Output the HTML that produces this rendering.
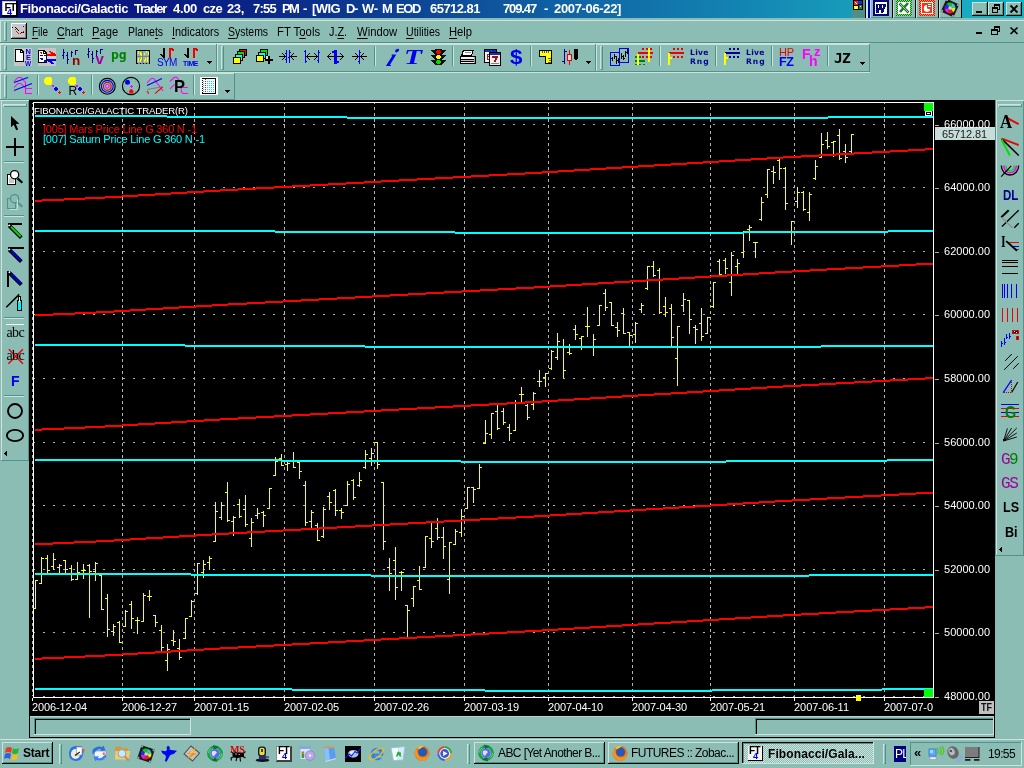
<!DOCTYPE html>
<html><head><meta charset="utf-8"><title>Fibonacci/Galactic Trader</title><style>
*{margin:0;padding:0;box-sizing:border-box}
html,body{width:1024px;height:768px;overflow:hidden;background:#8bbdb4;font-family:"Liberation Sans",sans-serif;font-size:12px;color:#000;will-change:transform}
.a{position:absolute}
#title{left:0;top:0;width:1024px;height:18px;background:linear-gradient(90deg,#0a0e7e 0,#0a2486 250px,#0f5aa0 520px,#1488b4 760px,#189cba 852px,#18b2c6 1024px)}
#ttext{left:20px;top:1px;width:700px;height:16px;color:#fff;font-weight:bold;font-size:13px;line-height:16px;white-space:pre}
.menu{top:24.6px;font-size:12px;line-height:14px;white-space:pre}
.menu u{text-decoration:underline;text-underline-offset:1.6px}
.hl{background:#cfe3de}
.sh{background:#4f948a}
svg{position:absolute;left:0;top:0;overflow:visible}
.tbtn{font-size:12px;line-height:14px;white-space:nowrap;overflow:hidden}
</style></head><body>
<div id="title" class="a"></div>
<div class="a" style="left:2px;top:1px;width:16px;height:16px;background:#000;"></div>
<div class="a" style="left:2px;top:1px;width:14px;height:14px;background:#c8c8c8;"></div>
<div class="a" style="left:3px;top:2px;width:13px;height:13px;background:#fff;"></div>
<div class="a" style="left:4.5px;top:1.5px;font:bold 10.5px/11px 'Liberation Sans',sans-serif;color:#000;letter-spacing:-0.9px">FT</div>
<div class="a" style="left:7px;top:7.5px;font:bold 9px/9px 'Liberation Sans',sans-serif;color:#0000f0">4</div>
<div id="ttext" class="a"><span class="a" style="left:0px;letter-spacing:-0.382px">Fibonacci/Galactic</span><span class="a" style="left:114px;letter-spacing:-1.292px">Trader</span><span class="a" style="left:153px;letter-spacing:-0.328px">4.00</span><span class="a" style="left:183px;letter-spacing:-0.656px">cze</span><span class="a" style="left:207px;letter-spacing:-0.359px">23,</span><span class="a" style="left:233px;letter-spacing:-0.758px">7:55</span><span class="a" style="left:262px;letter-spacing:-1.750px">PM</span><span class="a" style="left:283px;letter-spacing:0.000px">-</span><span class="a" style="left:292px;letter-spacing:-0.582px">[WIG</span><span class="a" style="left:326px;letter-spacing:-1.359px">D-</span><span class="a" style="left:342px;letter-spacing:-0.172px">W-</span><span class="a" style="left:362px;letter-spacing:0.000px">M</span><span class="a" style="left:376px;letter-spacing:-1.391px">EOD</span><span class="a" style="left:410px;letter-spacing:-0.529px">65712.81</span><span class="a" style="left:483px;letter-spacing:-1.128px">709.47</span><span class="a" style="left:524px;letter-spacing:0.000px">-</span><span class="a" style="left:534px;letter-spacing:-0.348px">2007-06-22]</span></div>
<div class="a" style="left:852px;top:0px;width:13px;height:18px;background:#4f8f88;"></div>
<div class="a" style="left:865px;top:0px;width:97px;height:18px;background:#8bbdb4;"></div>
<div class="a" style="left:852px;top:17px;width:110px;height:1px;background:#4f948a;"></div>
<svg width="1024" height="20" shape-rendering="crispEdges"><defs><pattern id="cw" width="2" height="2" patternUnits="userSpaceOnUse"><rect width="2" height="2" fill="#0000ff"/><rect width="1" height="1" fill="#000"/><rect x="1" y="1" width="1" height="1" fill="#000"/></pattern><pattern id="cx" width="2" height="2" patternUnits="userSpaceOnUse"><rect width="2" height="2" fill="#008000"/><rect width="1" height="1" fill="#a0d0a0"/><rect x="1" y="1" width="1" height="1" fill="#a0d0a0"/></pattern><pattern id="cp" width="2" height="2" patternUnits="userSpaceOnUse"><rect width="2" height="2" fill="#ff0000"/><rect width="1" height="1" fill="#d0a060"/><rect x="1" y="1" width="1" height="1" fill="#d0a060"/></pattern></defs><rect x="853" y="0" width="10" height="10" fill="#000"/><rect x="854" y="1" width="4" height="4" fill="#ff2020"/><rect x="858" y="1" width="4" height="3" fill="#1030e0"/><rect x="854" y="6" width="4" height="3" fill="#ffff20"/><rect x="859" y="5" width="3" height="4" fill="#208030"/><rect x="855" y="2" width="1" height="1" fill="#fff"/><rect x="856" y="3" width="1" height="1" fill="#fff"/><rect x="860" y="6" width="1" height="1" fill="#d0ffd0"/><rect x="855" y="7" width="2" height="1" fill="#fff"/><rect x="865" y="0" width="1" height="18" fill="#000"/><rect x="866" y="0" width="2" height="18" fill="#d0e8e4"/><rect x="868" y="0" width="2" height="18" fill="#0000b0"/><rect x="870" y="0" width="1" height="18" fill="#c0dcd8"/><rect x="873" y="0" width="16" height="16" fill="url(#cw)"/><rect x="875" y="2" width="12" height="12" fill="#fff"/><rect x="876" y="4" width="10" height="9" fill="url(#cw)"/><rect x="878" y="5" width="1" height="3" fill="#fff"/><rect x="882" y="5" width="1" height="3" fill="#fff"/><rect x="879" y="10" width="2" height="3" fill="#fff"/><path d="M886 6 L886 13 L883 13 Z" fill="#fff"/><rect x="896" y="0" width="16" height="16" fill="url(#cx)"/><rect x="898" y="2" width="12" height="12" fill="#fff"/><path d="M899.5 3.5 L908.5 12.5 M908 3 L900 12" stroke="#1a7a2a" stroke-width="2.6" shape-rendering="auto"/><path d="M900 4 L908 12" stroke="#e0f0e0" stroke-width="0.7" shape-rendering="auto"/><rect x="919" y="0" width="16" height="16" fill="url(#cp)"/><rect x="921" y="2" width="12" height="12" fill="#fff"/><rect x="922" y="3" width="10" height="10" fill="#f03818"/><path d="M927 5 A3.4 3.4 0 1 0 930.4 9.5 L927 8.4 Z" fill="#fff" shape-rendering="auto"/><rect x="928" y="4" width="3" height="1" fill="#fff"/><rect x="928" y="6" width="3" height="1" fill="#fff"/><rect x="892" y="0" width="1" height="18" fill="#000"/><rect x="893" y="0" width="1" height="18" fill="#c0dcd8"/><rect x="915" y="0" width="1" height="18" fill="#000"/><rect x="916" y="0" width="1" height="18" fill="#c0dcd8"/><rect x="938" y="0" width="1" height="18" fill="#000"/><rect x="939" y="0" width="1" height="18" fill="#c0dcd8"/><rect x="961" y="0" width="1" height="18" fill="#000"/></svg>
<svg width="1024" height="20"><g transform="translate(950,8) rotate(25) scale(1.0)"><rect x="-7" y="-7" width="14" height="14" fill="#181818"/><rect x="-7" y="-7" width="2" height="2" fill="#a0a0a0"/><rect x="5" y="-7" width="2" height="2" fill="#a0a0a0"/><rect x="-7" y="5" width="2" height="2" fill="#a0a0a0"/><rect x="5" y="5" width="2" height="2" fill="#a0a0a0"/><path d="M0 0 L0 -5.5 A5.5 5.5 0 0 1 4.8 -2.7 Z" fill="#20d0d0"/><path d="M0 0 L4.8 -2.7 A5.5 5.5 0 0 1 4.8 2.7 Z" fill="#f0e020"/><path d="M0 0 L4.8 2.7 A5.5 5.5 0 0 1 0 5.5 Z" fill="#e02020"/><path d="M0 0 L0 5.5 A5.5 5.5 0 0 1 -4.8 2.7 Z" fill="#e020e0"/><path d="M0 0 L-4.8 2.7 A5.5 5.5 0 0 1 -4.8 -2.7 Z" fill="#2030e0"/><path d="M0 0 L-4.8 -2.7 A5.5 5.5 0 0 1 0 -5.5 Z" fill="#20c020"/><circle r="1.6" fill="#d0d0d0"/></g></svg>
<div class="a" style="left:972px;top:2px;width:16px;height:14px;background:#8bbdb4;"></div>
<div class="a" style="left:972px;top:2px;width:15px;height:1px;background:#cfe3de;"></div>
<div class="a" style="left:972px;top:2px;width:1px;height:13px;background:#cfe3de;"></div>
<div class="a" style="left:972px;top:15px;width:16px;height:1px;background:#000;"></div>
<div class="a" style="left:987px;top:2px;width:1px;height:14px;background:#000;"></div>
<div class="a" style="left:973px;top:14px;width:14px;height:1px;background:#4f948a;"></div>
<div class="a" style="left:986px;top:3px;width:1px;height:12px;background:#4f948a;"></div>
<div class="a" style="left:988px;top:2px;width:16px;height:14px;background:#8bbdb4;"></div>
<div class="a" style="left:988px;top:2px;width:15px;height:1px;background:#cfe3de;"></div>
<div class="a" style="left:988px;top:2px;width:1px;height:13px;background:#cfe3de;"></div>
<div class="a" style="left:988px;top:15px;width:16px;height:1px;background:#000;"></div>
<div class="a" style="left:1003px;top:2px;width:1px;height:14px;background:#000;"></div>
<div class="a" style="left:989px;top:14px;width:14px;height:1px;background:#4f948a;"></div>
<div class="a" style="left:1002px;top:3px;width:1px;height:12px;background:#4f948a;"></div>
<div class="a" style="left:1006px;top:2px;width:16px;height:14px;background:#8bbdb4;"></div>
<div class="a" style="left:1006px;top:2px;width:15px;height:1px;background:#cfe3de;"></div>
<div class="a" style="left:1006px;top:2px;width:1px;height:13px;background:#cfe3de;"></div>
<div class="a" style="left:1006px;top:15px;width:16px;height:1px;background:#000;"></div>
<div class="a" style="left:1021px;top:2px;width:1px;height:14px;background:#000;"></div>
<div class="a" style="left:1007px;top:14px;width:14px;height:1px;background:#4f948a;"></div>
<div class="a" style="left:1020px;top:3px;width:1px;height:12px;background:#4f948a;"></div>
<svg width="1024" height="20" shape-rendering="crispEdges"><rect x="976" y="11" width="6" height="2" fill="#000"/><rect x="994" y="4" width="6" height="2" fill="#000"/><rect x="999" y="4" width="1" height="6" fill="#000"/><rect x="994" y="4" width="1" height="3" fill="#000"/><rect x="998" y="9" width="2" height="1" fill="#000"/><rect x="992" y="7" width="6" height="2" fill="#000"/><rect x="992" y="7" width="1" height="6" fill="#000"/><rect x="997" y="7" width="1" height="6" fill="#000"/><rect x="992" y="12" width="6" height="1" fill="#000"/></svg>
<svg width="1024" height="20"><path d="M1010.5 5.5 l7 7 M1017.5 5.5 l-7 7" stroke="#000" stroke-width="1.8" fill="none"/></svg>
<div class="a" style="left:0px;top:20px;width:1024px;height:1px;background:#cfe3de;"></div>
<div class="a" style="left:0px;top:42px;width:1024px;height:1px;background:#4f948a;"></div>
<div class="a" style="left:0px;top:43px;width:870px;height:1px;background:#cfe3de;"></div>
<div class="a" style="left:0px;top:20px;width:1px;height:22px;background:#cfe3de;"></div>
<div class="a" style="left:4px;top:22px;width:1px;height:18px;background:#cfe3de;"></div>
<div class="a" style="left:6px;top:22px;width:1px;height:19px;background:#4f948a;"></div>
<div class="a" style="left:4px;top:22px;width:2px;height:1px;background:#cfe3de;"></div>
<div class="a" style="left:5px;top:40px;width:2px;height:1px;background:#4f948a;"></div>
<div class="a" style="left:11px;top:23px;width:16px;height:16px;background:#c8c8c8;"></div>
<div class="a" style="left:11px;top:23px;width:16px;height:1px;background:#fff;"></div>
<div class="a" style="left:11px;top:23px;width:1px;height:16px;background:#fff;"></div>
<div class="a" style="left:11px;top:38px;width:16px;height:1px;background:#000;"></div>
<div class="a" style="left:26px;top:23px;width:1px;height:16px;background:#000;"></div>
<div class="a" style="left:12px;top:37px;width:14px;height:1px;background:#808080;"></div>
<div class="a" style="left:25px;top:24px;width:1px;height:14px;background:#808080;"></div>
<svg width="40" height="40" shape-rendering="crispEdges"><rect x="12" y="27" width="1" height="1" fill="#000"/><rect x="15" y="27" width="1" height="1" fill="#000"/><rect x="16" y="28" width="1" height="1" fill="#000"/><rect x="17" y="29" width="1" height="1" fill="#000"/><rect x="18" y="30" width="1" height="1" fill="#000"/><rect x="15" y="29" width="1" height="1" fill="#f00000"/><rect x="16" y="31" width="1" height="1" fill="#f00000"/><rect x="17" y="32" width="1" height="1" fill="#f00000"/><rect x="18" y="33" width="1" height="1" fill="#f00000"/><rect x="20" y="33" width="1" height="1" fill="#f00000"/><rect x="22" y="32" width="1" height="1" fill="#f00000"/><rect x="23" y="31" width="1" height="1" fill="#f00000"/><rect x="21" y="32" width="1" height="1" fill="#000"/><rect x="23" y="32" width="1" height="1" fill="#000"/><rect x="23" y="26" width="1" height="1" fill="#0000f0"/></svg>
<div class="a menu" style="left:32.4px;font-size:12.5px;transform:scaleX(0.7988);transform-origin:0 0"><u>F</u>ile</div>
<div class="a menu" style="left:57.4px;font-size:12.5px;transform:scaleX(0.8536);transform-origin:0 0"><u>C</u>hart</div>
<div class="a menu" style="left:92.4px;font-size:12.5px;transform:scaleX(0.8937);transform-origin:0 0"><u>P</u>age</div>
<div class="a menu" style="left:128.4px;font-size:12.5px;transform:scaleX(0.8413);transform-origin:0 0">Plane<u>t</u>s</div>
<div class="a menu" style="left:172.4px;font-size:12.5px;transform:scaleX(0.8687);transform-origin:0 0"><u>I</u>ndicators</div>
<div class="a menu" style="left:228.4px;font-size:12.5px;transform:scaleX(0.8365);transform-origin:0 0"><u>S</u>ystems</div>
<div class="a menu" style="left:277.4px;font-size:12.5px;transform:scaleX(0.9077);transform-origin:0 0">FT T<u>o</u>ols</div>
<div class="a menu" style="left:329.4px;font-size:12.5px;transform:scaleX(0.8677);transform-origin:0 0">J.<u>Z</u>.</div>
<div class="a menu" style="left:357.4px;font-size:12.5px;transform:scaleX(0.9014);transform-origin:0 0"><u>W</u>indow</div>
<div class="a menu" style="left:406.4px;font-size:12.5px;transform:scaleX(0.8462);transform-origin:0 0"><u>U</u>tilities</div>
<div class="a menu" style="left:449.4px;font-size:12.5px;transform:scaleX(0.8982);transform-origin:0 0"><u>H</u>elp</div>
<svg width="1024" height="44" shape-rendering="crispEdges"><rect x="976" y="32" width="6" height="2" fill="#000"/><rect x="994" y="26" width="6" height="2" fill="#000"/><rect x="999" y="26" width="1" height="6" fill="#000"/><rect x="994" y="26" width="1" height="3" fill="#000"/><rect x="998" y="31" width="2" height="1" fill="#000"/><rect x="991" y="29" width="7" height="2" fill="#000"/><rect x="991" y="29" width="1" height="6" fill="#000"/><rect x="997" y="29" width="1" height="6" fill="#000"/><rect x="991" y="34" width="7" height="1" fill="#000"/></svg>
<svg width="1024" height="44"><path d="M1010.5 27.5 l7 6.5 M1017.5 27.5 l-7 6.5" stroke="#000" stroke-width="1.7" fill="none"/></svg>
<div class="a" style="left:0px;top:71px;width:870px;height:1px;background:#4f948a;"></div>
<div class="a" style="left:0px;top:72px;width:870px;height:1px;background:#cfe3de;"></div>
<div class="a" style="left:0px;top:44px;width:217px;height:1px;background:#cfe3de;"></div>
<div class="a" style="left:0px;top:44px;width:1px;height:28px;background:#cfe3de;"></div>
<div class="a" style="left:0px;top:71px;width:217px;height:1px;background:#4f948a;"></div>
<div class="a" style="left:216px;top:44px;width:1px;height:28px;background:#4f948a;"></div>
<div class="a" style="left:217px;top:44px;width:379px;height:1px;background:#cfe3de;"></div>
<div class="a" style="left:217px;top:44px;width:1px;height:28px;background:#cfe3de;"></div>
<div class="a" style="left:217px;top:71px;width:379px;height:1px;background:#4f948a;"></div>
<div class="a" style="left:595px;top:44px;width:1px;height:28px;background:#4f948a;"></div>
<div class="a" style="left:596px;top:44px;width:274px;height:1px;background:#cfe3de;"></div>
<div class="a" style="left:596px;top:44px;width:1px;height:28px;background:#cfe3de;"></div>
<div class="a" style="left:596px;top:71px;width:274px;height:1px;background:#4f948a;"></div>
<div class="a" style="left:869px;top:44px;width:1px;height:28px;background:#4f948a;"></div>
<div class="a" style="left:4px;top:46px;width:1px;height:23px;background:#cfe3de;"></div>
<div class="a" style="left:6px;top:46px;width:1px;height:24px;background:#4f948a;"></div>
<div class="a" style="left:4px;top:46px;width:2px;height:1px;background:#cfe3de;"></div>
<div class="a" style="left:5px;top:69px;width:2px;height:1px;background:#4f948a;"></div>
<div class="a" style="left:221px;top:46px;width:1px;height:23px;background:#cfe3de;"></div>
<div class="a" style="left:223px;top:46px;width:1px;height:24px;background:#4f948a;"></div>
<div class="a" style="left:221px;top:46px;width:2px;height:1px;background:#cfe3de;"></div>
<div class="a" style="left:222px;top:69px;width:2px;height:1px;background:#4f948a;"></div>
<div class="a" style="left:600px;top:46px;width:1px;height:23px;background:#cfe3de;"></div>
<div class="a" style="left:602px;top:46px;width:1px;height:24px;background:#4f948a;"></div>
<div class="a" style="left:600px;top:46px;width:2px;height:1px;background:#cfe3de;"></div>
<div class="a" style="left:601px;top:69px;width:2px;height:1px;background:#4f948a;"></div>
<div class="a" style="left:0px;top:73px;width:235px;height:1px;background:#cfe3de;"></div>
<div class="a" style="left:0px;top:73px;width:1px;height:27px;background:#cfe3de;"></div>
<div class="a" style="left:0px;top:99px;width:235px;height:1px;background:#4f948a;"></div>
<div class="a" style="left:234px;top:73px;width:1px;height:27px;background:#4f948a;"></div>
<div class="a" style="left:0px;top:99px;width:235px;height:1px;background:#4f948a;"></div>
<div class="a" style="left:4px;top:75px;width:1px;height:22px;background:#cfe3de;"></div>
<div class="a" style="left:6px;top:75px;width:1px;height:23px;background:#4f948a;"></div>
<div class="a" style="left:4px;top:75px;width:2px;height:1px;background:#cfe3de;"></div>
<div class="a" style="left:5px;top:97px;width:2px;height:1px;background:#4f948a;"></div>
<div class="a" style="left:374px;top:46px;width:1px;height:20px;background:#4f948a;"></div>
<div class="a" style="left:375px;top:46px;width:1px;height:20px;background:#cfe3de;"></div>
<div class="a" style="left:452px;top:46px;width:1px;height:20px;background:#4f948a;"></div>
<div class="a" style="left:453px;top:46px;width:1px;height:20px;background:#cfe3de;"></div>
<div class="a" style="left:530px;top:46px;width:1px;height:20px;background:#4f948a;"></div>
<div class="a" style="left:531px;top:46px;width:1px;height:20px;background:#cfe3de;"></div>
<div class="a" style="left:659px;top:46px;width:1px;height:20px;background:#4f948a;"></div>
<div class="a" style="left:660px;top:46px;width:1px;height:20px;background:#cfe3de;"></div>
<div class="a" style="left:715px;top:46px;width:1px;height:20px;background:#4f948a;"></div>
<div class="a" style="left:716px;top:46px;width:1px;height:20px;background:#cfe3de;"></div>
<div class="a" style="left:771px;top:46px;width:1px;height:20px;background:#4f948a;"></div>
<div class="a" style="left:772px;top:46px;width:1px;height:20px;background:#cfe3de;"></div>
<div class="a" style="left:827px;top:46px;width:1px;height:20px;background:#4f948a;"></div>
<div class="a" style="left:828px;top:46px;width:1px;height:20px;background:#cfe3de;"></div>
<div class="a" style="left:37px;top:75px;width:1px;height:20px;background:#4f948a;"></div>
<div class="a" style="left:38px;top:75px;width:1px;height:20px;background:#cfe3de;"></div>
<div class="a" style="left:91px;top:75px;width:1px;height:20px;background:#4f948a;"></div>
<div class="a" style="left:92px;top:75px;width:1px;height:20px;background:#cfe3de;"></div>
<div class="a" style="left:193px;top:75px;width:1px;height:20px;background:#4f948a;"></div>
<div class="a" style="left:194px;top:75px;width:1px;height:20px;background:#cfe3de;"></div>
<svg width="1024" height="100" shape-rendering="crispEdges"><rect x="14" y="48" width="18" height="18" fill="#c6c6c6"/><path d="M15 49 H21 L24 52 V62 H15 Z" fill="#000"/><path d="M16 50 H20 V53 H23 V61 H16 Z" fill="#fff"/><rect x="21" y="51" width="1" height="1" fill="#fff"/><rect x="38" y="48" width="18" height="18" fill="#c6c6c6"/><path d="M38 50 H44 L47 53 V63 H38 Z" fill="#000"/><path d="M39 51 H43 V54 H46 V62 H39 Z" fill="#fff"/><rect x="44" y="52" width="1" height="1" fill="#fff"/><rect x="40" y="52" width="2" height="1" fill="#f00000"/><rect x="41" y="53" width="1" height="1" fill="#f00000"/><rect x="40" y="55" width="3" height="1" fill="#0000f0"/><rect x="44" y="55" width="2" height="1" fill="#0000f0"/><rect x="40" y="58" width="3" height="1" fill="#0000f0"/><rect x="41" y="59" width="2" height="1" fill="#0000f0"/><rect x="44" y="60" width="2" height="2" fill="#0000f0"/><rect x="47" y="54" width="9" height="2" fill="#f00000"/><rect x="51" y="53" width="4" height="1" fill="#f00000"/><rect x="50" y="52" width="3" height="1" fill="#f00000"/><rect x="49" y="51" width="2" height="1" fill="#f00000"/><rect x="47" y="56" width="9" height="3" fill="#d8d0d0"/><rect x="47" y="59" width="9" height="2" fill="#0000f0"/><rect x="48" y="61" width="4" height="1" fill="#0000f0"/><rect x="50" y="62" width="3" height="1" fill="#0000f0"/><rect x="51" y="63" width="3" height="1" fill="#0000f0"/><rect x="63" y="49" width="1" height="10" fill="#000090"/><rect x="62" y="55" width="1" height="1" fill="#000090"/><rect x="64" y="52" width="1" height="1" fill="#000090"/><rect x="67" y="52" width="1" height="12" fill="#000090"/><rect x="66" y="55" width="1" height="1" fill="#000090"/><rect x="68" y="59" width="1" height="1" fill="#000090"/><rect x="71" y="51" width="1" height="6" fill="#000090"/><rect x="72" y="52" width="1" height="1" fill="#000090"/><rect x="75" y="50" width="1" height="5" fill="#000090"/><rect x="76" y="50" width="2" height="1" fill="#000090"/><rect x="88" y="48" width="1" height="10" fill="#000090"/><rect x="87" y="54" width="1" height="1" fill="#000090"/><rect x="89" y="51" width="1" height="1" fill="#000090"/><rect x="92" y="51" width="1" height="12" fill="#000090"/><rect x="91" y="54" width="1" height="1" fill="#000090"/><rect x="93" y="58" width="1" height="1" fill="#000090"/><rect x="96" y="50" width="1" height="6" fill="#000090"/><rect x="97" y="51" width="1" height="1" fill="#000090"/><rect x="100" y="49" width="1" height="5" fill="#000090"/><rect x="101" y="49" width="2" height="1" fill="#000090"/><rect x="136" y="50" width="14" height="14" fill="#000"/><rect x="137" y="51" width="12" height="12" fill="#8fb4bc"/><rect x="142" y="51" width="1" height="12" fill="#808080"/><rect x="137" y="56" width="12" height="1" fill="#808080"/><rect x="138" y="51" width="1" height="3" fill="#ffff00"/><rect x="140" y="52" width="1" height="3" fill="#ffff00"/><rect x="141" y="53" width="1" height="3" fill="#ffff00"/><rect x="144" y="53" width="1" height="2" fill="#ffff00"/><rect x="146" y="51" width="1" height="2" fill="#ffff00"/><rect x="148" y="52" width="1" height="3" fill="#ffff00"/><rect x="138" y="58" width="1" height="4" fill="#ffff00"/><rect x="140" y="59" width="1" height="3" fill="#ffff00"/><rect x="141" y="57" width="1" height="3" fill="#ffff00"/><rect x="145" y="58" width="1" height="3" fill="#ffff00"/><rect x="147" y="57" width="1" height="5" fill="#ffff00"/><rect x="144" y="60" width="1" height="2" fill="#ffff00"/><rect x="138" y="63" width="2" height="1" fill="#808080"/><rect x="141" y="63" width="2" height="1" fill="#808080"/><rect x="144" y="63" width="2" height="1" fill="#808080"/><rect x="147" y="63" width="2" height="1" fill="#808080"/><rect x="163" y="48" width="2" height="10" fill="#000"/><rect x="160" y="54" width="2" height="1" fill="#000"/><rect x="161" y="55" width="2" height="1" fill="#000"/><rect x="162" y="56" width="2" height="1" fill="#000"/><rect x="169" y="48" width="2" height="10" fill="#f00000"/><rect x="171" y="48" width="2" height="1" fill="#f00000"/><rect x="171" y="49" width="3" height="1" fill="#f00000"/><rect x="172" y="50" width="2" height="1" fill="#f00000"/><rect x="187" y="48" width="2" height="10" fill="#000"/><rect x="184" y="54" width="2" height="1" fill="#000"/><rect x="185" y="55" width="2" height="1" fill="#000"/><rect x="186" y="56" width="2" height="1" fill="#000"/><rect x="193" y="48" width="2" height="10" fill="#f00000"/><rect x="195" y="48" width="2" height="1" fill="#f00000"/><rect x="195" y="49" width="3" height="1" fill="#f00000"/><rect x="196" y="50" width="2" height="1" fill="#f00000"/><rect x="207" y="61" width="5" height="1" fill="#000"/><rect x="208" y="62" width="3" height="1" fill="#000"/><rect x="209" y="63" width="1" height="1" fill="#000"/><rect x="239" y="49" width="8" height="7" fill="#000"/><rect x="240" y="50" width="6" height="5" fill="#ff0000"/><rect x="237" y="51" width="8" height="7" fill="#000"/><rect x="238" y="52" width="6" height="5" fill="#00e000"/><rect x="235" y="54" width="8" height="7" fill="#000"/><rect x="236" y="55" width="6" height="5" fill="#00ffff"/><rect x="233" y="57" width="8" height="7" fill="#000"/><rect x="234" y="58" width="6" height="5" fill="#ffff00"/><rect x="260" y="49" width="8" height="7" fill="#000"/><rect x="261" y="50" width="6" height="5" fill="#00e000"/><rect x="258" y="52" width="8" height="7" fill="#000"/><rect x="259" y="53" width="6" height="5" fill="#00ffff"/><rect x="256" y="55" width="8" height="7" fill="#000"/><rect x="257" y="56" width="6" height="5" fill="#ffff00"/><rect x="266" y="56" width="2" height="3" fill="#e0e0e0"/><rect x="265" y="59" width="8" height="2" fill="#000"/><rect x="268" y="56" width="2" height="8" fill="#000"/><rect x="279" y="56" width="7" height="1" fill="#000"/><rect x="284" y="55" width="1" height="1" fill="#000"/><rect x="284" y="57" width="1" height="1" fill="#000"/><rect x="283" y="54" width="1" height="1" fill="#000"/><rect x="283" y="58" width="1" height="1" fill="#000"/><rect x="282" y="53" width="1" height="1" fill="#000"/><rect x="282" y="59" width="1" height="1" fill="#000"/><rect x="290" y="56" width="7" height="1" fill="#000"/><rect x="291" y="55" width="1" height="1" fill="#000"/><rect x="291" y="57" width="1" height="1" fill="#000"/><rect x="292" y="54" width="1" height="1" fill="#000"/><rect x="292" y="58" width="1" height="1" fill="#000"/><rect x="293" y="53" width="1" height="1" fill="#000"/><rect x="293" y="59" width="1" height="1" fill="#000"/><rect x="286" y="50" width="1" height="13" fill="#0000f0"/><rect x="289" y="50" width="1" height="13" fill="#0000f0"/><rect x="285" y="53" width="1" height="1" fill="#0000f0"/><rect x="285" y="59" width="1" height="1" fill="#0000f0"/><rect x="290" y="52" width="1" height="1" fill="#0000f0"/><rect x="288" y="57" width="1" height="1" fill="#0000f0"/><rect x="305" y="50" width="1" height="13" fill="#0000f0"/><rect x="318" y="50" width="1" height="13" fill="#0000f0"/><rect x="304" y="51" width="1" height="1" fill="#0000f0"/><rect x="306" y="61" width="1" height="1" fill="#0000f0"/><rect x="319" y="52" width="1" height="1" fill="#0000f0"/><rect x="317" y="60" width="1" height="1" fill="#0000f0"/><rect x="306" y="56" width="12" height="1" fill="#000"/><rect x="307" y="55" width="1" height="1" fill="#000"/><rect x="307" y="57" width="1" height="1" fill="#000"/><rect x="308" y="54" width="1" height="1" fill="#000"/><rect x="308" y="58" width="1" height="1" fill="#000"/><rect x="309" y="53" width="1" height="1" fill="#000"/><rect x="309" y="59" width="1" height="1" fill="#000"/><rect x="316" y="55" width="1" height="1" fill="#000"/><rect x="316" y="57" width="1" height="1" fill="#000"/><rect x="315" y="54" width="1" height="1" fill="#000"/><rect x="315" y="58" width="1" height="1" fill="#000"/><rect x="314" y="53" width="1" height="1" fill="#000"/><rect x="314" y="59" width="1" height="1" fill="#000"/><rect x="327" y="56" width="17" height="1" fill="#000"/><rect x="328" y="55" width="1" height="1" fill="#000"/><rect x="328" y="57" width="1" height="1" fill="#000"/><rect x="329" y="54" width="1" height="1" fill="#000"/><rect x="329" y="58" width="1" height="1" fill="#000"/><rect x="330" y="53" width="1" height="1" fill="#000"/><rect x="330" y="59" width="1" height="1" fill="#000"/><rect x="342" y="55" width="1" height="1" fill="#000"/><rect x="342" y="57" width="1" height="1" fill="#000"/><rect x="341" y="54" width="1" height="1" fill="#000"/><rect x="341" y="58" width="1" height="1" fill="#000"/><rect x="340" y="53" width="1" height="1" fill="#000"/><rect x="340" y="59" width="1" height="1" fill="#000"/><rect x="334" y="50" width="3" height="14" fill="#0000f0"/><rect x="332" y="51" width="2" height="2" fill="#0000f0"/><rect x="337" y="61" width="2" height="2" fill="#0000f0"/><rect x="352" y="56" width="7" height="1" fill="#000"/><rect x="357" y="55" width="1" height="1" fill="#000"/><rect x="357" y="57" width="1" height="1" fill="#000"/><rect x="356" y="54" width="1" height="1" fill="#000"/><rect x="356" y="58" width="1" height="1" fill="#000"/><rect x="355" y="53" width="1" height="1" fill="#000"/><rect x="355" y="59" width="1" height="1" fill="#000"/><rect x="360" y="56" width="7" height="1" fill="#000"/><rect x="361" y="55" width="1" height="1" fill="#000"/><rect x="361" y="57" width="1" height="1" fill="#000"/><rect x="362" y="54" width="1" height="1" fill="#000"/><rect x="362" y="58" width="1" height="1" fill="#000"/><rect x="363" y="53" width="1" height="1" fill="#000"/><rect x="363" y="59" width="1" height="1" fill="#000"/><rect x="359" y="50" width="1" height="14" fill="#0000f0"/><rect x="360" y="52" width="1" height="1" fill="#0000f0"/><rect x="358" y="61" width="1" height="1" fill="#0000f0"/><rect x="435" y="49" width="7" height="16" fill="#101010"/><rect x="431" y="50" width="15" height="1" fill="#101010"/><rect x="432" y="51" width="13" height="1" fill="#101010"/><rect x="433" y="52" width="11" height="1" fill="#101010"/><rect x="434" y="53" width="9" height="1" fill="#101010"/><rect x="431" y="55" width="15" height="1" fill="#101010"/><rect x="432" y="56" width="13" height="1" fill="#101010"/><rect x="433" y="57" width="11" height="1" fill="#101010"/><rect x="434" y="58" width="9" height="1" fill="#101010"/><rect x="431" y="60" width="15" height="1" fill="#101010"/><rect x="432" y="61" width="13" height="1" fill="#101010"/><rect x="433" y="62" width="11" height="1" fill="#101010"/><rect x="434" y="63" width="9" height="1" fill="#101010"/><rect x="437" y="50" width="3" height="4" fill="#ff0000"/><rect x="436" y="51" width="5" height="2" fill="#ff0000"/><rect x="437" y="55" width="3" height="4" fill="#ffff00"/><rect x="436" y="56" width="5" height="2" fill="#ffff00"/><rect x="437" y="60" width="3" height="4" fill="#00e000"/><rect x="436" y="61" width="5" height="2" fill="#00e000"/><path d="M463 50 H474 L472 56 H461 Z" fill="#000"/><path d="M464 51 H472.6 L471.2 55 H462.6 Z" fill="#fff"/><rect x="465" y="52" width="6" height="1" fill="#909090"/><rect x="460" y="56" width="16" height="8" fill="#000"/><rect x="461" y="57" width="13" height="2" fill="#f0f0f0"/><rect x="461" y="60" width="13" height="1" fill="#c0c0c0"/><rect x="461" y="62" width="13" height="1" fill="#f0f0f0"/><rect x="474" y="57" width="1" height="6" fill="#a0a0a0"/><rect x="484" y="49" width="13" height="14" fill="#000"/><rect x="485" y="50" width="11" height="12" fill="#f0f0f0"/><rect x="485" y="50" width="11" height="2" fill="#1030b0"/><rect x="487" y="54" width="4" height="6" fill="#c01010"/><rect x="488" y="55" width="2" height="1" fill="#f0f0f0"/><rect x="488" y="57" width="2" height="2" fill="#f0f0f0"/><rect x="489" y="52" width="12" height="14" fill="#000"/><rect x="490" y="53" width="10" height="12" fill="#f0f0f0"/><rect x="490" y="53" width="10" height="2" fill="#1030b0"/><rect x="492" y="56" width="6" height="2" fill="#a01010"/><rect x="495" y="58" width="2" height="2" fill="#a01010"/><rect x="494" y="60" width="2" height="2" fill="#a01010"/><rect x="491" y="63" width="8" height="1" fill="#808080"/><path d="M539 50 H552 V64 H545 V57 H539 Z" fill="#000"/><path d="M540 51 H551 V63 H546 V56 H540 Z" fill="#ffff00"/><rect x="542" y="51" width="1" height="2" fill="#606000"/><rect x="544" y="51" width="1" height="2" fill="#606000"/><rect x="546" y="51" width="1" height="2" fill="#606000"/><rect x="548" y="51" width="1" height="2" fill="#606000"/><rect x="548" y="58" width="3" height="1" fill="#606000"/><rect x="549" y="60" width="2" height="1" fill="#606000"/><rect x="548" y="62" width="3" height="1" fill="#606000"/><rect x="564" y="49" width="1" height="15" fill="#000090"/><rect x="565" y="51" width="2" height="1" fill="#000090"/><rect x="562" y="61" width="2" height="1" fill="#000090"/><rect x="569" y="50" width="1" height="15" fill="#f00000"/><rect x="567" y="54" width="5" height="7" fill="#f00000"/><rect x="568" y="55" width="3" height="5" fill="#d8d8d8"/><rect x="574" y="49" width="4" height="10" fill="#000"/><rect x="575" y="59" width="2" height="1" fill="#000"/><rect x="586" y="61" width="5" height="1" fill="#000"/><rect x="587" y="62" width="3" height="1" fill="#000"/><rect x="588" y="63" width="1" height="1" fill="#000"/><rect x="619" y="48" width="10" height="15" fill="#0000f0"/><rect x="620" y="49" width="8" height="13" fill="#8bbdb4"/><rect x="610" y="52" width="10" height="14" fill="#0000f0"/><rect x="611" y="53" width="8" height="12" fill="#8bbdb4"/><rect x="612" y="57" width="1" height="4" fill="#000"/><rect x="614" y="54" width="1" height="5" fill="#000"/><rect x="616" y="56" width="1" height="8" fill="#000"/><rect x="618" y="58" width="1" height="5" fill="#000"/><rect x="621" y="53" width="1" height="6" fill="#000"/><rect x="623" y="55" width="1" height="5" fill="#000"/><rect x="625" y="51" width="1" height="6" fill="#000"/><rect x="627" y="49" width="1" height="5" fill="#000"/><rect x="611" y="58" width="1" height="1" fill="#000"/><rect x="615" y="56" width="1" height="1" fill="#000"/><rect x="617" y="60" width="1" height="1" fill="#000"/><rect x="622" y="56" width="1" height="1" fill="#000"/><rect x="624" y="58" width="1" height="1" fill="#000"/><rect x="626" y="52" width="1" height="1" fill="#000"/><rect x="642" y="48" width="2" height="2" fill="#f00000"/><rect x="642" y="56" width="2" height="2" fill="#f00000"/><rect x="646" y="48" width="2" height="2" fill="#f00000"/><rect x="646" y="56" width="2" height="2" fill="#f00000"/><rect x="650" y="48" width="2" height="2" fill="#f00000"/><rect x="650" y="56" width="2" height="2" fill="#f00000"/><rect x="638" y="52" width="15" height="2" fill="#f00000"/><rect x="648" y="48" width="2" height="14" fill="#ffff00"/><rect x="635" y="56" width="2" height="2" fill="#008000"/><rect x="639" y="56" width="2" height="2" fill="#008000"/><rect x="635" y="60" width="10" height="2" fill="#008000"/><rect x="635" y="64" width="2" height="1" fill="#008000"/><rect x="639" y="64" width="2" height="1" fill="#008000"/><rect x="643" y="64" width="2" height="1" fill="#008000"/><rect x="637" y="54" width="2" height="11" fill="#ffff00"/><rect x="673" y="48" width="2" height="2" fill="#f00000"/><rect x="673" y="56" width="2" height="2" fill="#f00000"/><rect x="677" y="48" width="2" height="2" fill="#f00000"/><rect x="677" y="56" width="2" height="2" fill="#f00000"/><rect x="681" y="48" width="2" height="2" fill="#f00000"/><rect x="681" y="56" width="2" height="2" fill="#f00000"/><rect x="669" y="52" width="15" height="2" fill="#f00000"/><rect x="668" y="53" width="2" height="12" fill="#ffff00"/><rect x="670" y="57" width="2" height="2" fill="#ffff00"/><rect x="729" y="48" width="2" height="2" fill="#000090"/><rect x="729" y="56" width="2" height="2" fill="#000090"/><rect x="733" y="48" width="2" height="2" fill="#000090"/><rect x="733" y="56" width="2" height="2" fill="#000090"/><rect x="737" y="48" width="2" height="2" fill="#000090"/><rect x="737" y="56" width="2" height="2" fill="#000090"/><rect x="725" y="52" width="15" height="2" fill="#000090"/><rect x="724" y="53" width="2" height="12" fill="#ffff00"/><rect x="726" y="57" width="2" height="2" fill="#ffff00"/><rect x="860" y="62" width="5" height="1" fill="#000"/><rect x="861" y="63" width="3" height="1" fill="#000"/><rect x="862" y="64" width="1" height="1" fill="#000"/><path d="M46 77 H50 L52 79 V83 L50 85 H46 L44 83 V79 Z" fill="#ffff00"/><rect x="52" y="85" width="2" height="2" fill="#ff00ff"/><rect x="55" y="87" width="2" height="4" fill="#0000f0"/><rect x="54" y="88" width="4" height="2" fill="#0000f0"/><rect x="59" y="91" width="1" height="3" fill="#ff0000"/><rect x="58" y="92" width="3" height="1" fill="#ff0000"/><path d="M70 77 H74 L76 79 V83 L74 85 H70 L68 83 V79 Z" fill="#ffff00"/><rect x="76" y="85" width="2" height="2" fill="#ff00ff"/><rect x="79" y="87" width="2" height="4" fill="#0000f0"/><rect x="78" y="88" width="4" height="2" fill="#0000f0"/><rect x="83" y="91" width="1" height="3" fill="#ff0000"/><rect x="82" y="92" width="3" height="1" fill="#ff0000"/><rect x="131" y="85" width="1" height="3" fill="#ff00ff"/><rect x="130" y="86" width="3" height="1" fill="#ff00ff"/><rect x="131" y="79" width="1" height="1" fill="#c08080"/><rect x="135" y="81" width="1" height="1" fill="#c08080"/><rect x="137" y="86" width="1" height="1" fill="#c08080"/><rect x="135" y="91" width="1" height="1" fill="#c08080"/><rect x="127" y="91" width="1" height="1" fill="#c08080"/><rect x="124" y="86" width="1" height="1" fill="#c08080"/><rect x="200" y="77" width="18" height="18" fill="#fff"/><rect x="202" y="78" width="14" height="16" fill="#000"/><rect x="203" y="79" width="12" height="14" fill="#fff"/><rect x="202" y="79" width="1" height="1" fill="#fff"/><rect x="202" y="81" width="1" height="1" fill="#fff"/><rect x="202" y="83" width="1" height="1" fill="#fff"/><rect x="202" y="85" width="1" height="1" fill="#fff"/><rect x="202" y="87" width="1" height="1" fill="#fff"/><rect x="202" y="89" width="1" height="1" fill="#fff"/><rect x="202" y="91" width="1" height="1" fill="#fff"/><rect x="203" y="81" width="1" height="1" fill="#00d8f0"/><rect x="207" y="81" width="1" height="1" fill="#00d8f0"/><rect x="209" y="81" width="1" height="1" fill="#00d8f0"/><rect x="211" y="81" width="1" height="1" fill="#00d8f0"/><rect x="213" y="81" width="1" height="1" fill="#00d8f0"/><rect x="205" y="81" width="1" height="1" fill="#ff0000"/><rect x="203" y="83" width="1" height="1" fill="#00d8f0"/><rect x="207" y="83" width="1" height="1" fill="#00d8f0"/><rect x="209" y="83" width="1" height="1" fill="#00d8f0"/><rect x="211" y="83" width="1" height="1" fill="#00d8f0"/><rect x="213" y="83" width="1" height="1" fill="#00d8f0"/><rect x="205" y="83" width="1" height="1" fill="#ff0000"/><rect x="203" y="85" width="1" height="1" fill="#00d8f0"/><rect x="207" y="85" width="1" height="1" fill="#00d8f0"/><rect x="209" y="85" width="1" height="1" fill="#00d8f0"/><rect x="211" y="85" width="1" height="1" fill="#00d8f0"/><rect x="213" y="85" width="1" height="1" fill="#00d8f0"/><rect x="205" y="85" width="1" height="1" fill="#ff0000"/><rect x="203" y="87" width="1" height="1" fill="#00d8f0"/><rect x="207" y="87" width="1" height="1" fill="#00d8f0"/><rect x="209" y="87" width="1" height="1" fill="#00d8f0"/><rect x="211" y="87" width="1" height="1" fill="#00d8f0"/><rect x="213" y="87" width="1" height="1" fill="#00d8f0"/><rect x="205" y="87" width="1" height="1" fill="#ff0000"/><rect x="203" y="89" width="1" height="1" fill="#00d8f0"/><rect x="207" y="89" width="1" height="1" fill="#00d8f0"/><rect x="209" y="89" width="1" height="1" fill="#00d8f0"/><rect x="211" y="89" width="1" height="1" fill="#00d8f0"/><rect x="213" y="89" width="1" height="1" fill="#00d8f0"/><rect x="205" y="89" width="1" height="1" fill="#ff0000"/><rect x="203" y="91" width="1" height="1" fill="#00d8f0"/><rect x="207" y="91" width="1" height="1" fill="#00d8f0"/><rect x="209" y="91" width="1" height="1" fill="#00d8f0"/><rect x="211" y="91" width="1" height="1" fill="#00d8f0"/><rect x="213" y="91" width="1" height="1" fill="#00d8f0"/><rect x="205" y="91" width="1" height="1" fill="#ff0000"/><rect x="205" y="79" width="1" height="1" fill="#ff0000"/><rect x="225" y="90" width="5" height="1" fill="#000"/><rect x="226" y="91" width="3" height="1" fill="#000"/><rect x="227" y="92" width="1" height="1" fill="#000"/></svg>
<svg width="1024" height="100"><path d="M14 81.5 L18 77.5 H21 L25.5 82.5 V88.5 H32" stroke="#ff00ff" stroke-width="1.05" fill="none" /><path d="M14 87.5 L18 83.5 H21 L25.5 88.5 V93.5 H32" stroke="#ff00ff" stroke-width="1.05" fill="none" /><path d="M14 82.5 L28 77.5" stroke="#0000f0" stroke-width="1.1" fill="none" /><path d="M14 90.5 L32 83.5" stroke="#0000f0" stroke-width="1.1" fill="none" /><circle cx="107.3" cy="86.3" r="7.9" fill="none" stroke="#000" stroke-width="1.15"/><circle cx="107.3" cy="86.3" r="5.9" fill="none" stroke="#0000f0" stroke-width="1.1"/><circle cx="107.3" cy="86.3" r="3.9" fill="none" stroke="#f00000" stroke-width="1.1"/><circle cx="107.3" cy="86.3" r="1.9" fill="none" stroke="#ff00ff" stroke-width="1.0"/><circle cx="131" cy="86" r="8.6" fill="none" stroke="#000" stroke-width="1.15"/><circle cx="127.5" cy="82.3" r="2.5" fill="#0000f0"/><circle cx="131.3" cy="91.5" r="2.2" fill="#ff0000"/><path d="M147 82.8 L151.3 78.5 H153.6 L163 91" stroke="#ff00ff" stroke-width="1.05" fill="none" /><path d="M147 85.5 L162 78.5" stroke="#0000f0" stroke-width="1.1" fill="none" /><path d="M147 89.4 L162.6 86.7" stroke="#808080" stroke-width="1.05" fill="none" /><path d="M147.3 91 L148.6 93.7 M155 93.7 L162.6 87" stroke="#f00000" stroke-width="1.1" fill="none" /><path d="M170 81.5 L174.3 77.3 H176.5 L179 80" stroke="#ff00ff" stroke-width="1.05" fill="none" /><path d="M170 88.8 L174.5 84.3" stroke="#ff00ff" stroke-width="1.05" fill="none" /><path d="M183 87.5 H187.8 M181 88 Q181 93.5 184 93.5 H187.8" stroke="#ff00ff" stroke-width="1.05" fill="none" /></svg>
<div class="a" style="left:25.5px;top:49px;color:#0000f0;font:bold 7.5px/6px 'Liberation Sans',sans-serif;white-space:nowrap;">N</div>
<div class="a" style="left:26px;top:55px;color:#0000f0;font:bold 7.5px/6px 'Liberation Sans',sans-serif;white-space:nowrap;">E</div>
<div class="a" style="left:25px;top:60.5px;color:#0000f0;font:bold 6.5px/6px 'Liberation Sans',sans-serif;white-space:nowrap;">W</div>
<div class="a" style="left:72px;top:54px;color:#900000;font:bold 13.5px/14px 'Liberation Sans',sans-serif;white-space:nowrap;">n</div>
<div class="a" style="left:95.5px;top:52px;color:#a000a0;font:bold 15px/14px 'Liberation Sans',sans-serif;white-space:nowrap;">v</div>
<div class="a" style="left:111px;top:48px;color:#008000;font:bold 13px/14px 'DejaVu Sans Mono',monospace;white-space:nowrap;">pg</div>
<div class="a" style="left:157px;top:58px;color:#0000f0;font:10px/10px 'Liberation Sans',sans-serif;white-space:nowrap;letter-spacing:-0.7px;">SYM</div>
<div class="a" style="left:183px;top:60px;color:#0000f0;font:bold 7px/8px 'Liberation Sans',sans-serif;white-space:nowrap;letter-spacing:-0.4px;">TIME</div>
<div class="a" style="left:383px;top:45px;color:#0000f0;font:italic bold 25px/26px 'Liberation Serif',serif;white-space:nowrap;transform:skewX(-24deg);transform-origin:0 100%;">i</div>
<div class="a" style="left:404px;top:46px;color:#0000f0;font:italic bold 21px/22px 'Liberation Serif',serif;white-space:nowrap;transform:scaleX(1.4);transform-origin:0 0;">T</div>
<div class="a" style="left:510px;top:46px;color:#0000f0;font:bold 20px/22px 'Liberation Sans',sans-serif;white-space:nowrap;transform:scaleX(1.12);transform-origin:0 0;">$</div>
<div class="a" style="left:690px;top:49px;color:#000090;font:bold 7.6px/8px 'DejaVu Sans',sans-serif;white-space:nowrap;letter-spacing:0.3px;">Live</div>
<div class="a" style="left:690px;top:58px;color:#000090;font:bold 7.6px/8px 'DejaVu Sans',sans-serif;white-space:nowrap;letter-spacing:1px;">Rng</div>
<div class="a" style="left:746px;top:49px;color:#000090;font:bold 7.6px/8px 'DejaVu Sans',sans-serif;white-space:nowrap;letter-spacing:0.3px;">Live</div>
<div class="a" style="left:746px;top:58px;color:#000090;font:bold 7.6px/8px 'DejaVu Sans',sans-serif;white-space:nowrap;letter-spacing:1px;">Rng</div>
<div class="a" style="left:779px;top:47px;color:#f00000;font:11px/11px 'Liberation Sans',sans-serif;white-space:nowrap;letter-spacing:-0.3px;">HP</div>
<div class="a" style="left:779px;top:55.5px;color:#0000f0;font:bold 12.5px/12px 'Liberation Sans',sans-serif;white-space:nowrap;letter-spacing:-0.3px;">FZ</div>
<div class="a" style="left:802px;top:47px;color:#ff00ff;font:bold 14px/14px 'Liberation Sans',sans-serif;white-space:nowrap;">F</div>
<div class="a" style="left:809px;top:53.5px;color:#ff00ff;font:bold 14px/14px 'Liberation Sans',sans-serif;white-space:nowrap;">h</div>
<div class="a" style="left:814px;top:45px;color:#ff00ff;font:bold 13px/14px 'Liberation Sans',sans-serif;white-space:nowrap;">z</div>
<div class="a" style="left:834px;top:49.5px;color:#000;font:bold 14.5px/16px 'DejaVu Sans Mono',monospace;white-space:nowrap;letter-spacing:-0.7px;">JZ</div>
<div class="a" style="left:68.5px;top:84.5px;color:#000;font:12px/12px 'Liberation Sans',sans-serif;white-space:nowrap;">R</div>
<div class="a" style="left:174px;top:78px;color:#000;font:bold 16.5px/16px 'Liberation Sans',sans-serif;white-space:nowrap;">P</div>
<svg width="1024" height="768" shape-rendering="crispEdges" font-family="'Liberation Sans',sans-serif"><rect x="29" y="100" width="966" height="616" fill="#000"/><rect x="34" y="124" width="1" height="1" fill="#b4b4b4"/><rect x="43" y="124" width="2" height="1" fill="#b4b4b4"/><rect x="53" y="124" width="2" height="1" fill="#b4b4b4"/><rect x="63" y="124" width="2" height="1" fill="#b4b4b4"/><rect x="73" y="124" width="2" height="1" fill="#b4b4b4"/><rect x="83" y="124" width="2" height="1" fill="#b4b4b4"/><rect x="93" y="124" width="2" height="1" fill="#b4b4b4"/><rect x="103" y="124" width="2" height="1" fill="#b4b4b4"/><rect x="113" y="124" width="2" height="1" fill="#b4b4b4"/><rect x="123" y="124" width="2" height="1" fill="#b4b4b4"/><rect x="133" y="124" width="2" height="1" fill="#b4b4b4"/><rect x="143" y="124" width="2" height="1" fill="#b4b4b4"/><rect x="153" y="124" width="2" height="1" fill="#b4b4b4"/><rect x="163" y="124" width="2" height="1" fill="#b4b4b4"/><rect x="173" y="124" width="2" height="1" fill="#b4b4b4"/><rect x="183" y="124" width="2" height="1" fill="#b4b4b4"/><rect x="193" y="124" width="2" height="1" fill="#b4b4b4"/><rect x="203" y="124" width="2" height="1" fill="#b4b4b4"/><rect x="213" y="124" width="2" height="1" fill="#b4b4b4"/><rect x="223" y="124" width="2" height="1" fill="#b4b4b4"/><rect x="233" y="124" width="2" height="1" fill="#b4b4b4"/><rect x="243" y="124" width="2" height="1" fill="#b4b4b4"/><rect x="253" y="124" width="2" height="1" fill="#b4b4b4"/><rect x="263" y="124" width="2" height="1" fill="#b4b4b4"/><rect x="273" y="124" width="2" height="1" fill="#b4b4b4"/><rect x="283" y="124" width="2" height="1" fill="#b4b4b4"/><rect x="293" y="124" width="2" height="1" fill="#b4b4b4"/><rect x="303" y="124" width="2" height="1" fill="#b4b4b4"/><rect x="313" y="124" width="2" height="1" fill="#b4b4b4"/><rect x="323" y="124" width="2" height="1" fill="#b4b4b4"/><rect x="333" y="124" width="2" height="1" fill="#b4b4b4"/><rect x="343" y="124" width="2" height="1" fill="#b4b4b4"/><rect x="353" y="124" width="2" height="1" fill="#b4b4b4"/><rect x="363" y="124" width="2" height="1" fill="#b4b4b4"/><rect x="373" y="124" width="2" height="1" fill="#b4b4b4"/><rect x="383" y="124" width="2" height="1" fill="#b4b4b4"/><rect x="393" y="124" width="2" height="1" fill="#b4b4b4"/><rect x="403" y="124" width="2" height="1" fill="#b4b4b4"/><rect x="413" y="124" width="2" height="1" fill="#b4b4b4"/><rect x="423" y="124" width="2" height="1" fill="#b4b4b4"/><rect x="433" y="124" width="2" height="1" fill="#b4b4b4"/><rect x="443" y="124" width="2" height="1" fill="#b4b4b4"/><rect x="453" y="124" width="2" height="1" fill="#b4b4b4"/><rect x="463" y="124" width="2" height="1" fill="#b4b4b4"/><rect x="473" y="124" width="2" height="1" fill="#b4b4b4"/><rect x="483" y="124" width="2" height="1" fill="#b4b4b4"/><rect x="493" y="124" width="2" height="1" fill="#b4b4b4"/><rect x="503" y="124" width="2" height="1" fill="#b4b4b4"/><rect x="513" y="124" width="2" height="1" fill="#b4b4b4"/><rect x="523" y="124" width="2" height="1" fill="#b4b4b4"/><rect x="533" y="124" width="2" height="1" fill="#b4b4b4"/><rect x="543" y="124" width="2" height="1" fill="#b4b4b4"/><rect x="553" y="124" width="2" height="1" fill="#b4b4b4"/><rect x="563" y="124" width="2" height="1" fill="#b4b4b4"/><rect x="573" y="124" width="2" height="1" fill="#b4b4b4"/><rect x="583" y="124" width="2" height="1" fill="#b4b4b4"/><rect x="593" y="124" width="2" height="1" fill="#b4b4b4"/><rect x="603" y="124" width="2" height="1" fill="#b4b4b4"/><rect x="613" y="124" width="2" height="1" fill="#b4b4b4"/><rect x="623" y="124" width="2" height="1" fill="#b4b4b4"/><rect x="633" y="124" width="2" height="1" fill="#b4b4b4"/><rect x="643" y="124" width="2" height="1" fill="#b4b4b4"/><rect x="653" y="124" width="2" height="1" fill="#b4b4b4"/><rect x="663" y="124" width="2" height="1" fill="#b4b4b4"/><rect x="673" y="124" width="2" height="1" fill="#b4b4b4"/><rect x="683" y="124" width="2" height="1" fill="#b4b4b4"/><rect x="693" y="124" width="2" height="1" fill="#b4b4b4"/><rect x="703" y="124" width="2" height="1" fill="#b4b4b4"/><rect x="713" y="124" width="2" height="1" fill="#b4b4b4"/><rect x="723" y="124" width="2" height="1" fill="#b4b4b4"/><rect x="733" y="124" width="2" height="1" fill="#b4b4b4"/><rect x="743" y="124" width="2" height="1" fill="#b4b4b4"/><rect x="753" y="124" width="2" height="1" fill="#b4b4b4"/><rect x="763" y="124" width="2" height="1" fill="#b4b4b4"/><rect x="773" y="124" width="2" height="1" fill="#b4b4b4"/><rect x="783" y="124" width="2" height="1" fill="#b4b4b4"/><rect x="793" y="124" width="2" height="1" fill="#b4b4b4"/><rect x="803" y="124" width="2" height="1" fill="#b4b4b4"/><rect x="813" y="124" width="2" height="1" fill="#b4b4b4"/><rect x="823" y="124" width="2" height="1" fill="#b4b4b4"/><rect x="833" y="124" width="2" height="1" fill="#b4b4b4"/><rect x="843" y="124" width="2" height="1" fill="#b4b4b4"/><rect x="853" y="124" width="2" height="1" fill="#b4b4b4"/><rect x="863" y="124" width="2" height="1" fill="#b4b4b4"/><rect x="873" y="124" width="2" height="1" fill="#b4b4b4"/><rect x="883" y="124" width="2" height="1" fill="#b4b4b4"/><rect x="893" y="124" width="2" height="1" fill="#b4b4b4"/><rect x="903" y="124" width="2" height="1" fill="#b4b4b4"/><rect x="913" y="124" width="2" height="1" fill="#b4b4b4"/><rect x="923" y="124" width="2" height="1" fill="#b4b4b4"/><rect x="935" y="125" width="4" height="1" fill="#b0b0b0"/><rect x="34" y="187" width="1" height="1" fill="#b4b4b4"/><rect x="43" y="187" width="2" height="1" fill="#b4b4b4"/><rect x="53" y="187" width="2" height="1" fill="#b4b4b4"/><rect x="63" y="187" width="2" height="1" fill="#b4b4b4"/><rect x="73" y="187" width="2" height="1" fill="#b4b4b4"/><rect x="83" y="187" width="2" height="1" fill="#b4b4b4"/><rect x="93" y="187" width="2" height="1" fill="#b4b4b4"/><rect x="103" y="187" width="2" height="1" fill="#b4b4b4"/><rect x="113" y="187" width="2" height="1" fill="#b4b4b4"/><rect x="123" y="187" width="2" height="1" fill="#b4b4b4"/><rect x="133" y="187" width="2" height="1" fill="#b4b4b4"/><rect x="143" y="187" width="2" height="1" fill="#b4b4b4"/><rect x="153" y="187" width="2" height="1" fill="#b4b4b4"/><rect x="163" y="187" width="2" height="1" fill="#b4b4b4"/><rect x="173" y="187" width="2" height="1" fill="#b4b4b4"/><rect x="183" y="187" width="2" height="1" fill="#b4b4b4"/><rect x="193" y="187" width="2" height="1" fill="#b4b4b4"/><rect x="203" y="187" width="2" height="1" fill="#b4b4b4"/><rect x="213" y="187" width="2" height="1" fill="#b4b4b4"/><rect x="223" y="187" width="2" height="1" fill="#b4b4b4"/><rect x="233" y="187" width="2" height="1" fill="#b4b4b4"/><rect x="243" y="187" width="2" height="1" fill="#b4b4b4"/><rect x="253" y="187" width="2" height="1" fill="#b4b4b4"/><rect x="263" y="187" width="2" height="1" fill="#b4b4b4"/><rect x="273" y="187" width="2" height="1" fill="#b4b4b4"/><rect x="283" y="187" width="2" height="1" fill="#b4b4b4"/><rect x="293" y="187" width="2" height="1" fill="#b4b4b4"/><rect x="303" y="187" width="2" height="1" fill="#b4b4b4"/><rect x="313" y="187" width="2" height="1" fill="#b4b4b4"/><rect x="323" y="187" width="2" height="1" fill="#b4b4b4"/><rect x="333" y="187" width="2" height="1" fill="#b4b4b4"/><rect x="343" y="187" width="2" height="1" fill="#b4b4b4"/><rect x="353" y="187" width="2" height="1" fill="#b4b4b4"/><rect x="363" y="187" width="2" height="1" fill="#b4b4b4"/><rect x="373" y="187" width="2" height="1" fill="#b4b4b4"/><rect x="383" y="187" width="2" height="1" fill="#b4b4b4"/><rect x="393" y="187" width="2" height="1" fill="#b4b4b4"/><rect x="403" y="187" width="2" height="1" fill="#b4b4b4"/><rect x="413" y="187" width="2" height="1" fill="#b4b4b4"/><rect x="423" y="187" width="2" height="1" fill="#b4b4b4"/><rect x="433" y="187" width="2" height="1" fill="#b4b4b4"/><rect x="443" y="187" width="2" height="1" fill="#b4b4b4"/><rect x="453" y="187" width="2" height="1" fill="#b4b4b4"/><rect x="463" y="187" width="2" height="1" fill="#b4b4b4"/><rect x="473" y="187" width="2" height="1" fill="#b4b4b4"/><rect x="483" y="187" width="2" height="1" fill="#b4b4b4"/><rect x="493" y="187" width="2" height="1" fill="#b4b4b4"/><rect x="503" y="187" width="2" height="1" fill="#b4b4b4"/><rect x="513" y="187" width="2" height="1" fill="#b4b4b4"/><rect x="523" y="187" width="2" height="1" fill="#b4b4b4"/><rect x="533" y="187" width="2" height="1" fill="#b4b4b4"/><rect x="543" y="187" width="2" height="1" fill="#b4b4b4"/><rect x="553" y="187" width="2" height="1" fill="#b4b4b4"/><rect x="563" y="187" width="2" height="1" fill="#b4b4b4"/><rect x="573" y="187" width="2" height="1" fill="#b4b4b4"/><rect x="583" y="187" width="2" height="1" fill="#b4b4b4"/><rect x="593" y="187" width="2" height="1" fill="#b4b4b4"/><rect x="603" y="187" width="2" height="1" fill="#b4b4b4"/><rect x="613" y="187" width="2" height="1" fill="#b4b4b4"/><rect x="623" y="187" width="2" height="1" fill="#b4b4b4"/><rect x="633" y="187" width="2" height="1" fill="#b4b4b4"/><rect x="643" y="187" width="2" height="1" fill="#b4b4b4"/><rect x="653" y="187" width="2" height="1" fill="#b4b4b4"/><rect x="663" y="187" width="2" height="1" fill="#b4b4b4"/><rect x="673" y="187" width="2" height="1" fill="#b4b4b4"/><rect x="683" y="187" width="2" height="1" fill="#b4b4b4"/><rect x="693" y="187" width="2" height="1" fill="#b4b4b4"/><rect x="703" y="187" width="2" height="1" fill="#b4b4b4"/><rect x="713" y="187" width="2" height="1" fill="#b4b4b4"/><rect x="723" y="187" width="2" height="1" fill="#b4b4b4"/><rect x="733" y="187" width="2" height="1" fill="#b4b4b4"/><rect x="743" y="187" width="2" height="1" fill="#b4b4b4"/><rect x="753" y="187" width="2" height="1" fill="#b4b4b4"/><rect x="763" y="187" width="2" height="1" fill="#b4b4b4"/><rect x="773" y="187" width="2" height="1" fill="#b4b4b4"/><rect x="783" y="187" width="2" height="1" fill="#b4b4b4"/><rect x="793" y="187" width="2" height="1" fill="#b4b4b4"/><rect x="803" y="187" width="2" height="1" fill="#b4b4b4"/><rect x="813" y="187" width="2" height="1" fill="#b4b4b4"/><rect x="823" y="187" width="2" height="1" fill="#b4b4b4"/><rect x="833" y="187" width="2" height="1" fill="#b4b4b4"/><rect x="843" y="187" width="2" height="1" fill="#b4b4b4"/><rect x="853" y="187" width="2" height="1" fill="#b4b4b4"/><rect x="863" y="187" width="2" height="1" fill="#b4b4b4"/><rect x="873" y="187" width="2" height="1" fill="#b4b4b4"/><rect x="883" y="187" width="2" height="1" fill="#b4b4b4"/><rect x="893" y="187" width="2" height="1" fill="#b4b4b4"/><rect x="903" y="187" width="2" height="1" fill="#b4b4b4"/><rect x="913" y="187" width="2" height="1" fill="#b4b4b4"/><rect x="923" y="187" width="2" height="1" fill="#b4b4b4"/><rect x="935" y="188" width="4" height="1" fill="#b0b0b0"/><rect x="34" y="251" width="1" height="1" fill="#b4b4b4"/><rect x="43" y="251" width="2" height="1" fill="#b4b4b4"/><rect x="53" y="251" width="2" height="1" fill="#b4b4b4"/><rect x="63" y="251" width="2" height="1" fill="#b4b4b4"/><rect x="73" y="251" width="2" height="1" fill="#b4b4b4"/><rect x="83" y="251" width="2" height="1" fill="#b4b4b4"/><rect x="93" y="251" width="2" height="1" fill="#b4b4b4"/><rect x="103" y="251" width="2" height="1" fill="#b4b4b4"/><rect x="113" y="251" width="2" height="1" fill="#b4b4b4"/><rect x="123" y="251" width="2" height="1" fill="#b4b4b4"/><rect x="133" y="251" width="2" height="1" fill="#b4b4b4"/><rect x="143" y="251" width="2" height="1" fill="#b4b4b4"/><rect x="153" y="251" width="2" height="1" fill="#b4b4b4"/><rect x="163" y="251" width="2" height="1" fill="#b4b4b4"/><rect x="173" y="251" width="2" height="1" fill="#b4b4b4"/><rect x="183" y="251" width="2" height="1" fill="#b4b4b4"/><rect x="193" y="251" width="2" height="1" fill="#b4b4b4"/><rect x="203" y="251" width="2" height="1" fill="#b4b4b4"/><rect x="213" y="251" width="2" height="1" fill="#b4b4b4"/><rect x="223" y="251" width="2" height="1" fill="#b4b4b4"/><rect x="233" y="251" width="2" height="1" fill="#b4b4b4"/><rect x="243" y="251" width="2" height="1" fill="#b4b4b4"/><rect x="253" y="251" width="2" height="1" fill="#b4b4b4"/><rect x="263" y="251" width="2" height="1" fill="#b4b4b4"/><rect x="273" y="251" width="2" height="1" fill="#b4b4b4"/><rect x="283" y="251" width="2" height="1" fill="#b4b4b4"/><rect x="293" y="251" width="2" height="1" fill="#b4b4b4"/><rect x="303" y="251" width="2" height="1" fill="#b4b4b4"/><rect x="313" y="251" width="2" height="1" fill="#b4b4b4"/><rect x="323" y="251" width="2" height="1" fill="#b4b4b4"/><rect x="333" y="251" width="2" height="1" fill="#b4b4b4"/><rect x="343" y="251" width="2" height="1" fill="#b4b4b4"/><rect x="353" y="251" width="2" height="1" fill="#b4b4b4"/><rect x="363" y="251" width="2" height="1" fill="#b4b4b4"/><rect x="373" y="251" width="2" height="1" fill="#b4b4b4"/><rect x="383" y="251" width="2" height="1" fill="#b4b4b4"/><rect x="393" y="251" width="2" height="1" fill="#b4b4b4"/><rect x="403" y="251" width="2" height="1" fill="#b4b4b4"/><rect x="413" y="251" width="2" height="1" fill="#b4b4b4"/><rect x="423" y="251" width="2" height="1" fill="#b4b4b4"/><rect x="433" y="251" width="2" height="1" fill="#b4b4b4"/><rect x="443" y="251" width="2" height="1" fill="#b4b4b4"/><rect x="453" y="251" width="2" height="1" fill="#b4b4b4"/><rect x="463" y="251" width="2" height="1" fill="#b4b4b4"/><rect x="473" y="251" width="2" height="1" fill="#b4b4b4"/><rect x="483" y="251" width="2" height="1" fill="#b4b4b4"/><rect x="493" y="251" width="2" height="1" fill="#b4b4b4"/><rect x="503" y="251" width="2" height="1" fill="#b4b4b4"/><rect x="513" y="251" width="2" height="1" fill="#b4b4b4"/><rect x="523" y="251" width="2" height="1" fill="#b4b4b4"/><rect x="533" y="251" width="2" height="1" fill="#b4b4b4"/><rect x="543" y="251" width="2" height="1" fill="#b4b4b4"/><rect x="553" y="251" width="2" height="1" fill="#b4b4b4"/><rect x="563" y="251" width="2" height="1" fill="#b4b4b4"/><rect x="573" y="251" width="2" height="1" fill="#b4b4b4"/><rect x="583" y="251" width="2" height="1" fill="#b4b4b4"/><rect x="593" y="251" width="2" height="1" fill="#b4b4b4"/><rect x="603" y="251" width="2" height="1" fill="#b4b4b4"/><rect x="613" y="251" width="2" height="1" fill="#b4b4b4"/><rect x="623" y="251" width="2" height="1" fill="#b4b4b4"/><rect x="633" y="251" width="2" height="1" fill="#b4b4b4"/><rect x="643" y="251" width="2" height="1" fill="#b4b4b4"/><rect x="653" y="251" width="2" height="1" fill="#b4b4b4"/><rect x="663" y="251" width="2" height="1" fill="#b4b4b4"/><rect x="673" y="251" width="2" height="1" fill="#b4b4b4"/><rect x="683" y="251" width="2" height="1" fill="#b4b4b4"/><rect x="693" y="251" width="2" height="1" fill="#b4b4b4"/><rect x="703" y="251" width="2" height="1" fill="#b4b4b4"/><rect x="713" y="251" width="2" height="1" fill="#b4b4b4"/><rect x="723" y="251" width="2" height="1" fill="#b4b4b4"/><rect x="733" y="251" width="2" height="1" fill="#b4b4b4"/><rect x="743" y="251" width="2" height="1" fill="#b4b4b4"/><rect x="753" y="251" width="2" height="1" fill="#b4b4b4"/><rect x="763" y="251" width="2" height="1" fill="#b4b4b4"/><rect x="773" y="251" width="2" height="1" fill="#b4b4b4"/><rect x="783" y="251" width="2" height="1" fill="#b4b4b4"/><rect x="793" y="251" width="2" height="1" fill="#b4b4b4"/><rect x="803" y="251" width="2" height="1" fill="#b4b4b4"/><rect x="813" y="251" width="2" height="1" fill="#b4b4b4"/><rect x="823" y="251" width="2" height="1" fill="#b4b4b4"/><rect x="833" y="251" width="2" height="1" fill="#b4b4b4"/><rect x="843" y="251" width="2" height="1" fill="#b4b4b4"/><rect x="853" y="251" width="2" height="1" fill="#b4b4b4"/><rect x="863" y="251" width="2" height="1" fill="#b4b4b4"/><rect x="873" y="251" width="2" height="1" fill="#b4b4b4"/><rect x="883" y="251" width="2" height="1" fill="#b4b4b4"/><rect x="893" y="251" width="2" height="1" fill="#b4b4b4"/><rect x="903" y="251" width="2" height="1" fill="#b4b4b4"/><rect x="913" y="251" width="2" height="1" fill="#b4b4b4"/><rect x="923" y="251" width="2" height="1" fill="#b4b4b4"/><rect x="935" y="252" width="4" height="1" fill="#b0b0b0"/><rect x="34" y="314" width="1" height="1" fill="#b4b4b4"/><rect x="43" y="314" width="2" height="1" fill="#b4b4b4"/><rect x="53" y="314" width="2" height="1" fill="#b4b4b4"/><rect x="63" y="314" width="2" height="1" fill="#b4b4b4"/><rect x="73" y="314" width="2" height="1" fill="#b4b4b4"/><rect x="83" y="314" width="2" height="1" fill="#b4b4b4"/><rect x="93" y="314" width="2" height="1" fill="#b4b4b4"/><rect x="103" y="314" width="2" height="1" fill="#b4b4b4"/><rect x="113" y="314" width="2" height="1" fill="#b4b4b4"/><rect x="123" y="314" width="2" height="1" fill="#b4b4b4"/><rect x="133" y="314" width="2" height="1" fill="#b4b4b4"/><rect x="143" y="314" width="2" height="1" fill="#b4b4b4"/><rect x="153" y="314" width="2" height="1" fill="#b4b4b4"/><rect x="163" y="314" width="2" height="1" fill="#b4b4b4"/><rect x="173" y="314" width="2" height="1" fill="#b4b4b4"/><rect x="183" y="314" width="2" height="1" fill="#b4b4b4"/><rect x="193" y="314" width="2" height="1" fill="#b4b4b4"/><rect x="203" y="314" width="2" height="1" fill="#b4b4b4"/><rect x="213" y="314" width="2" height="1" fill="#b4b4b4"/><rect x="223" y="314" width="2" height="1" fill="#b4b4b4"/><rect x="233" y="314" width="2" height="1" fill="#b4b4b4"/><rect x="243" y="314" width="2" height="1" fill="#b4b4b4"/><rect x="253" y="314" width="2" height="1" fill="#b4b4b4"/><rect x="263" y="314" width="2" height="1" fill="#b4b4b4"/><rect x="273" y="314" width="2" height="1" fill="#b4b4b4"/><rect x="283" y="314" width="2" height="1" fill="#b4b4b4"/><rect x="293" y="314" width="2" height="1" fill="#b4b4b4"/><rect x="303" y="314" width="2" height="1" fill="#b4b4b4"/><rect x="313" y="314" width="2" height="1" fill="#b4b4b4"/><rect x="323" y="314" width="2" height="1" fill="#b4b4b4"/><rect x="333" y="314" width="2" height="1" fill="#b4b4b4"/><rect x="343" y="314" width="2" height="1" fill="#b4b4b4"/><rect x="353" y="314" width="2" height="1" fill="#b4b4b4"/><rect x="363" y="314" width="2" height="1" fill="#b4b4b4"/><rect x="373" y="314" width="2" height="1" fill="#b4b4b4"/><rect x="383" y="314" width="2" height="1" fill="#b4b4b4"/><rect x="393" y="314" width="2" height="1" fill="#b4b4b4"/><rect x="403" y="314" width="2" height="1" fill="#b4b4b4"/><rect x="413" y="314" width="2" height="1" fill="#b4b4b4"/><rect x="423" y="314" width="2" height="1" fill="#b4b4b4"/><rect x="433" y="314" width="2" height="1" fill="#b4b4b4"/><rect x="443" y="314" width="2" height="1" fill="#b4b4b4"/><rect x="453" y="314" width="2" height="1" fill="#b4b4b4"/><rect x="463" y="314" width="2" height="1" fill="#b4b4b4"/><rect x="473" y="314" width="2" height="1" fill="#b4b4b4"/><rect x="483" y="314" width="2" height="1" fill="#b4b4b4"/><rect x="493" y="314" width="2" height="1" fill="#b4b4b4"/><rect x="503" y="314" width="2" height="1" fill="#b4b4b4"/><rect x="513" y="314" width="2" height="1" fill="#b4b4b4"/><rect x="523" y="314" width="2" height="1" fill="#b4b4b4"/><rect x="533" y="314" width="2" height="1" fill="#b4b4b4"/><rect x="543" y="314" width="2" height="1" fill="#b4b4b4"/><rect x="553" y="314" width="2" height="1" fill="#b4b4b4"/><rect x="563" y="314" width="2" height="1" fill="#b4b4b4"/><rect x="573" y="314" width="2" height="1" fill="#b4b4b4"/><rect x="583" y="314" width="2" height="1" fill="#b4b4b4"/><rect x="593" y="314" width="2" height="1" fill="#b4b4b4"/><rect x="603" y="314" width="2" height="1" fill="#b4b4b4"/><rect x="613" y="314" width="2" height="1" fill="#b4b4b4"/><rect x="623" y="314" width="2" height="1" fill="#b4b4b4"/><rect x="633" y="314" width="2" height="1" fill="#b4b4b4"/><rect x="643" y="314" width="2" height="1" fill="#b4b4b4"/><rect x="653" y="314" width="2" height="1" fill="#b4b4b4"/><rect x="663" y="314" width="2" height="1" fill="#b4b4b4"/><rect x="673" y="314" width="2" height="1" fill="#b4b4b4"/><rect x="683" y="314" width="2" height="1" fill="#b4b4b4"/><rect x="693" y="314" width="2" height="1" fill="#b4b4b4"/><rect x="703" y="314" width="2" height="1" fill="#b4b4b4"/><rect x="713" y="314" width="2" height="1" fill="#b4b4b4"/><rect x="723" y="314" width="2" height="1" fill="#b4b4b4"/><rect x="733" y="314" width="2" height="1" fill="#b4b4b4"/><rect x="743" y="314" width="2" height="1" fill="#b4b4b4"/><rect x="753" y="314" width="2" height="1" fill="#b4b4b4"/><rect x="763" y="314" width="2" height="1" fill="#b4b4b4"/><rect x="773" y="314" width="2" height="1" fill="#b4b4b4"/><rect x="783" y="314" width="2" height="1" fill="#b4b4b4"/><rect x="793" y="314" width="2" height="1" fill="#b4b4b4"/><rect x="803" y="314" width="2" height="1" fill="#b4b4b4"/><rect x="813" y="314" width="2" height="1" fill="#b4b4b4"/><rect x="823" y="314" width="2" height="1" fill="#b4b4b4"/><rect x="833" y="314" width="2" height="1" fill="#b4b4b4"/><rect x="843" y="314" width="2" height="1" fill="#b4b4b4"/><rect x="853" y="314" width="2" height="1" fill="#b4b4b4"/><rect x="863" y="314" width="2" height="1" fill="#b4b4b4"/><rect x="873" y="314" width="2" height="1" fill="#b4b4b4"/><rect x="883" y="314" width="2" height="1" fill="#b4b4b4"/><rect x="893" y="314" width="2" height="1" fill="#b4b4b4"/><rect x="903" y="314" width="2" height="1" fill="#b4b4b4"/><rect x="913" y="314" width="2" height="1" fill="#b4b4b4"/><rect x="923" y="314" width="2" height="1" fill="#b4b4b4"/><rect x="935" y="315" width="4" height="1" fill="#b0b0b0"/><rect x="34" y="378" width="1" height="1" fill="#b4b4b4"/><rect x="43" y="378" width="2" height="1" fill="#b4b4b4"/><rect x="53" y="378" width="2" height="1" fill="#b4b4b4"/><rect x="63" y="378" width="2" height="1" fill="#b4b4b4"/><rect x="73" y="378" width="2" height="1" fill="#b4b4b4"/><rect x="83" y="378" width="2" height="1" fill="#b4b4b4"/><rect x="93" y="378" width="2" height="1" fill="#b4b4b4"/><rect x="103" y="378" width="2" height="1" fill="#b4b4b4"/><rect x="113" y="378" width="2" height="1" fill="#b4b4b4"/><rect x="123" y="378" width="2" height="1" fill="#b4b4b4"/><rect x="133" y="378" width="2" height="1" fill="#b4b4b4"/><rect x="143" y="378" width="2" height="1" fill="#b4b4b4"/><rect x="153" y="378" width="2" height="1" fill="#b4b4b4"/><rect x="163" y="378" width="2" height="1" fill="#b4b4b4"/><rect x="173" y="378" width="2" height="1" fill="#b4b4b4"/><rect x="183" y="378" width="2" height="1" fill="#b4b4b4"/><rect x="193" y="378" width="2" height="1" fill="#b4b4b4"/><rect x="203" y="378" width="2" height="1" fill="#b4b4b4"/><rect x="213" y="378" width="2" height="1" fill="#b4b4b4"/><rect x="223" y="378" width="2" height="1" fill="#b4b4b4"/><rect x="233" y="378" width="2" height="1" fill="#b4b4b4"/><rect x="243" y="378" width="2" height="1" fill="#b4b4b4"/><rect x="253" y="378" width="2" height="1" fill="#b4b4b4"/><rect x="263" y="378" width="2" height="1" fill="#b4b4b4"/><rect x="273" y="378" width="2" height="1" fill="#b4b4b4"/><rect x="283" y="378" width="2" height="1" fill="#b4b4b4"/><rect x="293" y="378" width="2" height="1" fill="#b4b4b4"/><rect x="303" y="378" width="2" height="1" fill="#b4b4b4"/><rect x="313" y="378" width="2" height="1" fill="#b4b4b4"/><rect x="323" y="378" width="2" height="1" fill="#b4b4b4"/><rect x="333" y="378" width="2" height="1" fill="#b4b4b4"/><rect x="343" y="378" width="2" height="1" fill="#b4b4b4"/><rect x="353" y="378" width="2" height="1" fill="#b4b4b4"/><rect x="363" y="378" width="2" height="1" fill="#b4b4b4"/><rect x="373" y="378" width="2" height="1" fill="#b4b4b4"/><rect x="383" y="378" width="2" height="1" fill="#b4b4b4"/><rect x="393" y="378" width="2" height="1" fill="#b4b4b4"/><rect x="403" y="378" width="2" height="1" fill="#b4b4b4"/><rect x="413" y="378" width="2" height="1" fill="#b4b4b4"/><rect x="423" y="378" width="2" height="1" fill="#b4b4b4"/><rect x="433" y="378" width="2" height="1" fill="#b4b4b4"/><rect x="443" y="378" width="2" height="1" fill="#b4b4b4"/><rect x="453" y="378" width="2" height="1" fill="#b4b4b4"/><rect x="463" y="378" width="2" height="1" fill="#b4b4b4"/><rect x="473" y="378" width="2" height="1" fill="#b4b4b4"/><rect x="483" y="378" width="2" height="1" fill="#b4b4b4"/><rect x="493" y="378" width="2" height="1" fill="#b4b4b4"/><rect x="503" y="378" width="2" height="1" fill="#b4b4b4"/><rect x="513" y="378" width="2" height="1" fill="#b4b4b4"/><rect x="523" y="378" width="2" height="1" fill="#b4b4b4"/><rect x="533" y="378" width="2" height="1" fill="#b4b4b4"/><rect x="543" y="378" width="2" height="1" fill="#b4b4b4"/><rect x="553" y="378" width="2" height="1" fill="#b4b4b4"/><rect x="563" y="378" width="2" height="1" fill="#b4b4b4"/><rect x="573" y="378" width="2" height="1" fill="#b4b4b4"/><rect x="583" y="378" width="2" height="1" fill="#b4b4b4"/><rect x="593" y="378" width="2" height="1" fill="#b4b4b4"/><rect x="603" y="378" width="2" height="1" fill="#b4b4b4"/><rect x="613" y="378" width="2" height="1" fill="#b4b4b4"/><rect x="623" y="378" width="2" height="1" fill="#b4b4b4"/><rect x="633" y="378" width="2" height="1" fill="#b4b4b4"/><rect x="643" y="378" width="2" height="1" fill="#b4b4b4"/><rect x="653" y="378" width="2" height="1" fill="#b4b4b4"/><rect x="663" y="378" width="2" height="1" fill="#b4b4b4"/><rect x="673" y="378" width="2" height="1" fill="#b4b4b4"/><rect x="683" y="378" width="2" height="1" fill="#b4b4b4"/><rect x="693" y="378" width="2" height="1" fill="#b4b4b4"/><rect x="703" y="378" width="2" height="1" fill="#b4b4b4"/><rect x="713" y="378" width="2" height="1" fill="#b4b4b4"/><rect x="723" y="378" width="2" height="1" fill="#b4b4b4"/><rect x="733" y="378" width="2" height="1" fill="#b4b4b4"/><rect x="743" y="378" width="2" height="1" fill="#b4b4b4"/><rect x="753" y="378" width="2" height="1" fill="#b4b4b4"/><rect x="763" y="378" width="2" height="1" fill="#b4b4b4"/><rect x="773" y="378" width="2" height="1" fill="#b4b4b4"/><rect x="783" y="378" width="2" height="1" fill="#b4b4b4"/><rect x="793" y="378" width="2" height="1" fill="#b4b4b4"/><rect x="803" y="378" width="2" height="1" fill="#b4b4b4"/><rect x="813" y="378" width="2" height="1" fill="#b4b4b4"/><rect x="823" y="378" width="2" height="1" fill="#b4b4b4"/><rect x="833" y="378" width="2" height="1" fill="#b4b4b4"/><rect x="843" y="378" width="2" height="1" fill="#b4b4b4"/><rect x="853" y="378" width="2" height="1" fill="#b4b4b4"/><rect x="863" y="378" width="2" height="1" fill="#b4b4b4"/><rect x="873" y="378" width="2" height="1" fill="#b4b4b4"/><rect x="883" y="378" width="2" height="1" fill="#b4b4b4"/><rect x="893" y="378" width="2" height="1" fill="#b4b4b4"/><rect x="903" y="378" width="2" height="1" fill="#b4b4b4"/><rect x="913" y="378" width="2" height="1" fill="#b4b4b4"/><rect x="923" y="378" width="2" height="1" fill="#b4b4b4"/><rect x="935" y="379" width="4" height="1" fill="#b0b0b0"/><rect x="34" y="442" width="1" height="1" fill="#b4b4b4"/><rect x="43" y="442" width="2" height="1" fill="#b4b4b4"/><rect x="53" y="442" width="2" height="1" fill="#b4b4b4"/><rect x="63" y="442" width="2" height="1" fill="#b4b4b4"/><rect x="73" y="442" width="2" height="1" fill="#b4b4b4"/><rect x="83" y="442" width="2" height="1" fill="#b4b4b4"/><rect x="93" y="442" width="2" height="1" fill="#b4b4b4"/><rect x="103" y="442" width="2" height="1" fill="#b4b4b4"/><rect x="113" y="442" width="2" height="1" fill="#b4b4b4"/><rect x="123" y="442" width="2" height="1" fill="#b4b4b4"/><rect x="133" y="442" width="2" height="1" fill="#b4b4b4"/><rect x="143" y="442" width="2" height="1" fill="#b4b4b4"/><rect x="153" y="442" width="2" height="1" fill="#b4b4b4"/><rect x="163" y="442" width="2" height="1" fill="#b4b4b4"/><rect x="173" y="442" width="2" height="1" fill="#b4b4b4"/><rect x="183" y="442" width="2" height="1" fill="#b4b4b4"/><rect x="193" y="442" width="2" height="1" fill="#b4b4b4"/><rect x="203" y="442" width="2" height="1" fill="#b4b4b4"/><rect x="213" y="442" width="2" height="1" fill="#b4b4b4"/><rect x="223" y="442" width="2" height="1" fill="#b4b4b4"/><rect x="233" y="442" width="2" height="1" fill="#b4b4b4"/><rect x="243" y="442" width="2" height="1" fill="#b4b4b4"/><rect x="253" y="442" width="2" height="1" fill="#b4b4b4"/><rect x="263" y="442" width="2" height="1" fill="#b4b4b4"/><rect x="273" y="442" width="2" height="1" fill="#b4b4b4"/><rect x="283" y="442" width="2" height="1" fill="#b4b4b4"/><rect x="293" y="442" width="2" height="1" fill="#b4b4b4"/><rect x="303" y="442" width="2" height="1" fill="#b4b4b4"/><rect x="313" y="442" width="2" height="1" fill="#b4b4b4"/><rect x="323" y="442" width="2" height="1" fill="#b4b4b4"/><rect x="333" y="442" width="2" height="1" fill="#b4b4b4"/><rect x="343" y="442" width="2" height="1" fill="#b4b4b4"/><rect x="353" y="442" width="2" height="1" fill="#b4b4b4"/><rect x="363" y="442" width="2" height="1" fill="#b4b4b4"/><rect x="373" y="442" width="2" height="1" fill="#b4b4b4"/><rect x="383" y="442" width="2" height="1" fill="#b4b4b4"/><rect x="393" y="442" width="2" height="1" fill="#b4b4b4"/><rect x="403" y="442" width="2" height="1" fill="#b4b4b4"/><rect x="413" y="442" width="2" height="1" fill="#b4b4b4"/><rect x="423" y="442" width="2" height="1" fill="#b4b4b4"/><rect x="433" y="442" width="2" height="1" fill="#b4b4b4"/><rect x="443" y="442" width="2" height="1" fill="#b4b4b4"/><rect x="453" y="442" width="2" height="1" fill="#b4b4b4"/><rect x="463" y="442" width="2" height="1" fill="#b4b4b4"/><rect x="473" y="442" width="2" height="1" fill="#b4b4b4"/><rect x="483" y="442" width="2" height="1" fill="#b4b4b4"/><rect x="493" y="442" width="2" height="1" fill="#b4b4b4"/><rect x="503" y="442" width="2" height="1" fill="#b4b4b4"/><rect x="513" y="442" width="2" height="1" fill="#b4b4b4"/><rect x="523" y="442" width="2" height="1" fill="#b4b4b4"/><rect x="533" y="442" width="2" height="1" fill="#b4b4b4"/><rect x="543" y="442" width="2" height="1" fill="#b4b4b4"/><rect x="553" y="442" width="2" height="1" fill="#b4b4b4"/><rect x="563" y="442" width="2" height="1" fill="#b4b4b4"/><rect x="573" y="442" width="2" height="1" fill="#b4b4b4"/><rect x="583" y="442" width="2" height="1" fill="#b4b4b4"/><rect x="593" y="442" width="2" height="1" fill="#b4b4b4"/><rect x="603" y="442" width="2" height="1" fill="#b4b4b4"/><rect x="613" y="442" width="2" height="1" fill="#b4b4b4"/><rect x="623" y="442" width="2" height="1" fill="#b4b4b4"/><rect x="633" y="442" width="2" height="1" fill="#b4b4b4"/><rect x="643" y="442" width="2" height="1" fill="#b4b4b4"/><rect x="653" y="442" width="2" height="1" fill="#b4b4b4"/><rect x="663" y="442" width="2" height="1" fill="#b4b4b4"/><rect x="673" y="442" width="2" height="1" fill="#b4b4b4"/><rect x="683" y="442" width="2" height="1" fill="#b4b4b4"/><rect x="693" y="442" width="2" height="1" fill="#b4b4b4"/><rect x="703" y="442" width="2" height="1" fill="#b4b4b4"/><rect x="713" y="442" width="2" height="1" fill="#b4b4b4"/><rect x="723" y="442" width="2" height="1" fill="#b4b4b4"/><rect x="733" y="442" width="2" height="1" fill="#b4b4b4"/><rect x="743" y="442" width="2" height="1" fill="#b4b4b4"/><rect x="753" y="442" width="2" height="1" fill="#b4b4b4"/><rect x="763" y="442" width="2" height="1" fill="#b4b4b4"/><rect x="773" y="442" width="2" height="1" fill="#b4b4b4"/><rect x="783" y="442" width="2" height="1" fill="#b4b4b4"/><rect x="793" y="442" width="2" height="1" fill="#b4b4b4"/><rect x="803" y="442" width="2" height="1" fill="#b4b4b4"/><rect x="813" y="442" width="2" height="1" fill="#b4b4b4"/><rect x="823" y="442" width="2" height="1" fill="#b4b4b4"/><rect x="833" y="442" width="2" height="1" fill="#b4b4b4"/><rect x="843" y="442" width="2" height="1" fill="#b4b4b4"/><rect x="853" y="442" width="2" height="1" fill="#b4b4b4"/><rect x="863" y="442" width="2" height="1" fill="#b4b4b4"/><rect x="873" y="442" width="2" height="1" fill="#b4b4b4"/><rect x="883" y="442" width="2" height="1" fill="#b4b4b4"/><rect x="893" y="442" width="2" height="1" fill="#b4b4b4"/><rect x="903" y="442" width="2" height="1" fill="#b4b4b4"/><rect x="913" y="442" width="2" height="1" fill="#b4b4b4"/><rect x="923" y="442" width="2" height="1" fill="#b4b4b4"/><rect x="935" y="443" width="4" height="1" fill="#b0b0b0"/><rect x="34" y="505" width="1" height="1" fill="#b4b4b4"/><rect x="43" y="505" width="2" height="1" fill="#b4b4b4"/><rect x="53" y="505" width="2" height="1" fill="#b4b4b4"/><rect x="63" y="505" width="2" height="1" fill="#b4b4b4"/><rect x="73" y="505" width="2" height="1" fill="#b4b4b4"/><rect x="83" y="505" width="2" height="1" fill="#b4b4b4"/><rect x="93" y="505" width="2" height="1" fill="#b4b4b4"/><rect x="103" y="505" width="2" height="1" fill="#b4b4b4"/><rect x="113" y="505" width="2" height="1" fill="#b4b4b4"/><rect x="123" y="505" width="2" height="1" fill="#b4b4b4"/><rect x="133" y="505" width="2" height="1" fill="#b4b4b4"/><rect x="143" y="505" width="2" height="1" fill="#b4b4b4"/><rect x="153" y="505" width="2" height="1" fill="#b4b4b4"/><rect x="163" y="505" width="2" height="1" fill="#b4b4b4"/><rect x="173" y="505" width="2" height="1" fill="#b4b4b4"/><rect x="183" y="505" width="2" height="1" fill="#b4b4b4"/><rect x="193" y="505" width="2" height="1" fill="#b4b4b4"/><rect x="203" y="505" width="2" height="1" fill="#b4b4b4"/><rect x="213" y="505" width="2" height="1" fill="#b4b4b4"/><rect x="223" y="505" width="2" height="1" fill="#b4b4b4"/><rect x="233" y="505" width="2" height="1" fill="#b4b4b4"/><rect x="243" y="505" width="2" height="1" fill="#b4b4b4"/><rect x="253" y="505" width="2" height="1" fill="#b4b4b4"/><rect x="263" y="505" width="2" height="1" fill="#b4b4b4"/><rect x="273" y="505" width="2" height="1" fill="#b4b4b4"/><rect x="283" y="505" width="2" height="1" fill="#b4b4b4"/><rect x="293" y="505" width="2" height="1" fill="#b4b4b4"/><rect x="303" y="505" width="2" height="1" fill="#b4b4b4"/><rect x="313" y="505" width="2" height="1" fill="#b4b4b4"/><rect x="323" y="505" width="2" height="1" fill="#b4b4b4"/><rect x="333" y="505" width="2" height="1" fill="#b4b4b4"/><rect x="343" y="505" width="2" height="1" fill="#b4b4b4"/><rect x="353" y="505" width="2" height="1" fill="#b4b4b4"/><rect x="363" y="505" width="2" height="1" fill="#b4b4b4"/><rect x="373" y="505" width="2" height="1" fill="#b4b4b4"/><rect x="383" y="505" width="2" height="1" fill="#b4b4b4"/><rect x="393" y="505" width="2" height="1" fill="#b4b4b4"/><rect x="403" y="505" width="2" height="1" fill="#b4b4b4"/><rect x="413" y="505" width="2" height="1" fill="#b4b4b4"/><rect x="423" y="505" width="2" height="1" fill="#b4b4b4"/><rect x="433" y="505" width="2" height="1" fill="#b4b4b4"/><rect x="443" y="505" width="2" height="1" fill="#b4b4b4"/><rect x="453" y="505" width="2" height="1" fill="#b4b4b4"/><rect x="463" y="505" width="2" height="1" fill="#b4b4b4"/><rect x="473" y="505" width="2" height="1" fill="#b4b4b4"/><rect x="483" y="505" width="2" height="1" fill="#b4b4b4"/><rect x="493" y="505" width="2" height="1" fill="#b4b4b4"/><rect x="503" y="505" width="2" height="1" fill="#b4b4b4"/><rect x="513" y="505" width="2" height="1" fill="#b4b4b4"/><rect x="523" y="505" width="2" height="1" fill="#b4b4b4"/><rect x="533" y="505" width="2" height="1" fill="#b4b4b4"/><rect x="543" y="505" width="2" height="1" fill="#b4b4b4"/><rect x="553" y="505" width="2" height="1" fill="#b4b4b4"/><rect x="563" y="505" width="2" height="1" fill="#b4b4b4"/><rect x="573" y="505" width="2" height="1" fill="#b4b4b4"/><rect x="583" y="505" width="2" height="1" fill="#b4b4b4"/><rect x="593" y="505" width="2" height="1" fill="#b4b4b4"/><rect x="603" y="505" width="2" height="1" fill="#b4b4b4"/><rect x="613" y="505" width="2" height="1" fill="#b4b4b4"/><rect x="623" y="505" width="2" height="1" fill="#b4b4b4"/><rect x="633" y="505" width="2" height="1" fill="#b4b4b4"/><rect x="643" y="505" width="2" height="1" fill="#b4b4b4"/><rect x="653" y="505" width="2" height="1" fill="#b4b4b4"/><rect x="663" y="505" width="2" height="1" fill="#b4b4b4"/><rect x="673" y="505" width="2" height="1" fill="#b4b4b4"/><rect x="683" y="505" width="2" height="1" fill="#b4b4b4"/><rect x="693" y="505" width="2" height="1" fill="#b4b4b4"/><rect x="703" y="505" width="2" height="1" fill="#b4b4b4"/><rect x="713" y="505" width="2" height="1" fill="#b4b4b4"/><rect x="723" y="505" width="2" height="1" fill="#b4b4b4"/><rect x="733" y="505" width="2" height="1" fill="#b4b4b4"/><rect x="743" y="505" width="2" height="1" fill="#b4b4b4"/><rect x="753" y="505" width="2" height="1" fill="#b4b4b4"/><rect x="763" y="505" width="2" height="1" fill="#b4b4b4"/><rect x="773" y="505" width="2" height="1" fill="#b4b4b4"/><rect x="783" y="505" width="2" height="1" fill="#b4b4b4"/><rect x="793" y="505" width="2" height="1" fill="#b4b4b4"/><rect x="803" y="505" width="2" height="1" fill="#b4b4b4"/><rect x="813" y="505" width="2" height="1" fill="#b4b4b4"/><rect x="823" y="505" width="2" height="1" fill="#b4b4b4"/><rect x="833" y="505" width="2" height="1" fill="#b4b4b4"/><rect x="843" y="505" width="2" height="1" fill="#b4b4b4"/><rect x="853" y="505" width="2" height="1" fill="#b4b4b4"/><rect x="863" y="505" width="2" height="1" fill="#b4b4b4"/><rect x="873" y="505" width="2" height="1" fill="#b4b4b4"/><rect x="883" y="505" width="2" height="1" fill="#b4b4b4"/><rect x="893" y="505" width="2" height="1" fill="#b4b4b4"/><rect x="903" y="505" width="2" height="1" fill="#b4b4b4"/><rect x="913" y="505" width="2" height="1" fill="#b4b4b4"/><rect x="923" y="505" width="2" height="1" fill="#b4b4b4"/><rect x="935" y="506" width="4" height="1" fill="#b0b0b0"/><rect x="34" y="569" width="1" height="1" fill="#b4b4b4"/><rect x="43" y="569" width="2" height="1" fill="#b4b4b4"/><rect x="53" y="569" width="2" height="1" fill="#b4b4b4"/><rect x="63" y="569" width="2" height="1" fill="#b4b4b4"/><rect x="73" y="569" width="2" height="1" fill="#b4b4b4"/><rect x="83" y="569" width="2" height="1" fill="#b4b4b4"/><rect x="93" y="569" width="2" height="1" fill="#b4b4b4"/><rect x="103" y="569" width="2" height="1" fill="#b4b4b4"/><rect x="113" y="569" width="2" height="1" fill="#b4b4b4"/><rect x="123" y="569" width="2" height="1" fill="#b4b4b4"/><rect x="133" y="569" width="2" height="1" fill="#b4b4b4"/><rect x="143" y="569" width="2" height="1" fill="#b4b4b4"/><rect x="153" y="569" width="2" height="1" fill="#b4b4b4"/><rect x="163" y="569" width="2" height="1" fill="#b4b4b4"/><rect x="173" y="569" width="2" height="1" fill="#b4b4b4"/><rect x="183" y="569" width="2" height="1" fill="#b4b4b4"/><rect x="193" y="569" width="2" height="1" fill="#b4b4b4"/><rect x="203" y="569" width="2" height="1" fill="#b4b4b4"/><rect x="213" y="569" width="2" height="1" fill="#b4b4b4"/><rect x="223" y="569" width="2" height="1" fill="#b4b4b4"/><rect x="233" y="569" width="2" height="1" fill="#b4b4b4"/><rect x="243" y="569" width="2" height="1" fill="#b4b4b4"/><rect x="253" y="569" width="2" height="1" fill="#b4b4b4"/><rect x="263" y="569" width="2" height="1" fill="#b4b4b4"/><rect x="273" y="569" width="2" height="1" fill="#b4b4b4"/><rect x="283" y="569" width="2" height="1" fill="#b4b4b4"/><rect x="293" y="569" width="2" height="1" fill="#b4b4b4"/><rect x="303" y="569" width="2" height="1" fill="#b4b4b4"/><rect x="313" y="569" width="2" height="1" fill="#b4b4b4"/><rect x="323" y="569" width="2" height="1" fill="#b4b4b4"/><rect x="333" y="569" width="2" height="1" fill="#b4b4b4"/><rect x="343" y="569" width="2" height="1" fill="#b4b4b4"/><rect x="353" y="569" width="2" height="1" fill="#b4b4b4"/><rect x="363" y="569" width="2" height="1" fill="#b4b4b4"/><rect x="373" y="569" width="2" height="1" fill="#b4b4b4"/><rect x="383" y="569" width="2" height="1" fill="#b4b4b4"/><rect x="393" y="569" width="2" height="1" fill="#b4b4b4"/><rect x="403" y="569" width="2" height="1" fill="#b4b4b4"/><rect x="413" y="569" width="2" height="1" fill="#b4b4b4"/><rect x="423" y="569" width="2" height="1" fill="#b4b4b4"/><rect x="433" y="569" width="2" height="1" fill="#b4b4b4"/><rect x="443" y="569" width="2" height="1" fill="#b4b4b4"/><rect x="453" y="569" width="2" height="1" fill="#b4b4b4"/><rect x="463" y="569" width="2" height="1" fill="#b4b4b4"/><rect x="473" y="569" width="2" height="1" fill="#b4b4b4"/><rect x="483" y="569" width="2" height="1" fill="#b4b4b4"/><rect x="493" y="569" width="2" height="1" fill="#b4b4b4"/><rect x="503" y="569" width="2" height="1" fill="#b4b4b4"/><rect x="513" y="569" width="2" height="1" fill="#b4b4b4"/><rect x="523" y="569" width="2" height="1" fill="#b4b4b4"/><rect x="533" y="569" width="2" height="1" fill="#b4b4b4"/><rect x="543" y="569" width="2" height="1" fill="#b4b4b4"/><rect x="553" y="569" width="2" height="1" fill="#b4b4b4"/><rect x="563" y="569" width="2" height="1" fill="#b4b4b4"/><rect x="573" y="569" width="2" height="1" fill="#b4b4b4"/><rect x="583" y="569" width="2" height="1" fill="#b4b4b4"/><rect x="593" y="569" width="2" height="1" fill="#b4b4b4"/><rect x="603" y="569" width="2" height="1" fill="#b4b4b4"/><rect x="613" y="569" width="2" height="1" fill="#b4b4b4"/><rect x="623" y="569" width="2" height="1" fill="#b4b4b4"/><rect x="633" y="569" width="2" height="1" fill="#b4b4b4"/><rect x="643" y="569" width="2" height="1" fill="#b4b4b4"/><rect x="653" y="569" width="2" height="1" fill="#b4b4b4"/><rect x="663" y="569" width="2" height="1" fill="#b4b4b4"/><rect x="673" y="569" width="2" height="1" fill="#b4b4b4"/><rect x="683" y="569" width="2" height="1" fill="#b4b4b4"/><rect x="693" y="569" width="2" height="1" fill="#b4b4b4"/><rect x="703" y="569" width="2" height="1" fill="#b4b4b4"/><rect x="713" y="569" width="2" height="1" fill="#b4b4b4"/><rect x="723" y="569" width="2" height="1" fill="#b4b4b4"/><rect x="733" y="569" width="2" height="1" fill="#b4b4b4"/><rect x="743" y="569" width="2" height="1" fill="#b4b4b4"/><rect x="753" y="569" width="2" height="1" fill="#b4b4b4"/><rect x="763" y="569" width="2" height="1" fill="#b4b4b4"/><rect x="773" y="569" width="2" height="1" fill="#b4b4b4"/><rect x="783" y="569" width="2" height="1" fill="#b4b4b4"/><rect x="793" y="569" width="2" height="1" fill="#b4b4b4"/><rect x="803" y="569" width="2" height="1" fill="#b4b4b4"/><rect x="813" y="569" width="2" height="1" fill="#b4b4b4"/><rect x="823" y="569" width="2" height="1" fill="#b4b4b4"/><rect x="833" y="569" width="2" height="1" fill="#b4b4b4"/><rect x="843" y="569" width="2" height="1" fill="#b4b4b4"/><rect x="853" y="569" width="2" height="1" fill="#b4b4b4"/><rect x="863" y="569" width="2" height="1" fill="#b4b4b4"/><rect x="873" y="569" width="2" height="1" fill="#b4b4b4"/><rect x="883" y="569" width="2" height="1" fill="#b4b4b4"/><rect x="893" y="569" width="2" height="1" fill="#b4b4b4"/><rect x="903" y="569" width="2" height="1" fill="#b4b4b4"/><rect x="913" y="569" width="2" height="1" fill="#b4b4b4"/><rect x="923" y="569" width="2" height="1" fill="#b4b4b4"/><rect x="935" y="570" width="4" height="1" fill="#b0b0b0"/><rect x="34" y="632" width="1" height="1" fill="#b4b4b4"/><rect x="43" y="632" width="2" height="1" fill="#b4b4b4"/><rect x="53" y="632" width="2" height="1" fill="#b4b4b4"/><rect x="63" y="632" width="2" height="1" fill="#b4b4b4"/><rect x="73" y="632" width="2" height="1" fill="#b4b4b4"/><rect x="83" y="632" width="2" height="1" fill="#b4b4b4"/><rect x="93" y="632" width="2" height="1" fill="#b4b4b4"/><rect x="103" y="632" width="2" height="1" fill="#b4b4b4"/><rect x="113" y="632" width="2" height="1" fill="#b4b4b4"/><rect x="123" y="632" width="2" height="1" fill="#b4b4b4"/><rect x="133" y="632" width="2" height="1" fill="#b4b4b4"/><rect x="143" y="632" width="2" height="1" fill="#b4b4b4"/><rect x="153" y="632" width="2" height="1" fill="#b4b4b4"/><rect x="163" y="632" width="2" height="1" fill="#b4b4b4"/><rect x="173" y="632" width="2" height="1" fill="#b4b4b4"/><rect x="183" y="632" width="2" height="1" fill="#b4b4b4"/><rect x="193" y="632" width="2" height="1" fill="#b4b4b4"/><rect x="203" y="632" width="2" height="1" fill="#b4b4b4"/><rect x="213" y="632" width="2" height="1" fill="#b4b4b4"/><rect x="223" y="632" width="2" height="1" fill="#b4b4b4"/><rect x="233" y="632" width="2" height="1" fill="#b4b4b4"/><rect x="243" y="632" width="2" height="1" fill="#b4b4b4"/><rect x="253" y="632" width="2" height="1" fill="#b4b4b4"/><rect x="263" y="632" width="2" height="1" fill="#b4b4b4"/><rect x="273" y="632" width="2" height="1" fill="#b4b4b4"/><rect x="283" y="632" width="2" height="1" fill="#b4b4b4"/><rect x="293" y="632" width="2" height="1" fill="#b4b4b4"/><rect x="303" y="632" width="2" height="1" fill="#b4b4b4"/><rect x="313" y="632" width="2" height="1" fill="#b4b4b4"/><rect x="323" y="632" width="2" height="1" fill="#b4b4b4"/><rect x="333" y="632" width="2" height="1" fill="#b4b4b4"/><rect x="343" y="632" width="2" height="1" fill="#b4b4b4"/><rect x="353" y="632" width="2" height="1" fill="#b4b4b4"/><rect x="363" y="632" width="2" height="1" fill="#b4b4b4"/><rect x="373" y="632" width="2" height="1" fill="#b4b4b4"/><rect x="383" y="632" width="2" height="1" fill="#b4b4b4"/><rect x="393" y="632" width="2" height="1" fill="#b4b4b4"/><rect x="403" y="632" width="2" height="1" fill="#b4b4b4"/><rect x="413" y="632" width="2" height="1" fill="#b4b4b4"/><rect x="423" y="632" width="2" height="1" fill="#b4b4b4"/><rect x="433" y="632" width="2" height="1" fill="#b4b4b4"/><rect x="443" y="632" width="2" height="1" fill="#b4b4b4"/><rect x="453" y="632" width="2" height="1" fill="#b4b4b4"/><rect x="463" y="632" width="2" height="1" fill="#b4b4b4"/><rect x="473" y="632" width="2" height="1" fill="#b4b4b4"/><rect x="483" y="632" width="2" height="1" fill="#b4b4b4"/><rect x="493" y="632" width="2" height="1" fill="#b4b4b4"/><rect x="503" y="632" width="2" height="1" fill="#b4b4b4"/><rect x="513" y="632" width="2" height="1" fill="#b4b4b4"/><rect x="523" y="632" width="2" height="1" fill="#b4b4b4"/><rect x="533" y="632" width="2" height="1" fill="#b4b4b4"/><rect x="543" y="632" width="2" height="1" fill="#b4b4b4"/><rect x="553" y="632" width="2" height="1" fill="#b4b4b4"/><rect x="563" y="632" width="2" height="1" fill="#b4b4b4"/><rect x="573" y="632" width="2" height="1" fill="#b4b4b4"/><rect x="583" y="632" width="2" height="1" fill="#b4b4b4"/><rect x="593" y="632" width="2" height="1" fill="#b4b4b4"/><rect x="603" y="632" width="2" height="1" fill="#b4b4b4"/><rect x="613" y="632" width="2" height="1" fill="#b4b4b4"/><rect x="623" y="632" width="2" height="1" fill="#b4b4b4"/><rect x="633" y="632" width="2" height="1" fill="#b4b4b4"/><rect x="643" y="632" width="2" height="1" fill="#b4b4b4"/><rect x="653" y="632" width="2" height="1" fill="#b4b4b4"/><rect x="663" y="632" width="2" height="1" fill="#b4b4b4"/><rect x="673" y="632" width="2" height="1" fill="#b4b4b4"/><rect x="683" y="632" width="2" height="1" fill="#b4b4b4"/><rect x="693" y="632" width="2" height="1" fill="#b4b4b4"/><rect x="703" y="632" width="2" height="1" fill="#b4b4b4"/><rect x="713" y="632" width="2" height="1" fill="#b4b4b4"/><rect x="723" y="632" width="2" height="1" fill="#b4b4b4"/><rect x="733" y="632" width="2" height="1" fill="#b4b4b4"/><rect x="743" y="632" width="2" height="1" fill="#b4b4b4"/><rect x="753" y="632" width="2" height="1" fill="#b4b4b4"/><rect x="763" y="632" width="2" height="1" fill="#b4b4b4"/><rect x="773" y="632" width="2" height="1" fill="#b4b4b4"/><rect x="783" y="632" width="2" height="1" fill="#b4b4b4"/><rect x="793" y="632" width="2" height="1" fill="#b4b4b4"/><rect x="803" y="632" width="2" height="1" fill="#b4b4b4"/><rect x="813" y="632" width="2" height="1" fill="#b4b4b4"/><rect x="823" y="632" width="2" height="1" fill="#b4b4b4"/><rect x="833" y="632" width="2" height="1" fill="#b4b4b4"/><rect x="843" y="632" width="2" height="1" fill="#b4b4b4"/><rect x="853" y="632" width="2" height="1" fill="#b4b4b4"/><rect x="863" y="632" width="2" height="1" fill="#b4b4b4"/><rect x="873" y="632" width="2" height="1" fill="#b4b4b4"/><rect x="883" y="632" width="2" height="1" fill="#b4b4b4"/><rect x="893" y="632" width="2" height="1" fill="#b4b4b4"/><rect x="903" y="632" width="2" height="1" fill="#b4b4b4"/><rect x="913" y="632" width="2" height="1" fill="#b4b4b4"/><rect x="923" y="632" width="2" height="1" fill="#b4b4b4"/><rect x="935" y="633" width="4" height="1" fill="#b0b0b0"/><rect x="935" y="697" width="4" height="1" fill="#b0b0b0"/><rect x="32" y="103" width="1" height="1" fill="#b4b4b4"/><rect x="32" y="107" width="1" height="3" fill="#b4b4b4"/><rect x="32" y="113" width="1" height="3" fill="#b4b4b4"/><rect x="32" y="119" width="1" height="3" fill="#b4b4b4"/><rect x="32" y="125" width="1" height="3" fill="#b4b4b4"/><rect x="32" y="131" width="1" height="3" fill="#b4b4b4"/><rect x="32" y="137" width="1" height="3" fill="#b4b4b4"/><rect x="32" y="143" width="1" height="3" fill="#b4b4b4"/><rect x="32" y="149" width="1" height="3" fill="#b4b4b4"/><rect x="32" y="155" width="1" height="3" fill="#b4b4b4"/><rect x="32" y="161" width="1" height="3" fill="#b4b4b4"/><rect x="32" y="167" width="1" height="3" fill="#b4b4b4"/><rect x="32" y="173" width="1" height="3" fill="#b4b4b4"/><rect x="32" y="179" width="1" height="3" fill="#b4b4b4"/><rect x="32" y="185" width="1" height="3" fill="#b4b4b4"/><rect x="32" y="191" width="1" height="3" fill="#b4b4b4"/><rect x="32" y="197" width="1" height="3" fill="#b4b4b4"/><rect x="32" y="203" width="1" height="3" fill="#b4b4b4"/><rect x="32" y="209" width="1" height="3" fill="#b4b4b4"/><rect x="32" y="215" width="1" height="3" fill="#b4b4b4"/><rect x="32" y="221" width="1" height="3" fill="#b4b4b4"/><rect x="32" y="227" width="1" height="3" fill="#b4b4b4"/><rect x="32" y="233" width="1" height="3" fill="#b4b4b4"/><rect x="32" y="239" width="1" height="3" fill="#b4b4b4"/><rect x="32" y="245" width="1" height="3" fill="#b4b4b4"/><rect x="32" y="251" width="1" height="3" fill="#b4b4b4"/><rect x="32" y="257" width="1" height="3" fill="#b4b4b4"/><rect x="32" y="263" width="1" height="3" fill="#b4b4b4"/><rect x="32" y="269" width="1" height="3" fill="#b4b4b4"/><rect x="32" y="275" width="1" height="3" fill="#b4b4b4"/><rect x="32" y="281" width="1" height="3" fill="#b4b4b4"/><rect x="32" y="287" width="1" height="3" fill="#b4b4b4"/><rect x="32" y="293" width="1" height="3" fill="#b4b4b4"/><rect x="32" y="299" width="1" height="3" fill="#b4b4b4"/><rect x="32" y="305" width="1" height="3" fill="#b4b4b4"/><rect x="32" y="311" width="1" height="3" fill="#b4b4b4"/><rect x="32" y="317" width="1" height="3" fill="#b4b4b4"/><rect x="32" y="323" width="1" height="3" fill="#b4b4b4"/><rect x="32" y="329" width="1" height="3" fill="#b4b4b4"/><rect x="32" y="335" width="1" height="3" fill="#b4b4b4"/><rect x="32" y="341" width="1" height="3" fill="#b4b4b4"/><rect x="32" y="347" width="1" height="3" fill="#b4b4b4"/><rect x="32" y="353" width="1" height="3" fill="#b4b4b4"/><rect x="32" y="359" width="1" height="3" fill="#b4b4b4"/><rect x="32" y="365" width="1" height="3" fill="#b4b4b4"/><rect x="32" y="371" width="1" height="3" fill="#b4b4b4"/><rect x="32" y="377" width="1" height="3" fill="#b4b4b4"/><rect x="32" y="383" width="1" height="3" fill="#b4b4b4"/><rect x="32" y="389" width="1" height="3" fill="#b4b4b4"/><rect x="32" y="395" width="1" height="3" fill="#b4b4b4"/><rect x="32" y="401" width="1" height="3" fill="#b4b4b4"/><rect x="32" y="407" width="1" height="3" fill="#b4b4b4"/><rect x="32" y="413" width="1" height="3" fill="#b4b4b4"/><rect x="32" y="419" width="1" height="3" fill="#b4b4b4"/><rect x="32" y="425" width="1" height="3" fill="#b4b4b4"/><rect x="32" y="431" width="1" height="3" fill="#b4b4b4"/><rect x="32" y="437" width="1" height="3" fill="#b4b4b4"/><rect x="32" y="443" width="1" height="3" fill="#b4b4b4"/><rect x="32" y="449" width="1" height="3" fill="#b4b4b4"/><rect x="32" y="455" width="1" height="3" fill="#b4b4b4"/><rect x="32" y="461" width="1" height="3" fill="#b4b4b4"/><rect x="32" y="467" width="1" height="3" fill="#b4b4b4"/><rect x="32" y="473" width="1" height="3" fill="#b4b4b4"/><rect x="32" y="479" width="1" height="3" fill="#b4b4b4"/><rect x="32" y="485" width="1" height="3" fill="#b4b4b4"/><rect x="32" y="491" width="1" height="3" fill="#b4b4b4"/><rect x="32" y="497" width="1" height="3" fill="#b4b4b4"/><rect x="32" y="503" width="1" height="3" fill="#b4b4b4"/><rect x="32" y="509" width="1" height="3" fill="#b4b4b4"/><rect x="32" y="515" width="1" height="3" fill="#b4b4b4"/><rect x="32" y="521" width="1" height="3" fill="#b4b4b4"/><rect x="32" y="527" width="1" height="3" fill="#b4b4b4"/><rect x="32" y="533" width="1" height="3" fill="#b4b4b4"/><rect x="32" y="539" width="1" height="3" fill="#b4b4b4"/><rect x="32" y="545" width="1" height="3" fill="#b4b4b4"/><rect x="32" y="551" width="1" height="3" fill="#b4b4b4"/><rect x="32" y="557" width="1" height="3" fill="#b4b4b4"/><rect x="32" y="563" width="1" height="3" fill="#b4b4b4"/><rect x="32" y="569" width="1" height="3" fill="#b4b4b4"/><rect x="32" y="575" width="1" height="3" fill="#b4b4b4"/><rect x="32" y="581" width="1" height="3" fill="#b4b4b4"/><rect x="32" y="587" width="1" height="3" fill="#b4b4b4"/><rect x="32" y="593" width="1" height="3" fill="#b4b4b4"/><rect x="32" y="599" width="1" height="3" fill="#b4b4b4"/><rect x="32" y="605" width="1" height="3" fill="#b4b4b4"/><rect x="32" y="611" width="1" height="3" fill="#b4b4b4"/><rect x="32" y="617" width="1" height="3" fill="#b4b4b4"/><rect x="32" y="623" width="1" height="3" fill="#b4b4b4"/><rect x="32" y="629" width="1" height="3" fill="#b4b4b4"/><rect x="32" y="635" width="1" height="3" fill="#b4b4b4"/><rect x="32" y="641" width="1" height="3" fill="#b4b4b4"/><rect x="32" y="647" width="1" height="3" fill="#b4b4b4"/><rect x="32" y="653" width="1" height="3" fill="#b4b4b4"/><rect x="32" y="659" width="1" height="3" fill="#b4b4b4"/><rect x="32" y="665" width="1" height="3" fill="#b4b4b4"/><rect x="32" y="671" width="1" height="3" fill="#b4b4b4"/><rect x="32" y="677" width="1" height="3" fill="#b4b4b4"/><rect x="32" y="683" width="1" height="3" fill="#b4b4b4"/><rect x="32" y="689" width="1" height="3" fill="#b4b4b4"/><rect x="32" y="695" width="1" height="1" fill="#b4b4b4"/><rect x="32" y="698" width="1" height="3" fill="#fff"/><rect x="122" y="103" width="1" height="1" fill="#b4b4b4"/><rect x="122" y="107" width="1" height="3" fill="#b4b4b4"/><rect x="122" y="113" width="1" height="3" fill="#b4b4b4"/><rect x="122" y="119" width="1" height="3" fill="#b4b4b4"/><rect x="122" y="125" width="1" height="3" fill="#b4b4b4"/><rect x="122" y="131" width="1" height="3" fill="#b4b4b4"/><rect x="122" y="137" width="1" height="3" fill="#b4b4b4"/><rect x="122" y="143" width="1" height="3" fill="#b4b4b4"/><rect x="122" y="149" width="1" height="3" fill="#b4b4b4"/><rect x="122" y="155" width="1" height="3" fill="#b4b4b4"/><rect x="122" y="161" width="1" height="3" fill="#b4b4b4"/><rect x="122" y="167" width="1" height="3" fill="#b4b4b4"/><rect x="122" y="173" width="1" height="3" fill="#b4b4b4"/><rect x="122" y="179" width="1" height="3" fill="#b4b4b4"/><rect x="122" y="185" width="1" height="3" fill="#b4b4b4"/><rect x="122" y="191" width="1" height="3" fill="#b4b4b4"/><rect x="122" y="197" width="1" height="3" fill="#b4b4b4"/><rect x="122" y="203" width="1" height="3" fill="#b4b4b4"/><rect x="122" y="209" width="1" height="3" fill="#b4b4b4"/><rect x="122" y="215" width="1" height="3" fill="#b4b4b4"/><rect x="122" y="221" width="1" height="3" fill="#b4b4b4"/><rect x="122" y="227" width="1" height="3" fill="#b4b4b4"/><rect x="122" y="233" width="1" height="3" fill="#b4b4b4"/><rect x="122" y="239" width="1" height="3" fill="#b4b4b4"/><rect x="122" y="245" width="1" height="3" fill="#b4b4b4"/><rect x="122" y="251" width="1" height="3" fill="#b4b4b4"/><rect x="122" y="257" width="1" height="3" fill="#b4b4b4"/><rect x="122" y="263" width="1" height="3" fill="#b4b4b4"/><rect x="122" y="269" width="1" height="3" fill="#b4b4b4"/><rect x="122" y="275" width="1" height="3" fill="#b4b4b4"/><rect x="122" y="281" width="1" height="3" fill="#b4b4b4"/><rect x="122" y="287" width="1" height="3" fill="#b4b4b4"/><rect x="122" y="293" width="1" height="3" fill="#b4b4b4"/><rect x="122" y="299" width="1" height="3" fill="#b4b4b4"/><rect x="122" y="305" width="1" height="3" fill="#b4b4b4"/><rect x="122" y="311" width="1" height="3" fill="#b4b4b4"/><rect x="122" y="317" width="1" height="3" fill="#b4b4b4"/><rect x="122" y="323" width="1" height="3" fill="#b4b4b4"/><rect x="122" y="329" width="1" height="3" fill="#b4b4b4"/><rect x="122" y="335" width="1" height="3" fill="#b4b4b4"/><rect x="122" y="341" width="1" height="3" fill="#b4b4b4"/><rect x="122" y="347" width="1" height="3" fill="#b4b4b4"/><rect x="122" y="353" width="1" height="3" fill="#b4b4b4"/><rect x="122" y="359" width="1" height="3" fill="#b4b4b4"/><rect x="122" y="365" width="1" height="3" fill="#b4b4b4"/><rect x="122" y="371" width="1" height="3" fill="#b4b4b4"/><rect x="122" y="377" width="1" height="3" fill="#b4b4b4"/><rect x="122" y="383" width="1" height="3" fill="#b4b4b4"/><rect x="122" y="389" width="1" height="3" fill="#b4b4b4"/><rect x="122" y="395" width="1" height="3" fill="#b4b4b4"/><rect x="122" y="401" width="1" height="3" fill="#b4b4b4"/><rect x="122" y="407" width="1" height="3" fill="#b4b4b4"/><rect x="122" y="413" width="1" height="3" fill="#b4b4b4"/><rect x="122" y="419" width="1" height="3" fill="#b4b4b4"/><rect x="122" y="425" width="1" height="3" fill="#b4b4b4"/><rect x="122" y="431" width="1" height="3" fill="#b4b4b4"/><rect x="122" y="437" width="1" height="3" fill="#b4b4b4"/><rect x="122" y="443" width="1" height="3" fill="#b4b4b4"/><rect x="122" y="449" width="1" height="3" fill="#b4b4b4"/><rect x="122" y="455" width="1" height="3" fill="#b4b4b4"/><rect x="122" y="461" width="1" height="3" fill="#b4b4b4"/><rect x="122" y="467" width="1" height="3" fill="#b4b4b4"/><rect x="122" y="473" width="1" height="3" fill="#b4b4b4"/><rect x="122" y="479" width="1" height="3" fill="#b4b4b4"/><rect x="122" y="485" width="1" height="3" fill="#b4b4b4"/><rect x="122" y="491" width="1" height="3" fill="#b4b4b4"/><rect x="122" y="497" width="1" height="3" fill="#b4b4b4"/><rect x="122" y="503" width="1" height="3" fill="#b4b4b4"/><rect x="122" y="509" width="1" height="3" fill="#b4b4b4"/><rect x="122" y="515" width="1" height="3" fill="#b4b4b4"/><rect x="122" y="521" width="1" height="3" fill="#b4b4b4"/><rect x="122" y="527" width="1" height="3" fill="#b4b4b4"/><rect x="122" y="533" width="1" height="3" fill="#b4b4b4"/><rect x="122" y="539" width="1" height="3" fill="#b4b4b4"/><rect x="122" y="545" width="1" height="3" fill="#b4b4b4"/><rect x="122" y="551" width="1" height="3" fill="#b4b4b4"/><rect x="122" y="557" width="1" height="3" fill="#b4b4b4"/><rect x="122" y="563" width="1" height="3" fill="#b4b4b4"/><rect x="122" y="569" width="1" height="3" fill="#b4b4b4"/><rect x="122" y="575" width="1" height="3" fill="#b4b4b4"/><rect x="122" y="581" width="1" height="3" fill="#b4b4b4"/><rect x="122" y="587" width="1" height="3" fill="#b4b4b4"/><rect x="122" y="593" width="1" height="3" fill="#b4b4b4"/><rect x="122" y="599" width="1" height="3" fill="#b4b4b4"/><rect x="122" y="605" width="1" height="3" fill="#b4b4b4"/><rect x="122" y="611" width="1" height="3" fill="#b4b4b4"/><rect x="122" y="617" width="1" height="3" fill="#b4b4b4"/><rect x="122" y="623" width="1" height="3" fill="#b4b4b4"/><rect x="122" y="629" width="1" height="3" fill="#b4b4b4"/><rect x="122" y="635" width="1" height="3" fill="#b4b4b4"/><rect x="122" y="641" width="1" height="3" fill="#b4b4b4"/><rect x="122" y="647" width="1" height="3" fill="#b4b4b4"/><rect x="122" y="653" width="1" height="3" fill="#b4b4b4"/><rect x="122" y="659" width="1" height="3" fill="#b4b4b4"/><rect x="122" y="665" width="1" height="3" fill="#b4b4b4"/><rect x="122" y="671" width="1" height="3" fill="#b4b4b4"/><rect x="122" y="677" width="1" height="3" fill="#b4b4b4"/><rect x="122" y="683" width="1" height="3" fill="#b4b4b4"/><rect x="122" y="689" width="1" height="3" fill="#b4b4b4"/><rect x="122" y="695" width="1" height="1" fill="#b4b4b4"/><rect x="122" y="698" width="1" height="3" fill="#fff"/><rect x="194" y="103" width="1" height="1" fill="#b4b4b4"/><rect x="194" y="107" width="1" height="3" fill="#b4b4b4"/><rect x="194" y="113" width="1" height="3" fill="#b4b4b4"/><rect x="194" y="119" width="1" height="3" fill="#b4b4b4"/><rect x="194" y="125" width="1" height="3" fill="#b4b4b4"/><rect x="194" y="131" width="1" height="3" fill="#b4b4b4"/><rect x="194" y="137" width="1" height="3" fill="#b4b4b4"/><rect x="194" y="143" width="1" height="3" fill="#b4b4b4"/><rect x="194" y="149" width="1" height="3" fill="#b4b4b4"/><rect x="194" y="155" width="1" height="3" fill="#b4b4b4"/><rect x="194" y="161" width="1" height="3" fill="#b4b4b4"/><rect x="194" y="167" width="1" height="3" fill="#b4b4b4"/><rect x="194" y="173" width="1" height="3" fill="#b4b4b4"/><rect x="194" y="179" width="1" height="3" fill="#b4b4b4"/><rect x="194" y="185" width="1" height="3" fill="#b4b4b4"/><rect x="194" y="191" width="1" height="3" fill="#b4b4b4"/><rect x="194" y="197" width="1" height="3" fill="#b4b4b4"/><rect x="194" y="203" width="1" height="3" fill="#b4b4b4"/><rect x="194" y="209" width="1" height="3" fill="#b4b4b4"/><rect x="194" y="215" width="1" height="3" fill="#b4b4b4"/><rect x="194" y="221" width="1" height="3" fill="#b4b4b4"/><rect x="194" y="227" width="1" height="3" fill="#b4b4b4"/><rect x="194" y="233" width="1" height="3" fill="#b4b4b4"/><rect x="194" y="239" width="1" height="3" fill="#b4b4b4"/><rect x="194" y="245" width="1" height="3" fill="#b4b4b4"/><rect x="194" y="251" width="1" height="3" fill="#b4b4b4"/><rect x="194" y="257" width="1" height="3" fill="#b4b4b4"/><rect x="194" y="263" width="1" height="3" fill="#b4b4b4"/><rect x="194" y="269" width="1" height="3" fill="#b4b4b4"/><rect x="194" y="275" width="1" height="3" fill="#b4b4b4"/><rect x="194" y="281" width="1" height="3" fill="#b4b4b4"/><rect x="194" y="287" width="1" height="3" fill="#b4b4b4"/><rect x="194" y="293" width="1" height="3" fill="#b4b4b4"/><rect x="194" y="299" width="1" height="3" fill="#b4b4b4"/><rect x="194" y="305" width="1" height="3" fill="#b4b4b4"/><rect x="194" y="311" width="1" height="3" fill="#b4b4b4"/><rect x="194" y="317" width="1" height="3" fill="#b4b4b4"/><rect x="194" y="323" width="1" height="3" fill="#b4b4b4"/><rect x="194" y="329" width="1" height="3" fill="#b4b4b4"/><rect x="194" y="335" width="1" height="3" fill="#b4b4b4"/><rect x="194" y="341" width="1" height="3" fill="#b4b4b4"/><rect x="194" y="347" width="1" height="3" fill="#b4b4b4"/><rect x="194" y="353" width="1" height="3" fill="#b4b4b4"/><rect x="194" y="359" width="1" height="3" fill="#b4b4b4"/><rect x="194" y="365" width="1" height="3" fill="#b4b4b4"/><rect x="194" y="371" width="1" height="3" fill="#b4b4b4"/><rect x="194" y="377" width="1" height="3" fill="#b4b4b4"/><rect x="194" y="383" width="1" height="3" fill="#b4b4b4"/><rect x="194" y="389" width="1" height="3" fill="#b4b4b4"/><rect x="194" y="395" width="1" height="3" fill="#b4b4b4"/><rect x="194" y="401" width="1" height="3" fill="#b4b4b4"/><rect x="194" y="407" width="1" height="3" fill="#b4b4b4"/><rect x="194" y="413" width="1" height="3" fill="#b4b4b4"/><rect x="194" y="419" width="1" height="3" fill="#b4b4b4"/><rect x="194" y="425" width="1" height="3" fill="#b4b4b4"/><rect x="194" y="431" width="1" height="3" fill="#b4b4b4"/><rect x="194" y="437" width="1" height="3" fill="#b4b4b4"/><rect x="194" y="443" width="1" height="3" fill="#b4b4b4"/><rect x="194" y="449" width="1" height="3" fill="#b4b4b4"/><rect x="194" y="455" width="1" height="3" fill="#b4b4b4"/><rect x="194" y="461" width="1" height="3" fill="#b4b4b4"/><rect x="194" y="467" width="1" height="3" fill="#b4b4b4"/><rect x="194" y="473" width="1" height="3" fill="#b4b4b4"/><rect x="194" y="479" width="1" height="3" fill="#b4b4b4"/><rect x="194" y="485" width="1" height="3" fill="#b4b4b4"/><rect x="194" y="491" width="1" height="3" fill="#b4b4b4"/><rect x="194" y="497" width="1" height="3" fill="#b4b4b4"/><rect x="194" y="503" width="1" height="3" fill="#b4b4b4"/><rect x="194" y="509" width="1" height="3" fill="#b4b4b4"/><rect x="194" y="515" width="1" height="3" fill="#b4b4b4"/><rect x="194" y="521" width="1" height="3" fill="#b4b4b4"/><rect x="194" y="527" width="1" height="3" fill="#b4b4b4"/><rect x="194" y="533" width="1" height="3" fill="#b4b4b4"/><rect x="194" y="539" width="1" height="3" fill="#b4b4b4"/><rect x="194" y="545" width="1" height="3" fill="#b4b4b4"/><rect x="194" y="551" width="1" height="3" fill="#b4b4b4"/><rect x="194" y="557" width="1" height="3" fill="#b4b4b4"/><rect x="194" y="563" width="1" height="3" fill="#b4b4b4"/><rect x="194" y="569" width="1" height="3" fill="#b4b4b4"/><rect x="194" y="575" width="1" height="3" fill="#b4b4b4"/><rect x="194" y="581" width="1" height="3" fill="#b4b4b4"/><rect x="194" y="587" width="1" height="3" fill="#b4b4b4"/><rect x="194" y="593" width="1" height="3" fill="#b4b4b4"/><rect x="194" y="599" width="1" height="3" fill="#b4b4b4"/><rect x="194" y="605" width="1" height="3" fill="#b4b4b4"/><rect x="194" y="611" width="1" height="3" fill="#b4b4b4"/><rect x="194" y="617" width="1" height="3" fill="#b4b4b4"/><rect x="194" y="623" width="1" height="3" fill="#b4b4b4"/><rect x="194" y="629" width="1" height="3" fill="#b4b4b4"/><rect x="194" y="635" width="1" height="3" fill="#b4b4b4"/><rect x="194" y="641" width="1" height="3" fill="#b4b4b4"/><rect x="194" y="647" width="1" height="3" fill="#b4b4b4"/><rect x="194" y="653" width="1" height="3" fill="#b4b4b4"/><rect x="194" y="659" width="1" height="3" fill="#b4b4b4"/><rect x="194" y="665" width="1" height="3" fill="#b4b4b4"/><rect x="194" y="671" width="1" height="3" fill="#b4b4b4"/><rect x="194" y="677" width="1" height="3" fill="#b4b4b4"/><rect x="194" y="683" width="1" height="3" fill="#b4b4b4"/><rect x="194" y="689" width="1" height="3" fill="#b4b4b4"/><rect x="194" y="695" width="1" height="1" fill="#b4b4b4"/><rect x="194" y="698" width="1" height="3" fill="#fff"/><rect x="284" y="103" width="1" height="1" fill="#b4b4b4"/><rect x="284" y="107" width="1" height="3" fill="#b4b4b4"/><rect x="284" y="113" width="1" height="3" fill="#b4b4b4"/><rect x="284" y="119" width="1" height="3" fill="#b4b4b4"/><rect x="284" y="125" width="1" height="3" fill="#b4b4b4"/><rect x="284" y="131" width="1" height="3" fill="#b4b4b4"/><rect x="284" y="137" width="1" height="3" fill="#b4b4b4"/><rect x="284" y="143" width="1" height="3" fill="#b4b4b4"/><rect x="284" y="149" width="1" height="3" fill="#b4b4b4"/><rect x="284" y="155" width="1" height="3" fill="#b4b4b4"/><rect x="284" y="161" width="1" height="3" fill="#b4b4b4"/><rect x="284" y="167" width="1" height="3" fill="#b4b4b4"/><rect x="284" y="173" width="1" height="3" fill="#b4b4b4"/><rect x="284" y="179" width="1" height="3" fill="#b4b4b4"/><rect x="284" y="185" width="1" height="3" fill="#b4b4b4"/><rect x="284" y="191" width="1" height="3" fill="#b4b4b4"/><rect x="284" y="197" width="1" height="3" fill="#b4b4b4"/><rect x="284" y="203" width="1" height="3" fill="#b4b4b4"/><rect x="284" y="209" width="1" height="3" fill="#b4b4b4"/><rect x="284" y="215" width="1" height="3" fill="#b4b4b4"/><rect x="284" y="221" width="1" height="3" fill="#b4b4b4"/><rect x="284" y="227" width="1" height="3" fill="#b4b4b4"/><rect x="284" y="233" width="1" height="3" fill="#b4b4b4"/><rect x="284" y="239" width="1" height="3" fill="#b4b4b4"/><rect x="284" y="245" width="1" height="3" fill="#b4b4b4"/><rect x="284" y="251" width="1" height="3" fill="#b4b4b4"/><rect x="284" y="257" width="1" height="3" fill="#b4b4b4"/><rect x="284" y="263" width="1" height="3" fill="#b4b4b4"/><rect x="284" y="269" width="1" height="3" fill="#b4b4b4"/><rect x="284" y="275" width="1" height="3" fill="#b4b4b4"/><rect x="284" y="281" width="1" height="3" fill="#b4b4b4"/><rect x="284" y="287" width="1" height="3" fill="#b4b4b4"/><rect x="284" y="293" width="1" height="3" fill="#b4b4b4"/><rect x="284" y="299" width="1" height="3" fill="#b4b4b4"/><rect x="284" y="305" width="1" height="3" fill="#b4b4b4"/><rect x="284" y="311" width="1" height="3" fill="#b4b4b4"/><rect x="284" y="317" width="1" height="3" fill="#b4b4b4"/><rect x="284" y="323" width="1" height="3" fill="#b4b4b4"/><rect x="284" y="329" width="1" height="3" fill="#b4b4b4"/><rect x="284" y="335" width="1" height="3" fill="#b4b4b4"/><rect x="284" y="341" width="1" height="3" fill="#b4b4b4"/><rect x="284" y="347" width="1" height="3" fill="#b4b4b4"/><rect x="284" y="353" width="1" height="3" fill="#b4b4b4"/><rect x="284" y="359" width="1" height="3" fill="#b4b4b4"/><rect x="284" y="365" width="1" height="3" fill="#b4b4b4"/><rect x="284" y="371" width="1" height="3" fill="#b4b4b4"/><rect x="284" y="377" width="1" height="3" fill="#b4b4b4"/><rect x="284" y="383" width="1" height="3" fill="#b4b4b4"/><rect x="284" y="389" width="1" height="3" fill="#b4b4b4"/><rect x="284" y="395" width="1" height="3" fill="#b4b4b4"/><rect x="284" y="401" width="1" height="3" fill="#b4b4b4"/><rect x="284" y="407" width="1" height="3" fill="#b4b4b4"/><rect x="284" y="413" width="1" height="3" fill="#b4b4b4"/><rect x="284" y="419" width="1" height="3" fill="#b4b4b4"/><rect x="284" y="425" width="1" height="3" fill="#b4b4b4"/><rect x="284" y="431" width="1" height="3" fill="#b4b4b4"/><rect x="284" y="437" width="1" height="3" fill="#b4b4b4"/><rect x="284" y="443" width="1" height="3" fill="#b4b4b4"/><rect x="284" y="449" width="1" height="3" fill="#b4b4b4"/><rect x="284" y="455" width="1" height="3" fill="#b4b4b4"/><rect x="284" y="461" width="1" height="3" fill="#b4b4b4"/><rect x="284" y="467" width="1" height="3" fill="#b4b4b4"/><rect x="284" y="473" width="1" height="3" fill="#b4b4b4"/><rect x="284" y="479" width="1" height="3" fill="#b4b4b4"/><rect x="284" y="485" width="1" height="3" fill="#b4b4b4"/><rect x="284" y="491" width="1" height="3" fill="#b4b4b4"/><rect x="284" y="497" width="1" height="3" fill="#b4b4b4"/><rect x="284" y="503" width="1" height="3" fill="#b4b4b4"/><rect x="284" y="509" width="1" height="3" fill="#b4b4b4"/><rect x="284" y="515" width="1" height="3" fill="#b4b4b4"/><rect x="284" y="521" width="1" height="3" fill="#b4b4b4"/><rect x="284" y="527" width="1" height="3" fill="#b4b4b4"/><rect x="284" y="533" width="1" height="3" fill="#b4b4b4"/><rect x="284" y="539" width="1" height="3" fill="#b4b4b4"/><rect x="284" y="545" width="1" height="3" fill="#b4b4b4"/><rect x="284" y="551" width="1" height="3" fill="#b4b4b4"/><rect x="284" y="557" width="1" height="3" fill="#b4b4b4"/><rect x="284" y="563" width="1" height="3" fill="#b4b4b4"/><rect x="284" y="569" width="1" height="3" fill="#b4b4b4"/><rect x="284" y="575" width="1" height="3" fill="#b4b4b4"/><rect x="284" y="581" width="1" height="3" fill="#b4b4b4"/><rect x="284" y="587" width="1" height="3" fill="#b4b4b4"/><rect x="284" y="593" width="1" height="3" fill="#b4b4b4"/><rect x="284" y="599" width="1" height="3" fill="#b4b4b4"/><rect x="284" y="605" width="1" height="3" fill="#b4b4b4"/><rect x="284" y="611" width="1" height="3" fill="#b4b4b4"/><rect x="284" y="617" width="1" height="3" fill="#b4b4b4"/><rect x="284" y="623" width="1" height="3" fill="#b4b4b4"/><rect x="284" y="629" width="1" height="3" fill="#b4b4b4"/><rect x="284" y="635" width="1" height="3" fill="#b4b4b4"/><rect x="284" y="641" width="1" height="3" fill="#b4b4b4"/><rect x="284" y="647" width="1" height="3" fill="#b4b4b4"/><rect x="284" y="653" width="1" height="3" fill="#b4b4b4"/><rect x="284" y="659" width="1" height="3" fill="#b4b4b4"/><rect x="284" y="665" width="1" height="3" fill="#b4b4b4"/><rect x="284" y="671" width="1" height="3" fill="#b4b4b4"/><rect x="284" y="677" width="1" height="3" fill="#b4b4b4"/><rect x="284" y="683" width="1" height="3" fill="#b4b4b4"/><rect x="284" y="689" width="1" height="3" fill="#b4b4b4"/><rect x="284" y="695" width="1" height="1" fill="#b4b4b4"/><rect x="284" y="698" width="1" height="3" fill="#fff"/><rect x="374" y="103" width="1" height="1" fill="#b4b4b4"/><rect x="374" y="107" width="1" height="3" fill="#b4b4b4"/><rect x="374" y="113" width="1" height="3" fill="#b4b4b4"/><rect x="374" y="119" width="1" height="3" fill="#b4b4b4"/><rect x="374" y="125" width="1" height="3" fill="#b4b4b4"/><rect x="374" y="131" width="1" height="3" fill="#b4b4b4"/><rect x="374" y="137" width="1" height="3" fill="#b4b4b4"/><rect x="374" y="143" width="1" height="3" fill="#b4b4b4"/><rect x="374" y="149" width="1" height="3" fill="#b4b4b4"/><rect x="374" y="155" width="1" height="3" fill="#b4b4b4"/><rect x="374" y="161" width="1" height="3" fill="#b4b4b4"/><rect x="374" y="167" width="1" height="3" fill="#b4b4b4"/><rect x="374" y="173" width="1" height="3" fill="#b4b4b4"/><rect x="374" y="179" width="1" height="3" fill="#b4b4b4"/><rect x="374" y="185" width="1" height="3" fill="#b4b4b4"/><rect x="374" y="191" width="1" height="3" fill="#b4b4b4"/><rect x="374" y="197" width="1" height="3" fill="#b4b4b4"/><rect x="374" y="203" width="1" height="3" fill="#b4b4b4"/><rect x="374" y="209" width="1" height="3" fill="#b4b4b4"/><rect x="374" y="215" width="1" height="3" fill="#b4b4b4"/><rect x="374" y="221" width="1" height="3" fill="#b4b4b4"/><rect x="374" y="227" width="1" height="3" fill="#b4b4b4"/><rect x="374" y="233" width="1" height="3" fill="#b4b4b4"/><rect x="374" y="239" width="1" height="3" fill="#b4b4b4"/><rect x="374" y="245" width="1" height="3" fill="#b4b4b4"/><rect x="374" y="251" width="1" height="3" fill="#b4b4b4"/><rect x="374" y="257" width="1" height="3" fill="#b4b4b4"/><rect x="374" y="263" width="1" height="3" fill="#b4b4b4"/><rect x="374" y="269" width="1" height="3" fill="#b4b4b4"/><rect x="374" y="275" width="1" height="3" fill="#b4b4b4"/><rect x="374" y="281" width="1" height="3" fill="#b4b4b4"/><rect x="374" y="287" width="1" height="3" fill="#b4b4b4"/><rect x="374" y="293" width="1" height="3" fill="#b4b4b4"/><rect x="374" y="299" width="1" height="3" fill="#b4b4b4"/><rect x="374" y="305" width="1" height="3" fill="#b4b4b4"/><rect x="374" y="311" width="1" height="3" fill="#b4b4b4"/><rect x="374" y="317" width="1" height="3" fill="#b4b4b4"/><rect x="374" y="323" width="1" height="3" fill="#b4b4b4"/><rect x="374" y="329" width="1" height="3" fill="#b4b4b4"/><rect x="374" y="335" width="1" height="3" fill="#b4b4b4"/><rect x="374" y="341" width="1" height="3" fill="#b4b4b4"/><rect x="374" y="347" width="1" height="3" fill="#b4b4b4"/><rect x="374" y="353" width="1" height="3" fill="#b4b4b4"/><rect x="374" y="359" width="1" height="3" fill="#b4b4b4"/><rect x="374" y="365" width="1" height="3" fill="#b4b4b4"/><rect x="374" y="371" width="1" height="3" fill="#b4b4b4"/><rect x="374" y="377" width="1" height="3" fill="#b4b4b4"/><rect x="374" y="383" width="1" height="3" fill="#b4b4b4"/><rect x="374" y="389" width="1" height="3" fill="#b4b4b4"/><rect x="374" y="395" width="1" height="3" fill="#b4b4b4"/><rect x="374" y="401" width="1" height="3" fill="#b4b4b4"/><rect x="374" y="407" width="1" height="3" fill="#b4b4b4"/><rect x="374" y="413" width="1" height="3" fill="#b4b4b4"/><rect x="374" y="419" width="1" height="3" fill="#b4b4b4"/><rect x="374" y="425" width="1" height="3" fill="#b4b4b4"/><rect x="374" y="431" width="1" height="3" fill="#b4b4b4"/><rect x="374" y="437" width="1" height="3" fill="#b4b4b4"/><rect x="374" y="443" width="1" height="3" fill="#b4b4b4"/><rect x="374" y="449" width="1" height="3" fill="#b4b4b4"/><rect x="374" y="455" width="1" height="3" fill="#b4b4b4"/><rect x="374" y="461" width="1" height="3" fill="#b4b4b4"/><rect x="374" y="467" width="1" height="3" fill="#b4b4b4"/><rect x="374" y="473" width="1" height="3" fill="#b4b4b4"/><rect x="374" y="479" width="1" height="3" fill="#b4b4b4"/><rect x="374" y="485" width="1" height="3" fill="#b4b4b4"/><rect x="374" y="491" width="1" height="3" fill="#b4b4b4"/><rect x="374" y="497" width="1" height="3" fill="#b4b4b4"/><rect x="374" y="503" width="1" height="3" fill="#b4b4b4"/><rect x="374" y="509" width="1" height="3" fill="#b4b4b4"/><rect x="374" y="515" width="1" height="3" fill="#b4b4b4"/><rect x="374" y="521" width="1" height="3" fill="#b4b4b4"/><rect x="374" y="527" width="1" height="3" fill="#b4b4b4"/><rect x="374" y="533" width="1" height="3" fill="#b4b4b4"/><rect x="374" y="539" width="1" height="3" fill="#b4b4b4"/><rect x="374" y="545" width="1" height="3" fill="#b4b4b4"/><rect x="374" y="551" width="1" height="3" fill="#b4b4b4"/><rect x="374" y="557" width="1" height="3" fill="#b4b4b4"/><rect x="374" y="563" width="1" height="3" fill="#b4b4b4"/><rect x="374" y="569" width="1" height="3" fill="#b4b4b4"/><rect x="374" y="575" width="1" height="3" fill="#b4b4b4"/><rect x="374" y="581" width="1" height="3" fill="#b4b4b4"/><rect x="374" y="587" width="1" height="3" fill="#b4b4b4"/><rect x="374" y="593" width="1" height="3" fill="#b4b4b4"/><rect x="374" y="599" width="1" height="3" fill="#b4b4b4"/><rect x="374" y="605" width="1" height="3" fill="#b4b4b4"/><rect x="374" y="611" width="1" height="3" fill="#b4b4b4"/><rect x="374" y="617" width="1" height="3" fill="#b4b4b4"/><rect x="374" y="623" width="1" height="3" fill="#b4b4b4"/><rect x="374" y="629" width="1" height="3" fill="#b4b4b4"/><rect x="374" y="635" width="1" height="3" fill="#b4b4b4"/><rect x="374" y="641" width="1" height="3" fill="#b4b4b4"/><rect x="374" y="647" width="1" height="3" fill="#b4b4b4"/><rect x="374" y="653" width="1" height="3" fill="#b4b4b4"/><rect x="374" y="659" width="1" height="3" fill="#b4b4b4"/><rect x="374" y="665" width="1" height="3" fill="#b4b4b4"/><rect x="374" y="671" width="1" height="3" fill="#b4b4b4"/><rect x="374" y="677" width="1" height="3" fill="#b4b4b4"/><rect x="374" y="683" width="1" height="3" fill="#b4b4b4"/><rect x="374" y="689" width="1" height="3" fill="#b4b4b4"/><rect x="374" y="695" width="1" height="1" fill="#b4b4b4"/><rect x="374" y="698" width="1" height="3" fill="#fff"/><rect x="464" y="103" width="1" height="1" fill="#b4b4b4"/><rect x="464" y="107" width="1" height="3" fill="#b4b4b4"/><rect x="464" y="113" width="1" height="3" fill="#b4b4b4"/><rect x="464" y="119" width="1" height="3" fill="#b4b4b4"/><rect x="464" y="125" width="1" height="3" fill="#b4b4b4"/><rect x="464" y="131" width="1" height="3" fill="#b4b4b4"/><rect x="464" y="137" width="1" height="3" fill="#b4b4b4"/><rect x="464" y="143" width="1" height="3" fill="#b4b4b4"/><rect x="464" y="149" width="1" height="3" fill="#b4b4b4"/><rect x="464" y="155" width="1" height="3" fill="#b4b4b4"/><rect x="464" y="161" width="1" height="3" fill="#b4b4b4"/><rect x="464" y="167" width="1" height="3" fill="#b4b4b4"/><rect x="464" y="173" width="1" height="3" fill="#b4b4b4"/><rect x="464" y="179" width="1" height="3" fill="#b4b4b4"/><rect x="464" y="185" width="1" height="3" fill="#b4b4b4"/><rect x="464" y="191" width="1" height="3" fill="#b4b4b4"/><rect x="464" y="197" width="1" height="3" fill="#b4b4b4"/><rect x="464" y="203" width="1" height="3" fill="#b4b4b4"/><rect x="464" y="209" width="1" height="3" fill="#b4b4b4"/><rect x="464" y="215" width="1" height="3" fill="#b4b4b4"/><rect x="464" y="221" width="1" height="3" fill="#b4b4b4"/><rect x="464" y="227" width="1" height="3" fill="#b4b4b4"/><rect x="464" y="233" width="1" height="3" fill="#b4b4b4"/><rect x="464" y="239" width="1" height="3" fill="#b4b4b4"/><rect x="464" y="245" width="1" height="3" fill="#b4b4b4"/><rect x="464" y="251" width="1" height="3" fill="#b4b4b4"/><rect x="464" y="257" width="1" height="3" fill="#b4b4b4"/><rect x="464" y="263" width="1" height="3" fill="#b4b4b4"/><rect x="464" y="269" width="1" height="3" fill="#b4b4b4"/><rect x="464" y="275" width="1" height="3" fill="#b4b4b4"/><rect x="464" y="281" width="1" height="3" fill="#b4b4b4"/><rect x="464" y="287" width="1" height="3" fill="#b4b4b4"/><rect x="464" y="293" width="1" height="3" fill="#b4b4b4"/><rect x="464" y="299" width="1" height="3" fill="#b4b4b4"/><rect x="464" y="305" width="1" height="3" fill="#b4b4b4"/><rect x="464" y="311" width="1" height="3" fill="#b4b4b4"/><rect x="464" y="317" width="1" height="3" fill="#b4b4b4"/><rect x="464" y="323" width="1" height="3" fill="#b4b4b4"/><rect x="464" y="329" width="1" height="3" fill="#b4b4b4"/><rect x="464" y="335" width="1" height="3" fill="#b4b4b4"/><rect x="464" y="341" width="1" height="3" fill="#b4b4b4"/><rect x="464" y="347" width="1" height="3" fill="#b4b4b4"/><rect x="464" y="353" width="1" height="3" fill="#b4b4b4"/><rect x="464" y="359" width="1" height="3" fill="#b4b4b4"/><rect x="464" y="365" width="1" height="3" fill="#b4b4b4"/><rect x="464" y="371" width="1" height="3" fill="#b4b4b4"/><rect x="464" y="377" width="1" height="3" fill="#b4b4b4"/><rect x="464" y="383" width="1" height="3" fill="#b4b4b4"/><rect x="464" y="389" width="1" height="3" fill="#b4b4b4"/><rect x="464" y="395" width="1" height="3" fill="#b4b4b4"/><rect x="464" y="401" width="1" height="3" fill="#b4b4b4"/><rect x="464" y="407" width="1" height="3" fill="#b4b4b4"/><rect x="464" y="413" width="1" height="3" fill="#b4b4b4"/><rect x="464" y="419" width="1" height="3" fill="#b4b4b4"/><rect x="464" y="425" width="1" height="3" fill="#b4b4b4"/><rect x="464" y="431" width="1" height="3" fill="#b4b4b4"/><rect x="464" y="437" width="1" height="3" fill="#b4b4b4"/><rect x="464" y="443" width="1" height="3" fill="#b4b4b4"/><rect x="464" y="449" width="1" height="3" fill="#b4b4b4"/><rect x="464" y="455" width="1" height="3" fill="#b4b4b4"/><rect x="464" y="461" width="1" height="3" fill="#b4b4b4"/><rect x="464" y="467" width="1" height="3" fill="#b4b4b4"/><rect x="464" y="473" width="1" height="3" fill="#b4b4b4"/><rect x="464" y="479" width="1" height="3" fill="#b4b4b4"/><rect x="464" y="485" width="1" height="3" fill="#b4b4b4"/><rect x="464" y="491" width="1" height="3" fill="#b4b4b4"/><rect x="464" y="497" width="1" height="3" fill="#b4b4b4"/><rect x="464" y="503" width="1" height="3" fill="#b4b4b4"/><rect x="464" y="509" width="1" height="3" fill="#b4b4b4"/><rect x="464" y="515" width="1" height="3" fill="#b4b4b4"/><rect x="464" y="521" width="1" height="3" fill="#b4b4b4"/><rect x="464" y="527" width="1" height="3" fill="#b4b4b4"/><rect x="464" y="533" width="1" height="3" fill="#b4b4b4"/><rect x="464" y="539" width="1" height="3" fill="#b4b4b4"/><rect x="464" y="545" width="1" height="3" fill="#b4b4b4"/><rect x="464" y="551" width="1" height="3" fill="#b4b4b4"/><rect x="464" y="557" width="1" height="3" fill="#b4b4b4"/><rect x="464" y="563" width="1" height="3" fill="#b4b4b4"/><rect x="464" y="569" width="1" height="3" fill="#b4b4b4"/><rect x="464" y="575" width="1" height="3" fill="#b4b4b4"/><rect x="464" y="581" width="1" height="3" fill="#b4b4b4"/><rect x="464" y="587" width="1" height="3" fill="#b4b4b4"/><rect x="464" y="593" width="1" height="3" fill="#b4b4b4"/><rect x="464" y="599" width="1" height="3" fill="#b4b4b4"/><rect x="464" y="605" width="1" height="3" fill="#b4b4b4"/><rect x="464" y="611" width="1" height="3" fill="#b4b4b4"/><rect x="464" y="617" width="1" height="3" fill="#b4b4b4"/><rect x="464" y="623" width="1" height="3" fill="#b4b4b4"/><rect x="464" y="629" width="1" height="3" fill="#b4b4b4"/><rect x="464" y="635" width="1" height="3" fill="#b4b4b4"/><rect x="464" y="641" width="1" height="3" fill="#b4b4b4"/><rect x="464" y="647" width="1" height="3" fill="#b4b4b4"/><rect x="464" y="653" width="1" height="3" fill="#b4b4b4"/><rect x="464" y="659" width="1" height="3" fill="#b4b4b4"/><rect x="464" y="665" width="1" height="3" fill="#b4b4b4"/><rect x="464" y="671" width="1" height="3" fill="#b4b4b4"/><rect x="464" y="677" width="1" height="3" fill="#b4b4b4"/><rect x="464" y="683" width="1" height="3" fill="#b4b4b4"/><rect x="464" y="689" width="1" height="3" fill="#b4b4b4"/><rect x="464" y="695" width="1" height="1" fill="#b4b4b4"/><rect x="464" y="698" width="1" height="3" fill="#fff"/><rect x="548" y="103" width="1" height="1" fill="#b4b4b4"/><rect x="548" y="107" width="1" height="3" fill="#b4b4b4"/><rect x="548" y="113" width="1" height="3" fill="#b4b4b4"/><rect x="548" y="119" width="1" height="3" fill="#b4b4b4"/><rect x="548" y="125" width="1" height="3" fill="#b4b4b4"/><rect x="548" y="131" width="1" height="3" fill="#b4b4b4"/><rect x="548" y="137" width="1" height="3" fill="#b4b4b4"/><rect x="548" y="143" width="1" height="3" fill="#b4b4b4"/><rect x="548" y="149" width="1" height="3" fill="#b4b4b4"/><rect x="548" y="155" width="1" height="3" fill="#b4b4b4"/><rect x="548" y="161" width="1" height="3" fill="#b4b4b4"/><rect x="548" y="167" width="1" height="3" fill="#b4b4b4"/><rect x="548" y="173" width="1" height="3" fill="#b4b4b4"/><rect x="548" y="179" width="1" height="3" fill="#b4b4b4"/><rect x="548" y="185" width="1" height="3" fill="#b4b4b4"/><rect x="548" y="191" width="1" height="3" fill="#b4b4b4"/><rect x="548" y="197" width="1" height="3" fill="#b4b4b4"/><rect x="548" y="203" width="1" height="3" fill="#b4b4b4"/><rect x="548" y="209" width="1" height="3" fill="#b4b4b4"/><rect x="548" y="215" width="1" height="3" fill="#b4b4b4"/><rect x="548" y="221" width="1" height="3" fill="#b4b4b4"/><rect x="548" y="227" width="1" height="3" fill="#b4b4b4"/><rect x="548" y="233" width="1" height="3" fill="#b4b4b4"/><rect x="548" y="239" width="1" height="3" fill="#b4b4b4"/><rect x="548" y="245" width="1" height="3" fill="#b4b4b4"/><rect x="548" y="251" width="1" height="3" fill="#b4b4b4"/><rect x="548" y="257" width="1" height="3" fill="#b4b4b4"/><rect x="548" y="263" width="1" height="3" fill="#b4b4b4"/><rect x="548" y="269" width="1" height="3" fill="#b4b4b4"/><rect x="548" y="275" width="1" height="3" fill="#b4b4b4"/><rect x="548" y="281" width="1" height="3" fill="#b4b4b4"/><rect x="548" y="287" width="1" height="3" fill="#b4b4b4"/><rect x="548" y="293" width="1" height="3" fill="#b4b4b4"/><rect x="548" y="299" width="1" height="3" fill="#b4b4b4"/><rect x="548" y="305" width="1" height="3" fill="#b4b4b4"/><rect x="548" y="311" width="1" height="3" fill="#b4b4b4"/><rect x="548" y="317" width="1" height="3" fill="#b4b4b4"/><rect x="548" y="323" width="1" height="3" fill="#b4b4b4"/><rect x="548" y="329" width="1" height="3" fill="#b4b4b4"/><rect x="548" y="335" width="1" height="3" fill="#b4b4b4"/><rect x="548" y="341" width="1" height="3" fill="#b4b4b4"/><rect x="548" y="347" width="1" height="3" fill="#b4b4b4"/><rect x="548" y="353" width="1" height="3" fill="#b4b4b4"/><rect x="548" y="359" width="1" height="3" fill="#b4b4b4"/><rect x="548" y="365" width="1" height="3" fill="#b4b4b4"/><rect x="548" y="371" width="1" height="3" fill="#b4b4b4"/><rect x="548" y="377" width="1" height="3" fill="#b4b4b4"/><rect x="548" y="383" width="1" height="3" fill="#b4b4b4"/><rect x="548" y="389" width="1" height="3" fill="#b4b4b4"/><rect x="548" y="395" width="1" height="3" fill="#b4b4b4"/><rect x="548" y="401" width="1" height="3" fill="#b4b4b4"/><rect x="548" y="407" width="1" height="3" fill="#b4b4b4"/><rect x="548" y="413" width="1" height="3" fill="#b4b4b4"/><rect x="548" y="419" width="1" height="3" fill="#b4b4b4"/><rect x="548" y="425" width="1" height="3" fill="#b4b4b4"/><rect x="548" y="431" width="1" height="3" fill="#b4b4b4"/><rect x="548" y="437" width="1" height="3" fill="#b4b4b4"/><rect x="548" y="443" width="1" height="3" fill="#b4b4b4"/><rect x="548" y="449" width="1" height="3" fill="#b4b4b4"/><rect x="548" y="455" width="1" height="3" fill="#b4b4b4"/><rect x="548" y="461" width="1" height="3" fill="#b4b4b4"/><rect x="548" y="467" width="1" height="3" fill="#b4b4b4"/><rect x="548" y="473" width="1" height="3" fill="#b4b4b4"/><rect x="548" y="479" width="1" height="3" fill="#b4b4b4"/><rect x="548" y="485" width="1" height="3" fill="#b4b4b4"/><rect x="548" y="491" width="1" height="3" fill="#b4b4b4"/><rect x="548" y="497" width="1" height="3" fill="#b4b4b4"/><rect x="548" y="503" width="1" height="3" fill="#b4b4b4"/><rect x="548" y="509" width="1" height="3" fill="#b4b4b4"/><rect x="548" y="515" width="1" height="3" fill="#b4b4b4"/><rect x="548" y="521" width="1" height="3" fill="#b4b4b4"/><rect x="548" y="527" width="1" height="3" fill="#b4b4b4"/><rect x="548" y="533" width="1" height="3" fill="#b4b4b4"/><rect x="548" y="539" width="1" height="3" fill="#b4b4b4"/><rect x="548" y="545" width="1" height="3" fill="#b4b4b4"/><rect x="548" y="551" width="1" height="3" fill="#b4b4b4"/><rect x="548" y="557" width="1" height="3" fill="#b4b4b4"/><rect x="548" y="563" width="1" height="3" fill="#b4b4b4"/><rect x="548" y="569" width="1" height="3" fill="#b4b4b4"/><rect x="548" y="575" width="1" height="3" fill="#b4b4b4"/><rect x="548" y="581" width="1" height="3" fill="#b4b4b4"/><rect x="548" y="587" width="1" height="3" fill="#b4b4b4"/><rect x="548" y="593" width="1" height="3" fill="#b4b4b4"/><rect x="548" y="599" width="1" height="3" fill="#b4b4b4"/><rect x="548" y="605" width="1" height="3" fill="#b4b4b4"/><rect x="548" y="611" width="1" height="3" fill="#b4b4b4"/><rect x="548" y="617" width="1" height="3" fill="#b4b4b4"/><rect x="548" y="623" width="1" height="3" fill="#b4b4b4"/><rect x="548" y="629" width="1" height="3" fill="#b4b4b4"/><rect x="548" y="635" width="1" height="3" fill="#b4b4b4"/><rect x="548" y="641" width="1" height="3" fill="#b4b4b4"/><rect x="548" y="647" width="1" height="3" fill="#b4b4b4"/><rect x="548" y="653" width="1" height="3" fill="#b4b4b4"/><rect x="548" y="659" width="1" height="3" fill="#b4b4b4"/><rect x="548" y="665" width="1" height="3" fill="#b4b4b4"/><rect x="548" y="671" width="1" height="3" fill="#b4b4b4"/><rect x="548" y="677" width="1" height="3" fill="#b4b4b4"/><rect x="548" y="683" width="1" height="3" fill="#b4b4b4"/><rect x="548" y="689" width="1" height="3" fill="#b4b4b4"/><rect x="548" y="695" width="1" height="1" fill="#b4b4b4"/><rect x="548" y="698" width="1" height="3" fill="#fff"/><rect x="632" y="103" width="1" height="1" fill="#b4b4b4"/><rect x="632" y="107" width="1" height="3" fill="#b4b4b4"/><rect x="632" y="113" width="1" height="3" fill="#b4b4b4"/><rect x="632" y="119" width="1" height="3" fill="#b4b4b4"/><rect x="632" y="125" width="1" height="3" fill="#b4b4b4"/><rect x="632" y="131" width="1" height="3" fill="#b4b4b4"/><rect x="632" y="137" width="1" height="3" fill="#b4b4b4"/><rect x="632" y="143" width="1" height="3" fill="#b4b4b4"/><rect x="632" y="149" width="1" height="3" fill="#b4b4b4"/><rect x="632" y="155" width="1" height="3" fill="#b4b4b4"/><rect x="632" y="161" width="1" height="3" fill="#b4b4b4"/><rect x="632" y="167" width="1" height="3" fill="#b4b4b4"/><rect x="632" y="173" width="1" height="3" fill="#b4b4b4"/><rect x="632" y="179" width="1" height="3" fill="#b4b4b4"/><rect x="632" y="185" width="1" height="3" fill="#b4b4b4"/><rect x="632" y="191" width="1" height="3" fill="#b4b4b4"/><rect x="632" y="197" width="1" height="3" fill="#b4b4b4"/><rect x="632" y="203" width="1" height="3" fill="#b4b4b4"/><rect x="632" y="209" width="1" height="3" fill="#b4b4b4"/><rect x="632" y="215" width="1" height="3" fill="#b4b4b4"/><rect x="632" y="221" width="1" height="3" fill="#b4b4b4"/><rect x="632" y="227" width="1" height="3" fill="#b4b4b4"/><rect x="632" y="233" width="1" height="3" fill="#b4b4b4"/><rect x="632" y="239" width="1" height="3" fill="#b4b4b4"/><rect x="632" y="245" width="1" height="3" fill="#b4b4b4"/><rect x="632" y="251" width="1" height="3" fill="#b4b4b4"/><rect x="632" y="257" width="1" height="3" fill="#b4b4b4"/><rect x="632" y="263" width="1" height="3" fill="#b4b4b4"/><rect x="632" y="269" width="1" height="3" fill="#b4b4b4"/><rect x="632" y="275" width="1" height="3" fill="#b4b4b4"/><rect x="632" y="281" width="1" height="3" fill="#b4b4b4"/><rect x="632" y="287" width="1" height="3" fill="#b4b4b4"/><rect x="632" y="293" width="1" height="3" fill="#b4b4b4"/><rect x="632" y="299" width="1" height="3" fill="#b4b4b4"/><rect x="632" y="305" width="1" height="3" fill="#b4b4b4"/><rect x="632" y="311" width="1" height="3" fill="#b4b4b4"/><rect x="632" y="317" width="1" height="3" fill="#b4b4b4"/><rect x="632" y="323" width="1" height="3" fill="#b4b4b4"/><rect x="632" y="329" width="1" height="3" fill="#b4b4b4"/><rect x="632" y="335" width="1" height="3" fill="#b4b4b4"/><rect x="632" y="341" width="1" height="3" fill="#b4b4b4"/><rect x="632" y="347" width="1" height="3" fill="#b4b4b4"/><rect x="632" y="353" width="1" height="3" fill="#b4b4b4"/><rect x="632" y="359" width="1" height="3" fill="#b4b4b4"/><rect x="632" y="365" width="1" height="3" fill="#b4b4b4"/><rect x="632" y="371" width="1" height="3" fill="#b4b4b4"/><rect x="632" y="377" width="1" height="3" fill="#b4b4b4"/><rect x="632" y="383" width="1" height="3" fill="#b4b4b4"/><rect x="632" y="389" width="1" height="3" fill="#b4b4b4"/><rect x="632" y="395" width="1" height="3" fill="#b4b4b4"/><rect x="632" y="401" width="1" height="3" fill="#b4b4b4"/><rect x="632" y="407" width="1" height="3" fill="#b4b4b4"/><rect x="632" y="413" width="1" height="3" fill="#b4b4b4"/><rect x="632" y="419" width="1" height="3" fill="#b4b4b4"/><rect x="632" y="425" width="1" height="3" fill="#b4b4b4"/><rect x="632" y="431" width="1" height="3" fill="#b4b4b4"/><rect x="632" y="437" width="1" height="3" fill="#b4b4b4"/><rect x="632" y="443" width="1" height="3" fill="#b4b4b4"/><rect x="632" y="449" width="1" height="3" fill="#b4b4b4"/><rect x="632" y="455" width="1" height="3" fill="#b4b4b4"/><rect x="632" y="461" width="1" height="3" fill="#b4b4b4"/><rect x="632" y="467" width="1" height="3" fill="#b4b4b4"/><rect x="632" y="473" width="1" height="3" fill="#b4b4b4"/><rect x="632" y="479" width="1" height="3" fill="#b4b4b4"/><rect x="632" y="485" width="1" height="3" fill="#b4b4b4"/><rect x="632" y="491" width="1" height="3" fill="#b4b4b4"/><rect x="632" y="497" width="1" height="3" fill="#b4b4b4"/><rect x="632" y="503" width="1" height="3" fill="#b4b4b4"/><rect x="632" y="509" width="1" height="3" fill="#b4b4b4"/><rect x="632" y="515" width="1" height="3" fill="#b4b4b4"/><rect x="632" y="521" width="1" height="3" fill="#b4b4b4"/><rect x="632" y="527" width="1" height="3" fill="#b4b4b4"/><rect x="632" y="533" width="1" height="3" fill="#b4b4b4"/><rect x="632" y="539" width="1" height="3" fill="#b4b4b4"/><rect x="632" y="545" width="1" height="3" fill="#b4b4b4"/><rect x="632" y="551" width="1" height="3" fill="#b4b4b4"/><rect x="632" y="557" width="1" height="3" fill="#b4b4b4"/><rect x="632" y="563" width="1" height="3" fill="#b4b4b4"/><rect x="632" y="569" width="1" height="3" fill="#b4b4b4"/><rect x="632" y="575" width="1" height="3" fill="#b4b4b4"/><rect x="632" y="581" width="1" height="3" fill="#b4b4b4"/><rect x="632" y="587" width="1" height="3" fill="#b4b4b4"/><rect x="632" y="593" width="1" height="3" fill="#b4b4b4"/><rect x="632" y="599" width="1" height="3" fill="#b4b4b4"/><rect x="632" y="605" width="1" height="3" fill="#b4b4b4"/><rect x="632" y="611" width="1" height="3" fill="#b4b4b4"/><rect x="632" y="617" width="1" height="3" fill="#b4b4b4"/><rect x="632" y="623" width="1" height="3" fill="#b4b4b4"/><rect x="632" y="629" width="1" height="3" fill="#b4b4b4"/><rect x="632" y="635" width="1" height="3" fill="#b4b4b4"/><rect x="632" y="641" width="1" height="3" fill="#b4b4b4"/><rect x="632" y="647" width="1" height="3" fill="#b4b4b4"/><rect x="632" y="653" width="1" height="3" fill="#b4b4b4"/><rect x="632" y="659" width="1" height="3" fill="#b4b4b4"/><rect x="632" y="665" width="1" height="3" fill="#b4b4b4"/><rect x="632" y="671" width="1" height="3" fill="#b4b4b4"/><rect x="632" y="677" width="1" height="3" fill="#b4b4b4"/><rect x="632" y="683" width="1" height="3" fill="#b4b4b4"/><rect x="632" y="689" width="1" height="3" fill="#b4b4b4"/><rect x="632" y="695" width="1" height="1" fill="#b4b4b4"/><rect x="632" y="698" width="1" height="3" fill="#fff"/><rect x="710" y="103" width="1" height="1" fill="#b4b4b4"/><rect x="710" y="107" width="1" height="3" fill="#b4b4b4"/><rect x="710" y="113" width="1" height="3" fill="#b4b4b4"/><rect x="710" y="119" width="1" height="3" fill="#b4b4b4"/><rect x="710" y="125" width="1" height="3" fill="#b4b4b4"/><rect x="710" y="131" width="1" height="3" fill="#b4b4b4"/><rect x="710" y="137" width="1" height="3" fill="#b4b4b4"/><rect x="710" y="143" width="1" height="3" fill="#b4b4b4"/><rect x="710" y="149" width="1" height="3" fill="#b4b4b4"/><rect x="710" y="155" width="1" height="3" fill="#b4b4b4"/><rect x="710" y="161" width="1" height="3" fill="#b4b4b4"/><rect x="710" y="167" width="1" height="3" fill="#b4b4b4"/><rect x="710" y="173" width="1" height="3" fill="#b4b4b4"/><rect x="710" y="179" width="1" height="3" fill="#b4b4b4"/><rect x="710" y="185" width="1" height="3" fill="#b4b4b4"/><rect x="710" y="191" width="1" height="3" fill="#b4b4b4"/><rect x="710" y="197" width="1" height="3" fill="#b4b4b4"/><rect x="710" y="203" width="1" height="3" fill="#b4b4b4"/><rect x="710" y="209" width="1" height="3" fill="#b4b4b4"/><rect x="710" y="215" width="1" height="3" fill="#b4b4b4"/><rect x="710" y="221" width="1" height="3" fill="#b4b4b4"/><rect x="710" y="227" width="1" height="3" fill="#b4b4b4"/><rect x="710" y="233" width="1" height="3" fill="#b4b4b4"/><rect x="710" y="239" width="1" height="3" fill="#b4b4b4"/><rect x="710" y="245" width="1" height="3" fill="#b4b4b4"/><rect x="710" y="251" width="1" height="3" fill="#b4b4b4"/><rect x="710" y="257" width="1" height="3" fill="#b4b4b4"/><rect x="710" y="263" width="1" height="3" fill="#b4b4b4"/><rect x="710" y="269" width="1" height="3" fill="#b4b4b4"/><rect x="710" y="275" width="1" height="3" fill="#b4b4b4"/><rect x="710" y="281" width="1" height="3" fill="#b4b4b4"/><rect x="710" y="287" width="1" height="3" fill="#b4b4b4"/><rect x="710" y="293" width="1" height="3" fill="#b4b4b4"/><rect x="710" y="299" width="1" height="3" fill="#b4b4b4"/><rect x="710" y="305" width="1" height="3" fill="#b4b4b4"/><rect x="710" y="311" width="1" height="3" fill="#b4b4b4"/><rect x="710" y="317" width="1" height="3" fill="#b4b4b4"/><rect x="710" y="323" width="1" height="3" fill="#b4b4b4"/><rect x="710" y="329" width="1" height="3" fill="#b4b4b4"/><rect x="710" y="335" width="1" height="3" fill="#b4b4b4"/><rect x="710" y="341" width="1" height="3" fill="#b4b4b4"/><rect x="710" y="347" width="1" height="3" fill="#b4b4b4"/><rect x="710" y="353" width="1" height="3" fill="#b4b4b4"/><rect x="710" y="359" width="1" height="3" fill="#b4b4b4"/><rect x="710" y="365" width="1" height="3" fill="#b4b4b4"/><rect x="710" y="371" width="1" height="3" fill="#b4b4b4"/><rect x="710" y="377" width="1" height="3" fill="#b4b4b4"/><rect x="710" y="383" width="1" height="3" fill="#b4b4b4"/><rect x="710" y="389" width="1" height="3" fill="#b4b4b4"/><rect x="710" y="395" width="1" height="3" fill="#b4b4b4"/><rect x="710" y="401" width="1" height="3" fill="#b4b4b4"/><rect x="710" y="407" width="1" height="3" fill="#b4b4b4"/><rect x="710" y="413" width="1" height="3" fill="#b4b4b4"/><rect x="710" y="419" width="1" height="3" fill="#b4b4b4"/><rect x="710" y="425" width="1" height="3" fill="#b4b4b4"/><rect x="710" y="431" width="1" height="3" fill="#b4b4b4"/><rect x="710" y="437" width="1" height="3" fill="#b4b4b4"/><rect x="710" y="443" width="1" height="3" fill="#b4b4b4"/><rect x="710" y="449" width="1" height="3" fill="#b4b4b4"/><rect x="710" y="455" width="1" height="3" fill="#b4b4b4"/><rect x="710" y="461" width="1" height="3" fill="#b4b4b4"/><rect x="710" y="467" width="1" height="3" fill="#b4b4b4"/><rect x="710" y="473" width="1" height="3" fill="#b4b4b4"/><rect x="710" y="479" width="1" height="3" fill="#b4b4b4"/><rect x="710" y="485" width="1" height="3" fill="#b4b4b4"/><rect x="710" y="491" width="1" height="3" fill="#b4b4b4"/><rect x="710" y="497" width="1" height="3" fill="#b4b4b4"/><rect x="710" y="503" width="1" height="3" fill="#b4b4b4"/><rect x="710" y="509" width="1" height="3" fill="#b4b4b4"/><rect x="710" y="515" width="1" height="3" fill="#b4b4b4"/><rect x="710" y="521" width="1" height="3" fill="#b4b4b4"/><rect x="710" y="527" width="1" height="3" fill="#b4b4b4"/><rect x="710" y="533" width="1" height="3" fill="#b4b4b4"/><rect x="710" y="539" width="1" height="3" fill="#b4b4b4"/><rect x="710" y="545" width="1" height="3" fill="#b4b4b4"/><rect x="710" y="551" width="1" height="3" fill="#b4b4b4"/><rect x="710" y="557" width="1" height="3" fill="#b4b4b4"/><rect x="710" y="563" width="1" height="3" fill="#b4b4b4"/><rect x="710" y="569" width="1" height="3" fill="#b4b4b4"/><rect x="710" y="575" width="1" height="3" fill="#b4b4b4"/><rect x="710" y="581" width="1" height="3" fill="#b4b4b4"/><rect x="710" y="587" width="1" height="3" fill="#b4b4b4"/><rect x="710" y="593" width="1" height="3" fill="#b4b4b4"/><rect x="710" y="599" width="1" height="3" fill="#b4b4b4"/><rect x="710" y="605" width="1" height="3" fill="#b4b4b4"/><rect x="710" y="611" width="1" height="3" fill="#b4b4b4"/><rect x="710" y="617" width="1" height="3" fill="#b4b4b4"/><rect x="710" y="623" width="1" height="3" fill="#b4b4b4"/><rect x="710" y="629" width="1" height="3" fill="#b4b4b4"/><rect x="710" y="635" width="1" height="3" fill="#b4b4b4"/><rect x="710" y="641" width="1" height="3" fill="#b4b4b4"/><rect x="710" y="647" width="1" height="3" fill="#b4b4b4"/><rect x="710" y="653" width="1" height="3" fill="#b4b4b4"/><rect x="710" y="659" width="1" height="3" fill="#b4b4b4"/><rect x="710" y="665" width="1" height="3" fill="#b4b4b4"/><rect x="710" y="671" width="1" height="3" fill="#b4b4b4"/><rect x="710" y="677" width="1" height="3" fill="#b4b4b4"/><rect x="710" y="683" width="1" height="3" fill="#b4b4b4"/><rect x="710" y="689" width="1" height="3" fill="#b4b4b4"/><rect x="710" y="695" width="1" height="1" fill="#b4b4b4"/><rect x="710" y="698" width="1" height="3" fill="#fff"/><rect x="794" y="103" width="1" height="1" fill="#b4b4b4"/><rect x="794" y="107" width="1" height="3" fill="#b4b4b4"/><rect x="794" y="113" width="1" height="3" fill="#b4b4b4"/><rect x="794" y="119" width="1" height="3" fill="#b4b4b4"/><rect x="794" y="125" width="1" height="3" fill="#b4b4b4"/><rect x="794" y="131" width="1" height="3" fill="#b4b4b4"/><rect x="794" y="137" width="1" height="3" fill="#b4b4b4"/><rect x="794" y="143" width="1" height="3" fill="#b4b4b4"/><rect x="794" y="149" width="1" height="3" fill="#b4b4b4"/><rect x="794" y="155" width="1" height="3" fill="#b4b4b4"/><rect x="794" y="161" width="1" height="3" fill="#b4b4b4"/><rect x="794" y="167" width="1" height="3" fill="#b4b4b4"/><rect x="794" y="173" width="1" height="3" fill="#b4b4b4"/><rect x="794" y="179" width="1" height="3" fill="#b4b4b4"/><rect x="794" y="185" width="1" height="3" fill="#b4b4b4"/><rect x="794" y="191" width="1" height="3" fill="#b4b4b4"/><rect x="794" y="197" width="1" height="3" fill="#b4b4b4"/><rect x="794" y="203" width="1" height="3" fill="#b4b4b4"/><rect x="794" y="209" width="1" height="3" fill="#b4b4b4"/><rect x="794" y="215" width="1" height="3" fill="#b4b4b4"/><rect x="794" y="221" width="1" height="3" fill="#b4b4b4"/><rect x="794" y="227" width="1" height="3" fill="#b4b4b4"/><rect x="794" y="233" width="1" height="3" fill="#b4b4b4"/><rect x="794" y="239" width="1" height="3" fill="#b4b4b4"/><rect x="794" y="245" width="1" height="3" fill="#b4b4b4"/><rect x="794" y="251" width="1" height="3" fill="#b4b4b4"/><rect x="794" y="257" width="1" height="3" fill="#b4b4b4"/><rect x="794" y="263" width="1" height="3" fill="#b4b4b4"/><rect x="794" y="269" width="1" height="3" fill="#b4b4b4"/><rect x="794" y="275" width="1" height="3" fill="#b4b4b4"/><rect x="794" y="281" width="1" height="3" fill="#b4b4b4"/><rect x="794" y="287" width="1" height="3" fill="#b4b4b4"/><rect x="794" y="293" width="1" height="3" fill="#b4b4b4"/><rect x="794" y="299" width="1" height="3" fill="#b4b4b4"/><rect x="794" y="305" width="1" height="3" fill="#b4b4b4"/><rect x="794" y="311" width="1" height="3" fill="#b4b4b4"/><rect x="794" y="317" width="1" height="3" fill="#b4b4b4"/><rect x="794" y="323" width="1" height="3" fill="#b4b4b4"/><rect x="794" y="329" width="1" height="3" fill="#b4b4b4"/><rect x="794" y="335" width="1" height="3" fill="#b4b4b4"/><rect x="794" y="341" width="1" height="3" fill="#b4b4b4"/><rect x="794" y="347" width="1" height="3" fill="#b4b4b4"/><rect x="794" y="353" width="1" height="3" fill="#b4b4b4"/><rect x="794" y="359" width="1" height="3" fill="#b4b4b4"/><rect x="794" y="365" width="1" height="3" fill="#b4b4b4"/><rect x="794" y="371" width="1" height="3" fill="#b4b4b4"/><rect x="794" y="377" width="1" height="3" fill="#b4b4b4"/><rect x="794" y="383" width="1" height="3" fill="#b4b4b4"/><rect x="794" y="389" width="1" height="3" fill="#b4b4b4"/><rect x="794" y="395" width="1" height="3" fill="#b4b4b4"/><rect x="794" y="401" width="1" height="3" fill="#b4b4b4"/><rect x="794" y="407" width="1" height="3" fill="#b4b4b4"/><rect x="794" y="413" width="1" height="3" fill="#b4b4b4"/><rect x="794" y="419" width="1" height="3" fill="#b4b4b4"/><rect x="794" y="425" width="1" height="3" fill="#b4b4b4"/><rect x="794" y="431" width="1" height="3" fill="#b4b4b4"/><rect x="794" y="437" width="1" height="3" fill="#b4b4b4"/><rect x="794" y="443" width="1" height="3" fill="#b4b4b4"/><rect x="794" y="449" width="1" height="3" fill="#b4b4b4"/><rect x="794" y="455" width="1" height="3" fill="#b4b4b4"/><rect x="794" y="461" width="1" height="3" fill="#b4b4b4"/><rect x="794" y="467" width="1" height="3" fill="#b4b4b4"/><rect x="794" y="473" width="1" height="3" fill="#b4b4b4"/><rect x="794" y="479" width="1" height="3" fill="#b4b4b4"/><rect x="794" y="485" width="1" height="3" fill="#b4b4b4"/><rect x="794" y="491" width="1" height="3" fill="#b4b4b4"/><rect x="794" y="497" width="1" height="3" fill="#b4b4b4"/><rect x="794" y="503" width="1" height="3" fill="#b4b4b4"/><rect x="794" y="509" width="1" height="3" fill="#b4b4b4"/><rect x="794" y="515" width="1" height="3" fill="#b4b4b4"/><rect x="794" y="521" width="1" height="3" fill="#b4b4b4"/><rect x="794" y="527" width="1" height="3" fill="#b4b4b4"/><rect x="794" y="533" width="1" height="3" fill="#b4b4b4"/><rect x="794" y="539" width="1" height="3" fill="#b4b4b4"/><rect x="794" y="545" width="1" height="3" fill="#b4b4b4"/><rect x="794" y="551" width="1" height="3" fill="#b4b4b4"/><rect x="794" y="557" width="1" height="3" fill="#b4b4b4"/><rect x="794" y="563" width="1" height="3" fill="#b4b4b4"/><rect x="794" y="569" width="1" height="3" fill="#b4b4b4"/><rect x="794" y="575" width="1" height="3" fill="#b4b4b4"/><rect x="794" y="581" width="1" height="3" fill="#b4b4b4"/><rect x="794" y="587" width="1" height="3" fill="#b4b4b4"/><rect x="794" y="593" width="1" height="3" fill="#b4b4b4"/><rect x="794" y="599" width="1" height="3" fill="#b4b4b4"/><rect x="794" y="605" width="1" height="3" fill="#b4b4b4"/><rect x="794" y="611" width="1" height="3" fill="#b4b4b4"/><rect x="794" y="617" width="1" height="3" fill="#b4b4b4"/><rect x="794" y="623" width="1" height="3" fill="#b4b4b4"/><rect x="794" y="629" width="1" height="3" fill="#b4b4b4"/><rect x="794" y="635" width="1" height="3" fill="#b4b4b4"/><rect x="794" y="641" width="1" height="3" fill="#b4b4b4"/><rect x="794" y="647" width="1" height="3" fill="#b4b4b4"/><rect x="794" y="653" width="1" height="3" fill="#b4b4b4"/><rect x="794" y="659" width="1" height="3" fill="#b4b4b4"/><rect x="794" y="665" width="1" height="3" fill="#b4b4b4"/><rect x="794" y="671" width="1" height="3" fill="#b4b4b4"/><rect x="794" y="677" width="1" height="3" fill="#b4b4b4"/><rect x="794" y="683" width="1" height="3" fill="#b4b4b4"/><rect x="794" y="689" width="1" height="3" fill="#b4b4b4"/><rect x="794" y="695" width="1" height="1" fill="#b4b4b4"/><rect x="794" y="698" width="1" height="3" fill="#fff"/><rect x="884" y="103" width="1" height="1" fill="#b4b4b4"/><rect x="884" y="107" width="1" height="3" fill="#b4b4b4"/><rect x="884" y="113" width="1" height="3" fill="#b4b4b4"/><rect x="884" y="119" width="1" height="3" fill="#b4b4b4"/><rect x="884" y="125" width="1" height="3" fill="#b4b4b4"/><rect x="884" y="131" width="1" height="3" fill="#b4b4b4"/><rect x="884" y="137" width="1" height="3" fill="#b4b4b4"/><rect x="884" y="143" width="1" height="3" fill="#b4b4b4"/><rect x="884" y="149" width="1" height="3" fill="#b4b4b4"/><rect x="884" y="155" width="1" height="3" fill="#b4b4b4"/><rect x="884" y="161" width="1" height="3" fill="#b4b4b4"/><rect x="884" y="167" width="1" height="3" fill="#b4b4b4"/><rect x="884" y="173" width="1" height="3" fill="#b4b4b4"/><rect x="884" y="179" width="1" height="3" fill="#b4b4b4"/><rect x="884" y="185" width="1" height="3" fill="#b4b4b4"/><rect x="884" y="191" width="1" height="3" fill="#b4b4b4"/><rect x="884" y="197" width="1" height="3" fill="#b4b4b4"/><rect x="884" y="203" width="1" height="3" fill="#b4b4b4"/><rect x="884" y="209" width="1" height="3" fill="#b4b4b4"/><rect x="884" y="215" width="1" height="3" fill="#b4b4b4"/><rect x="884" y="221" width="1" height="3" fill="#b4b4b4"/><rect x="884" y="227" width="1" height="3" fill="#b4b4b4"/><rect x="884" y="233" width="1" height="3" fill="#b4b4b4"/><rect x="884" y="239" width="1" height="3" fill="#b4b4b4"/><rect x="884" y="245" width="1" height="3" fill="#b4b4b4"/><rect x="884" y="251" width="1" height="3" fill="#b4b4b4"/><rect x="884" y="257" width="1" height="3" fill="#b4b4b4"/><rect x="884" y="263" width="1" height="3" fill="#b4b4b4"/><rect x="884" y="269" width="1" height="3" fill="#b4b4b4"/><rect x="884" y="275" width="1" height="3" fill="#b4b4b4"/><rect x="884" y="281" width="1" height="3" fill="#b4b4b4"/><rect x="884" y="287" width="1" height="3" fill="#b4b4b4"/><rect x="884" y="293" width="1" height="3" fill="#b4b4b4"/><rect x="884" y="299" width="1" height="3" fill="#b4b4b4"/><rect x="884" y="305" width="1" height="3" fill="#b4b4b4"/><rect x="884" y="311" width="1" height="3" fill="#b4b4b4"/><rect x="884" y="317" width="1" height="3" fill="#b4b4b4"/><rect x="884" y="323" width="1" height="3" fill="#b4b4b4"/><rect x="884" y="329" width="1" height="3" fill="#b4b4b4"/><rect x="884" y="335" width="1" height="3" fill="#b4b4b4"/><rect x="884" y="341" width="1" height="3" fill="#b4b4b4"/><rect x="884" y="347" width="1" height="3" fill="#b4b4b4"/><rect x="884" y="353" width="1" height="3" fill="#b4b4b4"/><rect x="884" y="359" width="1" height="3" fill="#b4b4b4"/><rect x="884" y="365" width="1" height="3" fill="#b4b4b4"/><rect x="884" y="371" width="1" height="3" fill="#b4b4b4"/><rect x="884" y="377" width="1" height="3" fill="#b4b4b4"/><rect x="884" y="383" width="1" height="3" fill="#b4b4b4"/><rect x="884" y="389" width="1" height="3" fill="#b4b4b4"/><rect x="884" y="395" width="1" height="3" fill="#b4b4b4"/><rect x="884" y="401" width="1" height="3" fill="#b4b4b4"/><rect x="884" y="407" width="1" height="3" fill="#b4b4b4"/><rect x="884" y="413" width="1" height="3" fill="#b4b4b4"/><rect x="884" y="419" width="1" height="3" fill="#b4b4b4"/><rect x="884" y="425" width="1" height="3" fill="#b4b4b4"/><rect x="884" y="431" width="1" height="3" fill="#b4b4b4"/><rect x="884" y="437" width="1" height="3" fill="#b4b4b4"/><rect x="884" y="443" width="1" height="3" fill="#b4b4b4"/><rect x="884" y="449" width="1" height="3" fill="#b4b4b4"/><rect x="884" y="455" width="1" height="3" fill="#b4b4b4"/><rect x="884" y="461" width="1" height="3" fill="#b4b4b4"/><rect x="884" y="467" width="1" height="3" fill="#b4b4b4"/><rect x="884" y="473" width="1" height="3" fill="#b4b4b4"/><rect x="884" y="479" width="1" height="3" fill="#b4b4b4"/><rect x="884" y="485" width="1" height="3" fill="#b4b4b4"/><rect x="884" y="491" width="1" height="3" fill="#b4b4b4"/><rect x="884" y="497" width="1" height="3" fill="#b4b4b4"/><rect x="884" y="503" width="1" height="3" fill="#b4b4b4"/><rect x="884" y="509" width="1" height="3" fill="#b4b4b4"/><rect x="884" y="515" width="1" height="3" fill="#b4b4b4"/><rect x="884" y="521" width="1" height="3" fill="#b4b4b4"/><rect x="884" y="527" width="1" height="3" fill="#b4b4b4"/><rect x="884" y="533" width="1" height="3" fill="#b4b4b4"/><rect x="884" y="539" width="1" height="3" fill="#b4b4b4"/><rect x="884" y="545" width="1" height="3" fill="#b4b4b4"/><rect x="884" y="551" width="1" height="3" fill="#b4b4b4"/><rect x="884" y="557" width="1" height="3" fill="#b4b4b4"/><rect x="884" y="563" width="1" height="3" fill="#b4b4b4"/><rect x="884" y="569" width="1" height="3" fill="#b4b4b4"/><rect x="884" y="575" width="1" height="3" fill="#b4b4b4"/><rect x="884" y="581" width="1" height="3" fill="#b4b4b4"/><rect x="884" y="587" width="1" height="3" fill="#b4b4b4"/><rect x="884" y="593" width="1" height="3" fill="#b4b4b4"/><rect x="884" y="599" width="1" height="3" fill="#b4b4b4"/><rect x="884" y="605" width="1" height="3" fill="#b4b4b4"/><rect x="884" y="611" width="1" height="3" fill="#b4b4b4"/><rect x="884" y="617" width="1" height="3" fill="#b4b4b4"/><rect x="884" y="623" width="1" height="3" fill="#b4b4b4"/><rect x="884" y="629" width="1" height="3" fill="#b4b4b4"/><rect x="884" y="635" width="1" height="3" fill="#b4b4b4"/><rect x="884" y="641" width="1" height="3" fill="#b4b4b4"/><rect x="884" y="647" width="1" height="3" fill="#b4b4b4"/><rect x="884" y="653" width="1" height="3" fill="#b4b4b4"/><rect x="884" y="659" width="1" height="3" fill="#b4b4b4"/><rect x="884" y="665" width="1" height="3" fill="#b4b4b4"/><rect x="884" y="671" width="1" height="3" fill="#b4b4b4"/><rect x="884" y="677" width="1" height="3" fill="#b4b4b4"/><rect x="884" y="683" width="1" height="3" fill="#b4b4b4"/><rect x="884" y="689" width="1" height="3" fill="#b4b4b4"/><rect x="884" y="695" width="1" height="1" fill="#b4b4b4"/><rect x="884" y="698" width="1" height="3" fill="#fff"/><rect x="43" y="696" width="2" height="1" fill="#b4b4b4"/><rect x="53" y="696" width="2" height="1" fill="#b4b4b4"/><rect x="63" y="696" width="2" height="1" fill="#b4b4b4"/><rect x="73" y="696" width="2" height="1" fill="#b4b4b4"/><rect x="83" y="696" width="2" height="1" fill="#b4b4b4"/><rect x="93" y="696" width="2" height="1" fill="#b4b4b4"/><rect x="103" y="696" width="2" height="1" fill="#b4b4b4"/><rect x="113" y="696" width="2" height="1" fill="#b4b4b4"/><rect x="123" y="696" width="2" height="1" fill="#b4b4b4"/><rect x="133" y="696" width="2" height="1" fill="#b4b4b4"/><rect x="143" y="696" width="2" height="1" fill="#b4b4b4"/><rect x="153" y="696" width="2" height="1" fill="#b4b4b4"/><rect x="163" y="696" width="2" height="1" fill="#b4b4b4"/><rect x="173" y="696" width="2" height="1" fill="#b4b4b4"/><rect x="183" y="696" width="2" height="1" fill="#b4b4b4"/><rect x="193" y="696" width="2" height="1" fill="#b4b4b4"/><rect x="203" y="696" width="2" height="1" fill="#b4b4b4"/><rect x="213" y="696" width="2" height="1" fill="#b4b4b4"/><rect x="223" y="696" width="2" height="1" fill="#b4b4b4"/><rect x="233" y="696" width="2" height="1" fill="#b4b4b4"/><rect x="243" y="696" width="2" height="1" fill="#b4b4b4"/><rect x="253" y="696" width="2" height="1" fill="#b4b4b4"/><rect x="263" y="696" width="2" height="1" fill="#b4b4b4"/><rect x="273" y="696" width="2" height="1" fill="#b4b4b4"/><rect x="283" y="696" width="2" height="1" fill="#b4b4b4"/><rect x="293" y="696" width="2" height="1" fill="#b4b4b4"/><rect x="303" y="696" width="2" height="1" fill="#b4b4b4"/><rect x="313" y="696" width="2" height="1" fill="#b4b4b4"/><rect x="323" y="696" width="2" height="1" fill="#b4b4b4"/><rect x="333" y="696" width="2" height="1" fill="#b4b4b4"/><rect x="343" y="696" width="2" height="1" fill="#b4b4b4"/><rect x="353" y="696" width="2" height="1" fill="#b4b4b4"/><rect x="363" y="696" width="2" height="1" fill="#b4b4b4"/><rect x="373" y="696" width="2" height="1" fill="#b4b4b4"/><rect x="383" y="696" width="2" height="1" fill="#b4b4b4"/><rect x="393" y="696" width="2" height="1" fill="#b4b4b4"/><rect x="403" y="696" width="2" height="1" fill="#b4b4b4"/><rect x="413" y="696" width="2" height="1" fill="#b4b4b4"/><rect x="423" y="696" width="2" height="1" fill="#b4b4b4"/><rect x="433" y="696" width="2" height="1" fill="#b4b4b4"/><rect x="443" y="696" width="2" height="1" fill="#b4b4b4"/><rect x="453" y="696" width="2" height="1" fill="#b4b4b4"/><rect x="463" y="696" width="2" height="1" fill="#b4b4b4"/><rect x="473" y="696" width="2" height="1" fill="#b4b4b4"/><rect x="483" y="696" width="2" height="1" fill="#b4b4b4"/><rect x="493" y="696" width="2" height="1" fill="#b4b4b4"/><rect x="503" y="696" width="2" height="1" fill="#b4b4b4"/><rect x="513" y="696" width="2" height="1" fill="#b4b4b4"/><rect x="523" y="696" width="2" height="1" fill="#b4b4b4"/><rect x="533" y="696" width="2" height="1" fill="#b4b4b4"/><rect x="543" y="696" width="2" height="1" fill="#b4b4b4"/><rect x="553" y="696" width="2" height="1" fill="#b4b4b4"/><rect x="563" y="696" width="2" height="1" fill="#b4b4b4"/><rect x="573" y="696" width="2" height="1" fill="#b4b4b4"/><rect x="583" y="696" width="2" height="1" fill="#b4b4b4"/><rect x="593" y="696" width="2" height="1" fill="#b4b4b4"/><rect x="603" y="696" width="2" height="1" fill="#b4b4b4"/><rect x="613" y="696" width="2" height="1" fill="#b4b4b4"/><rect x="623" y="696" width="2" height="1" fill="#b4b4b4"/><rect x="633" y="696" width="2" height="1" fill="#b4b4b4"/><rect x="643" y="696" width="2" height="1" fill="#b4b4b4"/><rect x="653" y="696" width="2" height="1" fill="#b4b4b4"/><rect x="663" y="696" width="2" height="1" fill="#b4b4b4"/><rect x="673" y="696" width="2" height="1" fill="#b4b4b4"/><rect x="683" y="696" width="2" height="1" fill="#b4b4b4"/><rect x="693" y="696" width="2" height="1" fill="#b4b4b4"/><rect x="703" y="696" width="2" height="1" fill="#b4b4b4"/><rect x="713" y="696" width="2" height="1" fill="#b4b4b4"/><rect x="723" y="696" width="2" height="1" fill="#b4b4b4"/><rect x="733" y="696" width="2" height="1" fill="#b4b4b4"/><rect x="743" y="696" width="2" height="1" fill="#b4b4b4"/><rect x="753" y="696" width="2" height="1" fill="#b4b4b4"/><rect x="763" y="696" width="2" height="1" fill="#b4b4b4"/><rect x="773" y="696" width="2" height="1" fill="#b4b4b4"/><rect x="783" y="696" width="2" height="1" fill="#b4b4b4"/><rect x="793" y="696" width="2" height="1" fill="#b4b4b4"/><rect x="803" y="696" width="2" height="1" fill="#b4b4b4"/><rect x="813" y="696" width="2" height="1" fill="#b4b4b4"/><rect x="823" y="696" width="2" height="1" fill="#b4b4b4"/><rect x="833" y="696" width="2" height="1" fill="#b4b4b4"/><rect x="843" y="696" width="2" height="1" fill="#b4b4b4"/><rect x="853" y="696" width="2" height="1" fill="#b4b4b4"/><rect x="863" y="696" width="2" height="1" fill="#b4b4b4"/><rect x="873" y="696" width="2" height="1" fill="#b4b4b4"/><rect x="883" y="696" width="2" height="1" fill="#b4b4b4"/><rect x="893" y="696" width="2" height="1" fill="#b4b4b4"/><rect x="903" y="696" width="2" height="1" fill="#b4b4b4"/><rect x="913" y="696" width="2" height="1" fill="#b4b4b4"/><rect x="923" y="696" width="2" height="1" fill="#b4b4b4"/><rect x="35" y="580" width="1" height="29" fill="#ffff00"/><rect x="36" y="580" width="2" height="1" fill="#ffff00"/><rect x="33" y="608" width="2" height="1" fill="#ffff00"/><rect x="41" y="557" width="1" height="27" fill="#ffff00"/><rect x="42" y="558" width="2" height="1" fill="#ffff00"/><rect x="39" y="583" width="2" height="1" fill="#ffff00"/><rect x="47" y="555" width="1" height="18" fill="#ffff00"/><rect x="48" y="570" width="2" height="1" fill="#ffff00"/><rect x="45" y="558" width="2" height="1" fill="#ffff00"/><rect x="53" y="553" width="1" height="17" fill="#ffff00"/><rect x="54" y="559" width="2" height="1" fill="#ffff00"/><rect x="51" y="566" width="2" height="1" fill="#ffff00"/><rect x="59" y="564" width="1" height="9" fill="#ffff00"/><rect x="60" y="565" width="2" height="1" fill="#ffff00"/><rect x="57" y="567" width="2" height="1" fill="#ffff00"/><rect x="65" y="560" width="1" height="13" fill="#ffff00"/><rect x="66" y="569" width="2" height="1" fill="#ffff00"/><rect x="63" y="560" width="2" height="1" fill="#ffff00"/><rect x="71" y="565" width="1" height="16" fill="#ffff00"/><rect x="72" y="579" width="2" height="1" fill="#ffff00"/><rect x="69" y="568" width="2" height="1" fill="#ffff00"/><rect x="77" y="562" width="1" height="18" fill="#ffff00"/><rect x="78" y="572" width="2" height="1" fill="#ffff00"/><rect x="75" y="579" width="2" height="1" fill="#ffff00"/><rect x="83" y="564" width="1" height="15" fill="#ffff00"/><rect x="84" y="570" width="2" height="1" fill="#ffff00"/><rect x="81" y="570" width="2" height="1" fill="#ffff00"/><rect x="89" y="564" width="1" height="54" fill="#ffff00"/><rect x="90" y="571" width="2" height="1" fill="#ffff00"/><rect x="87" y="565" width="2" height="1" fill="#ffff00"/><rect x="95" y="562" width="1" height="19" fill="#ffff00"/><rect x="96" y="563" width="2" height="1" fill="#ffff00"/><rect x="93" y="571" width="2" height="1" fill="#ffff00"/><rect x="101" y="575" width="1" height="35" fill="#ffff00"/><rect x="102" y="609" width="2" height="1" fill="#ffff00"/><rect x="99" y="575" width="2" height="1" fill="#ffff00"/><rect x="107" y="594" width="1" height="43" fill="#ffff00"/><rect x="108" y="629" width="2" height="1" fill="#ffff00"/><rect x="105" y="598" width="2" height="1" fill="#ffff00"/><rect x="113" y="624" width="1" height="12" fill="#ffff00"/><rect x="114" y="626" width="2" height="1" fill="#ffff00"/><rect x="111" y="631" width="2" height="1" fill="#ffff00"/><rect x="119" y="621" width="1" height="22" fill="#ffff00"/><rect x="120" y="642" width="2" height="1" fill="#ffff00"/><rect x="117" y="622" width="2" height="1" fill="#ffff00"/><rect x="125" y="610" width="1" height="17" fill="#ffff00"/><rect x="126" y="611" width="2" height="1" fill="#ffff00"/><rect x="123" y="626" width="2" height="1" fill="#ffff00"/><rect x="131" y="601" width="1" height="28" fill="#ffff00"/><rect x="132" y="618" width="2" height="1" fill="#ffff00"/><rect x="129" y="604" width="2" height="1" fill="#ffff00"/><rect x="137" y="617" width="1" height="17" fill="#ffff00"/><rect x="138" y="620" width="2" height="1" fill="#ffff00"/><rect x="135" y="620" width="2" height="1" fill="#ffff00"/><rect x="143" y="593" width="1" height="29" fill="#ffff00"/><rect x="144" y="595" width="2" height="1" fill="#ffff00"/><rect x="141" y="621" width="2" height="1" fill="#ffff00"/><rect x="149" y="590" width="1" height="11" fill="#ffff00"/><rect x="150" y="596" width="2" height="1" fill="#ffff00"/><rect x="147" y="596" width="2" height="1" fill="#ffff00"/><rect x="155" y="615" width="1" height="12" fill="#ffff00"/><rect x="156" y="622" width="2" height="1" fill="#ffff00"/><rect x="153" y="615" width="2" height="1" fill="#ffff00"/><rect x="161" y="625" width="1" height="26" fill="#ffff00"/><rect x="162" y="647" width="2" height="1" fill="#ffff00"/><rect x="159" y="630" width="2" height="1" fill="#ffff00"/><rect x="167" y="644" width="1" height="27" fill="#ffff00"/><rect x="168" y="649" width="2" height="1" fill="#ffff00"/><rect x="165" y="660" width="2" height="1" fill="#ffff00"/><rect x="173" y="630" width="1" height="16" fill="#ffff00"/><rect x="174" y="641" width="2" height="1" fill="#ffff00"/><rect x="171" y="640" width="2" height="1" fill="#ffff00"/><rect x="179" y="639" width="1" height="21" fill="#ffff00"/><rect x="180" y="657" width="2" height="1" fill="#ffff00"/><rect x="177" y="648" width="2" height="1" fill="#ffff00"/><rect x="185" y="618" width="1" height="21" fill="#ffff00"/><rect x="186" y="618" width="2" height="1" fill="#ffff00"/><rect x="183" y="638" width="2" height="1" fill="#ffff00"/><rect x="191" y="600" width="1" height="17" fill="#ffff00"/><rect x="192" y="601" width="2" height="1" fill="#ffff00"/><rect x="189" y="616" width="2" height="1" fill="#ffff00"/><rect x="197" y="563" width="1" height="32" fill="#ffff00"/><rect x="198" y="563" width="2" height="1" fill="#ffff00"/><rect x="195" y="593" width="2" height="1" fill="#ffff00"/><rect x="203" y="560" width="1" height="18" fill="#ffff00"/><rect x="204" y="564" width="2" height="1" fill="#ffff00"/><rect x="201" y="572" width="2" height="1" fill="#ffff00"/><rect x="209" y="556" width="1" height="14" fill="#ffff00"/><rect x="210" y="558" width="2" height="1" fill="#ffff00"/><rect x="207" y="562" width="2" height="1" fill="#ffff00"/><rect x="215" y="502" width="1" height="40" fill="#ffff00"/><rect x="216" y="511" width="2" height="1" fill="#ffff00"/><rect x="213" y="541" width="2" height="1" fill="#ffff00"/><rect x="221" y="502" width="1" height="18" fill="#ffff00"/><rect x="222" y="505" width="2" height="1" fill="#ffff00"/><rect x="219" y="517" width="2" height="1" fill="#ffff00"/><rect x="227" y="482" width="1" height="40" fill="#ffff00"/><rect x="228" y="520" width="2" height="1" fill="#ffff00"/><rect x="225" y="492" width="2" height="1" fill="#ffff00"/><rect x="233" y="516" width="1" height="20" fill="#ffff00"/><rect x="234" y="517" width="2" height="1" fill="#ffff00"/><rect x="231" y="521" width="2" height="1" fill="#ffff00"/><rect x="239" y="499" width="1" height="19" fill="#ffff00"/><rect x="240" y="516" width="2" height="1" fill="#ffff00"/><rect x="237" y="504" width="2" height="1" fill="#ffff00"/><rect x="245" y="495" width="1" height="32" fill="#ffff00"/><rect x="246" y="524" width="2" height="1" fill="#ffff00"/><rect x="243" y="509" width="2" height="1" fill="#ffff00"/><rect x="251" y="518" width="1" height="29" fill="#ffff00"/><rect x="252" y="522" width="2" height="1" fill="#ffff00"/><rect x="249" y="538" width="2" height="1" fill="#ffff00"/><rect x="257" y="508" width="1" height="11" fill="#ffff00"/><rect x="258" y="513" width="2" height="1" fill="#ffff00"/><rect x="255" y="515" width="2" height="1" fill="#ffff00"/><rect x="263" y="511" width="1" height="16" fill="#ffff00"/><rect x="264" y="515" width="2" height="1" fill="#ffff00"/><rect x="261" y="512" width="2" height="1" fill="#ffff00"/><rect x="269" y="488" width="1" height="21" fill="#ffff00"/><rect x="270" y="488" width="2" height="1" fill="#ffff00"/><rect x="267" y="508" width="2" height="1" fill="#ffff00"/><rect x="275" y="457" width="1" height="19" fill="#ffff00"/><rect x="276" y="461" width="2" height="1" fill="#ffff00"/><rect x="273" y="475" width="2" height="1" fill="#ffff00"/><rect x="281" y="454" width="1" height="12" fill="#ffff00"/><rect x="282" y="465" width="2" height="1" fill="#ffff00"/><rect x="279" y="458" width="2" height="1" fill="#ffff00"/><rect x="287" y="462" width="1" height="9" fill="#ffff00"/><rect x="288" y="463" width="2" height="1" fill="#ffff00"/><rect x="285" y="464" width="2" height="1" fill="#ffff00"/><rect x="293" y="452" width="1" height="16" fill="#ffff00"/><rect x="294" y="467" width="2" height="1" fill="#ffff00"/><rect x="291" y="460" width="2" height="1" fill="#ffff00"/><rect x="299" y="462" width="1" height="17" fill="#ffff00"/><rect x="300" y="471" width="2" height="1" fill="#ffff00"/><rect x="297" y="462" width="2" height="1" fill="#ffff00"/><rect x="305" y="481" width="1" height="45" fill="#ffff00"/><rect x="306" y="522" width="2" height="1" fill="#ffff00"/><rect x="303" y="485" width="2" height="1" fill="#ffff00"/><rect x="311" y="510" width="1" height="19" fill="#ffff00"/><rect x="312" y="512" width="2" height="1" fill="#ffff00"/><rect x="309" y="521" width="2" height="1" fill="#ffff00"/><rect x="317" y="523" width="1" height="18" fill="#ffff00"/><rect x="318" y="540" width="2" height="1" fill="#ffff00"/><rect x="315" y="525" width="2" height="1" fill="#ffff00"/><rect x="323" y="507" width="1" height="31" fill="#ffff00"/><rect x="324" y="509" width="2" height="1" fill="#ffff00"/><rect x="321" y="536" width="2" height="1" fill="#ffff00"/><rect x="329" y="492" width="1" height="18" fill="#ffff00"/><rect x="330" y="502" width="2" height="1" fill="#ffff00"/><rect x="327" y="496" width="2" height="1" fill="#ffff00"/><rect x="335" y="489" width="1" height="27" fill="#ffff00"/><rect x="336" y="510" width="2" height="1" fill="#ffff00"/><rect x="333" y="490" width="2" height="1" fill="#ffff00"/><rect x="341" y="508" width="1" height="11" fill="#ffff00"/><rect x="342" y="512" width="2" height="1" fill="#ffff00"/><rect x="339" y="510" width="2" height="1" fill="#ffff00"/><rect x="347" y="481" width="1" height="25" fill="#ffff00"/><rect x="348" y="484" width="2" height="1" fill="#ffff00"/><rect x="345" y="505" width="2" height="1" fill="#ffff00"/><rect x="353" y="479" width="1" height="21" fill="#ffff00"/><rect x="354" y="497" width="2" height="1" fill="#ffff00"/><rect x="351" y="480" width="2" height="1" fill="#ffff00"/><rect x="359" y="472" width="1" height="15" fill="#ffff00"/><rect x="360" y="480" width="2" height="1" fill="#ffff00"/><rect x="357" y="485" width="2" height="1" fill="#ffff00"/><rect x="365" y="450" width="1" height="19" fill="#ffff00"/><rect x="366" y="454" width="2" height="1" fill="#ffff00"/><rect x="363" y="467" width="2" height="1" fill="#ffff00"/><rect x="371" y="448" width="1" height="18" fill="#ffff00"/><rect x="372" y="453" width="2" height="1" fill="#ffff00"/><rect x="369" y="458" width="2" height="1" fill="#ffff00"/><rect x="377" y="442" width="1" height="27" fill="#ffff00"/><rect x="378" y="464" width="2" height="1" fill="#ffff00"/><rect x="375" y="442" width="2" height="1" fill="#ffff00"/><rect x="383" y="482" width="1" height="68" fill="#ffff00"/><rect x="384" y="541" width="2" height="1" fill="#ffff00"/><rect x="381" y="482" width="2" height="1" fill="#ffff00"/><rect x="389" y="558" width="1" height="33" fill="#ffff00"/><rect x="390" y="573" width="2" height="1" fill="#ffff00"/><rect x="387" y="567" width="2" height="1" fill="#ffff00"/><rect x="395" y="547" width="1" height="53" fill="#ffff00"/><rect x="396" y="587" width="2" height="1" fill="#ffff00"/><rect x="393" y="560" width="2" height="1" fill="#ffff00"/><rect x="401" y="571" width="1" height="20" fill="#ffff00"/><rect x="402" y="572" width="2" height="1" fill="#ffff00"/><rect x="399" y="572" width="2" height="1" fill="#ffff00"/><rect x="407" y="605" width="1" height="33" fill="#ffff00"/><rect x="408" y="610" width="2" height="1" fill="#ffff00"/><rect x="405" y="605" width="2" height="1" fill="#ffff00"/><rect x="413" y="586" width="1" height="21" fill="#ffff00"/><rect x="414" y="586" width="2" height="1" fill="#ffff00"/><rect x="411" y="598" width="2" height="1" fill="#ffff00"/><rect x="419" y="566" width="1" height="24" fill="#ffff00"/><rect x="420" y="589" width="2" height="1" fill="#ffff00"/><rect x="417" y="580" width="2" height="1" fill="#ffff00"/><rect x="425" y="536" width="1" height="32" fill="#ffff00"/><rect x="426" y="536" width="2" height="1" fill="#ffff00"/><rect x="423" y="567" width="2" height="1" fill="#ffff00"/><rect x="431" y="523" width="1" height="25" fill="#ffff00"/><rect x="432" y="541" width="2" height="1" fill="#ffff00"/><rect x="429" y="538" width="2" height="1" fill="#ffff00"/><rect x="437" y="518" width="1" height="22" fill="#ffff00"/><rect x="438" y="537" width="2" height="1" fill="#ffff00"/><rect x="435" y="528" width="2" height="1" fill="#ffff00"/><rect x="443" y="527" width="1" height="32" fill="#ffff00"/><rect x="444" y="546" width="2" height="1" fill="#ffff00"/><rect x="441" y="537" width="2" height="1" fill="#ffff00"/><rect x="449" y="542" width="1" height="52" fill="#ffff00"/><rect x="450" y="542" width="2" height="1" fill="#ffff00"/><rect x="447" y="579" width="2" height="1" fill="#ffff00"/><rect x="455" y="529" width="1" height="16" fill="#ffff00"/><rect x="456" y="531" width="2" height="1" fill="#ffff00"/><rect x="453" y="544" width="2" height="1" fill="#ffff00"/><rect x="461" y="509" width="1" height="28" fill="#ffff00"/><rect x="462" y="516" width="2" height="1" fill="#ffff00"/><rect x="459" y="532" width="2" height="1" fill="#ffff00"/><rect x="467" y="487" width="1" height="22" fill="#ffff00"/><rect x="468" y="487" width="2" height="1" fill="#ffff00"/><rect x="465" y="508" width="2" height="1" fill="#ffff00"/><rect x="473" y="487" width="1" height="16" fill="#ffff00"/><rect x="474" y="489" width="2" height="1" fill="#ffff00"/><rect x="471" y="487" width="2" height="1" fill="#ffff00"/><rect x="479" y="464" width="1" height="25" fill="#ffff00"/><rect x="480" y="467" width="2" height="1" fill="#ffff00"/><rect x="477" y="488" width="2" height="1" fill="#ffff00"/><rect x="485" y="420" width="1" height="24" fill="#ffff00"/><rect x="486" y="433" width="2" height="1" fill="#ffff00"/><rect x="483" y="443" width="2" height="1" fill="#ffff00"/><rect x="491" y="413" width="1" height="26" fill="#ffff00"/><rect x="492" y="413" width="2" height="1" fill="#ffff00"/><rect x="489" y="434" width="2" height="1" fill="#ffff00"/><rect x="497" y="405" width="1" height="25" fill="#ffff00"/><rect x="498" y="428" width="2" height="1" fill="#ffff00"/><rect x="495" y="411" width="2" height="1" fill="#ffff00"/><rect x="503" y="408" width="1" height="17" fill="#ffff00"/><rect x="504" y="422" width="2" height="1" fill="#ffff00"/><rect x="501" y="411" width="2" height="1" fill="#ffff00"/><rect x="509" y="424" width="1" height="17" fill="#ffff00"/><rect x="510" y="433" width="2" height="1" fill="#ffff00"/><rect x="507" y="427" width="2" height="1" fill="#ffff00"/><rect x="515" y="400" width="1" height="31" fill="#ffff00"/><rect x="516" y="402" width="2" height="1" fill="#ffff00"/><rect x="513" y="430" width="2" height="1" fill="#ffff00"/><rect x="521" y="387" width="1" height="16" fill="#ffff00"/><rect x="522" y="394" width="2" height="1" fill="#ffff00"/><rect x="519" y="394" width="2" height="1" fill="#ffff00"/><rect x="527" y="404" width="1" height="16" fill="#ffff00"/><rect x="528" y="417" width="2" height="1" fill="#ffff00"/><rect x="525" y="405" width="2" height="1" fill="#ffff00"/><rect x="533" y="392" width="1" height="18" fill="#ffff00"/><rect x="534" y="393" width="2" height="1" fill="#ffff00"/><rect x="531" y="404" width="2" height="1" fill="#ffff00"/><rect x="539" y="370" width="1" height="17" fill="#ffff00"/><rect x="540" y="381" width="2" height="1" fill="#ffff00"/><rect x="537" y="381" width="2" height="1" fill="#ffff00"/><rect x="545" y="373" width="1" height="14" fill="#ffff00"/><rect x="546" y="373" width="2" height="1" fill="#ffff00"/><rect x="543" y="377" width="2" height="1" fill="#ffff00"/><rect x="551" y="350" width="1" height="20" fill="#ffff00"/><rect x="552" y="351" width="2" height="1" fill="#ffff00"/><rect x="549" y="368" width="2" height="1" fill="#ffff00"/><rect x="557" y="333" width="1" height="27" fill="#ffff00"/><rect x="558" y="341" width="2" height="1" fill="#ffff00"/><rect x="555" y="357" width="2" height="1" fill="#ffff00"/><rect x="563" y="339" width="1" height="39" fill="#ffff00"/><rect x="564" y="370" width="2" height="1" fill="#ffff00"/><rect x="569" y="344" width="1" height="11" fill="#ffff00"/><rect x="570" y="353" width="2" height="1" fill="#ffff00"/><rect x="567" y="352" width="2" height="1" fill="#ffff00"/><rect x="575" y="325" width="1" height="15" fill="#ffff00"/><rect x="576" y="334" width="2" height="1" fill="#ffff00"/><rect x="573" y="329" width="2" height="1" fill="#ffff00"/><rect x="581" y="336" width="1" height="14" fill="#ffff00"/><rect x="582" y="336" width="2" height="1" fill="#ffff00"/><rect x="579" y="338" width="2" height="1" fill="#ffff00"/><rect x="587" y="307" width="1" height="30" fill="#ffff00"/><rect x="588" y="326" width="2" height="1" fill="#ffff00"/><rect x="585" y="326" width="2" height="1" fill="#ffff00"/><rect x="593" y="334" width="1" height="22" fill="#ffff00"/><rect x="594" y="339" width="2" height="1" fill="#ffff00"/><rect x="599" y="305" width="1" height="21" fill="#ffff00"/><rect x="600" y="305" width="2" height="1" fill="#ffff00"/><rect x="597" y="325" width="2" height="1" fill="#ffff00"/><rect x="605" y="289" width="1" height="22" fill="#ffff00"/><rect x="606" y="307" width="2" height="1" fill="#ffff00"/><rect x="603" y="293" width="2" height="1" fill="#ffff00"/><rect x="611" y="302" width="1" height="24" fill="#ffff00"/><rect x="612" y="325" width="2" height="1" fill="#ffff00"/><rect x="609" y="302" width="2" height="1" fill="#ffff00"/><rect x="617" y="322" width="1" height="15" fill="#ffff00"/><rect x="618" y="330" width="2" height="1" fill="#ffff00"/><rect x="615" y="327" width="2" height="1" fill="#ffff00"/><rect x="623" y="308" width="1" height="26" fill="#ffff00"/><rect x="624" y="333" width="2" height="1" fill="#ffff00"/><rect x="621" y="313" width="2" height="1" fill="#ffff00"/><rect x="629" y="332" width="1" height="15" fill="#ffff00"/><rect x="630" y="335" width="2" height="1" fill="#ffff00"/><rect x="627" y="332" width="2" height="1" fill="#ffff00"/><rect x="635" y="322" width="1" height="21" fill="#ffff00"/><rect x="636" y="323" width="2" height="1" fill="#ffff00"/><rect x="633" y="334" width="2" height="1" fill="#ffff00"/><rect x="641" y="303" width="1" height="10" fill="#ffff00"/><rect x="642" y="305" width="2" height="1" fill="#ffff00"/><rect x="639" y="309" width="2" height="1" fill="#ffff00"/><rect x="647" y="266" width="1" height="24" fill="#ffff00"/><rect x="648" y="266" width="2" height="1" fill="#ffff00"/><rect x="645" y="288" width="2" height="1" fill="#ffff00"/><rect x="653" y="261" width="1" height="16" fill="#ffff00"/><rect x="654" y="275" width="2" height="1" fill="#ffff00"/><rect x="651" y="266" width="2" height="1" fill="#ffff00"/><rect x="659" y="268" width="1" height="46" fill="#ffff00"/><rect x="660" y="312" width="2" height="1" fill="#ffff00"/><rect x="657" y="270" width="2" height="1" fill="#ffff00"/><rect x="665" y="297" width="1" height="20" fill="#ffff00"/><rect x="666" y="312" width="2" height="1" fill="#ffff00"/><rect x="663" y="306" width="2" height="1" fill="#ffff00"/><rect x="671" y="304" width="1" height="43" fill="#ffff00"/><rect x="672" y="337" width="2" height="1" fill="#ffff00"/><rect x="669" y="308" width="2" height="1" fill="#ffff00"/><rect x="677" y="326" width="1" height="60" fill="#ffff00"/><rect x="678" y="326" width="2" height="1" fill="#ffff00"/><rect x="675" y="358" width="2" height="1" fill="#ffff00"/><rect x="683" y="293" width="1" height="19" fill="#ffff00"/><rect x="684" y="299" width="2" height="1" fill="#ffff00"/><rect x="681" y="305" width="2" height="1" fill="#ffff00"/><rect x="689" y="300" width="1" height="34" fill="#ffff00"/><rect x="690" y="319" width="2" height="1" fill="#ffff00"/><rect x="687" y="300" width="2" height="1" fill="#ffff00"/><rect x="695" y="325" width="1" height="19" fill="#ffff00"/><rect x="696" y="329" width="2" height="1" fill="#ffff00"/><rect x="693" y="327" width="2" height="1" fill="#ffff00"/><rect x="701" y="308" width="1" height="33" fill="#ffff00"/><rect x="702" y="336" width="2" height="1" fill="#ffff00"/><rect x="699" y="323" width="2" height="1" fill="#ffff00"/><rect x="707" y="317" width="1" height="17" fill="#ffff00"/><rect x="708" y="317" width="2" height="1" fill="#ffff00"/><rect x="705" y="333" width="2" height="1" fill="#ffff00"/><rect x="713" y="282" width="1" height="26" fill="#ffff00"/><rect x="714" y="282" width="2" height="1" fill="#ffff00"/><rect x="711" y="306" width="2" height="1" fill="#ffff00"/><rect x="719" y="259" width="1" height="16" fill="#ffff00"/><rect x="720" y="274" width="2" height="1" fill="#ffff00"/><rect x="717" y="261" width="2" height="1" fill="#ffff00"/><rect x="725" y="258" width="1" height="16" fill="#ffff00"/><rect x="726" y="268" width="2" height="1" fill="#ffff00"/><rect x="723" y="260" width="2" height="1" fill="#ffff00"/><rect x="731" y="252" width="1" height="44" fill="#ffff00"/><rect x="732" y="255" width="2" height="1" fill="#ffff00"/><rect x="729" y="282" width="2" height="1" fill="#ffff00"/><rect x="737" y="259" width="1" height="16" fill="#ffff00"/><rect x="738" y="263" width="2" height="1" fill="#ffff00"/><rect x="735" y="266" width="2" height="1" fill="#ffff00"/><rect x="743" y="231" width="1" height="27" fill="#ffff00"/><rect x="744" y="232" width="2" height="1" fill="#ffff00"/><rect x="741" y="252" width="2" height="1" fill="#ffff00"/><rect x="749" y="225" width="1" height="16" fill="#ffff00"/><rect x="750" y="227" width="2" height="1" fill="#ffff00"/><rect x="747" y="229" width="2" height="1" fill="#ffff00"/><rect x="755" y="242" width="1" height="16" fill="#ffff00"/><rect x="756" y="242" width="2" height="1" fill="#ffff00"/><rect x="753" y="242" width="2" height="1" fill="#ffff00"/><rect x="761" y="197" width="1" height="24" fill="#ffff00"/><rect x="762" y="202" width="2" height="1" fill="#ffff00"/><rect x="759" y="219" width="2" height="1" fill="#ffff00"/><rect x="767" y="169" width="1" height="29" fill="#ffff00"/><rect x="768" y="169" width="2" height="1" fill="#ffff00"/><rect x="765" y="194" width="2" height="1" fill="#ffff00"/><rect x="773" y="166" width="1" height="18" fill="#ffff00"/><rect x="774" y="172" width="2" height="1" fill="#ffff00"/><rect x="771" y="171" width="2" height="1" fill="#ffff00"/><rect x="779" y="159" width="1" height="21" fill="#ffff00"/><rect x="780" y="168" width="2" height="1" fill="#ffff00"/><rect x="777" y="160" width="2" height="1" fill="#ffff00"/><rect x="785" y="167" width="1" height="43" fill="#ffff00"/><rect x="786" y="203" width="2" height="1" fill="#ffff00"/><rect x="783" y="168" width="2" height="1" fill="#ffff00"/><rect x="791" y="221" width="1" height="24" fill="#ffff00"/><rect x="792" y="221" width="2" height="1" fill="#ffff00"/><rect x="789" y="232" width="2" height="1" fill="#ffff00"/><rect x="797" y="187" width="1" height="21" fill="#ffff00"/><rect x="798" y="192" width="2" height="1" fill="#ffff00"/><rect x="795" y="201" width="2" height="1" fill="#ffff00"/><rect x="803" y="191" width="1" height="20" fill="#ffff00"/><rect x="804" y="209" width="2" height="1" fill="#ffff00"/><rect x="801" y="192" width="2" height="1" fill="#ffff00"/><rect x="809" y="192" width="1" height="29" fill="#ffff00"/><rect x="810" y="194" width="2" height="1" fill="#ffff00"/><rect x="807" y="212" width="2" height="1" fill="#ffff00"/><rect x="815" y="160" width="1" height="20" fill="#ffff00"/><rect x="816" y="166" width="2" height="1" fill="#ffff00"/><rect x="813" y="178" width="2" height="1" fill="#ffff00"/><rect x="821" y="133" width="1" height="25" fill="#ffff00"/><rect x="822" y="144" width="2" height="1" fill="#ffff00"/><rect x="819" y="157" width="2" height="1" fill="#ffff00"/><rect x="827" y="132" width="1" height="17" fill="#ffff00"/><rect x="828" y="146" width="2" height="1" fill="#ffff00"/><rect x="825" y="140" width="2" height="1" fill="#ffff00"/><rect x="833" y="141" width="1" height="16" fill="#ffff00"/><rect x="834" y="141" width="2" height="1" fill="#ffff00"/><rect x="831" y="142" width="2" height="1" fill="#ffff00"/><rect x="839" y="129" width="1" height="31" fill="#ffff00"/><rect x="840" y="158" width="2" height="1" fill="#ffff00"/><rect x="837" y="135" width="2" height="1" fill="#ffff00"/><rect x="845" y="144" width="1" height="19" fill="#ffff00"/><rect x="846" y="157" width="2" height="1" fill="#ffff00"/><rect x="843" y="151" width="2" height="1" fill="#ffff00"/><rect x="851" y="134" width="1" height="19" fill="#ffff00"/><rect x="852" y="134" width="2" height="1" fill="#ffff00"/><rect x="849" y="151" width="2" height="1" fill="#ffff00"/><rect x="35" y="200" width="7" height="2" fill="#ff0000"/><rect x="42" y="199" width="22" height="2" fill="#ff0000"/><rect x="64" y="198" width="21" height="2" fill="#ff0000"/><rect x="85" y="197" width="20" height="2" fill="#ff0000"/><rect x="105" y="196" width="17" height="2" fill="#ff0000"/><rect x="122" y="195" width="16" height="2" fill="#ff0000"/><rect x="138" y="194" width="17" height="2" fill="#ff0000"/><rect x="155" y="193" width="16" height="2" fill="#ff0000"/><rect x="171" y="192" width="16" height="2" fill="#ff0000"/><rect x="187" y="191" width="17" height="2" fill="#ff0000"/><rect x="204" y="190" width="16" height="2" fill="#ff0000"/><rect x="220" y="189" width="18" height="2" fill="#ff0000"/><rect x="238" y="188" width="18" height="2" fill="#ff0000"/><rect x="256" y="187" width="18" height="2" fill="#ff0000"/><rect x="274" y="186" width="18" height="2" fill="#ff0000"/><rect x="292" y="185" width="18" height="2" fill="#ff0000"/><rect x="310" y="184" width="18" height="2" fill="#ff0000"/><rect x="328" y="183" width="18" height="2" fill="#ff0000"/><rect x="346" y="182" width="18" height="2" fill="#ff0000"/><rect x="364" y="181" width="17" height="2" fill="#ff0000"/><rect x="381" y="180" width="18" height="2" fill="#ff0000"/><rect x="399" y="179" width="18" height="2" fill="#ff0000"/><rect x="417" y="178" width="18" height="2" fill="#ff0000"/><rect x="435" y="177" width="18" height="2" fill="#ff0000"/><rect x="453" y="176" width="18" height="2" fill="#ff0000"/><rect x="471" y="175" width="18" height="2" fill="#ff0000"/><rect x="489" y="174" width="18" height="2" fill="#ff0000"/><rect x="507" y="173" width="18" height="2" fill="#ff0000"/><rect x="525" y="172" width="17" height="2" fill="#ff0000"/><rect x="542" y="171" width="16" height="2" fill="#ff0000"/><rect x="558" y="170" width="16" height="2" fill="#ff0000"/><rect x="574" y="169" width="16" height="2" fill="#ff0000"/><rect x="590" y="168" width="16" height="2" fill="#ff0000"/><rect x="606" y="167" width="16" height="2" fill="#ff0000"/><rect x="622" y="166" width="16" height="2" fill="#ff0000"/><rect x="638" y="165" width="16" height="2" fill="#ff0000"/><rect x="654" y="164" width="17" height="2" fill="#ff0000"/><rect x="671" y="163" width="16" height="2" fill="#ff0000"/><rect x="687" y="162" width="16" height="2" fill="#ff0000"/><rect x="703" y="161" width="16" height="2" fill="#ff0000"/><rect x="719" y="160" width="16" height="2" fill="#ff0000"/><rect x="735" y="159" width="16" height="2" fill="#ff0000"/><rect x="751" y="158" width="16" height="2" fill="#ff0000"/><rect x="767" y="157" width="16" height="2" fill="#ff0000"/><rect x="783" y="156" width="18" height="2" fill="#ff0000"/><rect x="801" y="155" width="18" height="2" fill="#ff0000"/><rect x="819" y="154" width="17" height="2" fill="#ff0000"/><rect x="836" y="153" width="18" height="2" fill="#ff0000"/><rect x="854" y="152" width="18" height="2" fill="#ff0000"/><rect x="872" y="151" width="18" height="2" fill="#ff0000"/><rect x="890" y="150" width="18" height="2" fill="#ff0000"/><rect x="908" y="149" width="17" height="2" fill="#ff0000"/><rect x="925" y="148" width="8" height="2" fill="#ff0000"/><rect x="35" y="314" width="18" height="2" fill="#ff0000"/><rect x="53" y="313" width="22" height="2" fill="#ff0000"/><rect x="75" y="312" width="21" height="2" fill="#ff0000"/><rect x="96" y="311" width="18" height="2" fill="#ff0000"/><rect x="114" y="310" width="16" height="2" fill="#ff0000"/><rect x="130" y="309" width="16" height="2" fill="#ff0000"/><rect x="146" y="308" width="17" height="2" fill="#ff0000"/><rect x="163" y="307" width="16" height="2" fill="#ff0000"/><rect x="179" y="306" width="17" height="2" fill="#ff0000"/><rect x="196" y="305" width="16" height="2" fill="#ff0000"/><rect x="212" y="304" width="16" height="2" fill="#ff0000"/><rect x="228" y="303" width="19" height="2" fill="#ff0000"/><rect x="247" y="302" width="18" height="2" fill="#ff0000"/><rect x="265" y="301" width="18" height="2" fill="#ff0000"/><rect x="283" y="300" width="18" height="2" fill="#ff0000"/><rect x="301" y="299" width="18" height="2" fill="#ff0000"/><rect x="319" y="298" width="18" height="2" fill="#ff0000"/><rect x="337" y="297" width="18" height="2" fill="#ff0000"/><rect x="355" y="296" width="17" height="2" fill="#ff0000"/><rect x="372" y="295" width="18" height="2" fill="#ff0000"/><rect x="390" y="294" width="18" height="2" fill="#ff0000"/><rect x="408" y="293" width="18" height="2" fill="#ff0000"/><rect x="426" y="292" width="18" height="2" fill="#ff0000"/><rect x="444" y="291" width="18" height="2" fill="#ff0000"/><rect x="462" y="290" width="18" height="2" fill="#ff0000"/><rect x="480" y="289" width="18" height="2" fill="#ff0000"/><rect x="498" y="288" width="18" height="2" fill="#ff0000"/><rect x="516" y="287" width="18" height="2" fill="#ff0000"/><rect x="534" y="286" width="16" height="2" fill="#ff0000"/><rect x="550" y="285" width="16" height="2" fill="#ff0000"/><rect x="566" y="284" width="16" height="2" fill="#ff0000"/><rect x="582" y="283" width="16" height="2" fill="#ff0000"/><rect x="598" y="282" width="16" height="2" fill="#ff0000"/><rect x="614" y="281" width="16" height="2" fill="#ff0000"/><rect x="630" y="280" width="16" height="2" fill="#ff0000"/><rect x="646" y="279" width="17" height="2" fill="#ff0000"/><rect x="663" y="278" width="16" height="2" fill="#ff0000"/><rect x="679" y="277" width="16" height="2" fill="#ff0000"/><rect x="695" y="276" width="16" height="2" fill="#ff0000"/><rect x="711" y="275" width="16" height="2" fill="#ff0000"/><rect x="727" y="274" width="16" height="2" fill="#ff0000"/><rect x="743" y="273" width="16" height="2" fill="#ff0000"/><rect x="759" y="272" width="16" height="2" fill="#ff0000"/><rect x="775" y="271" width="17" height="2" fill="#ff0000"/><rect x="792" y="270" width="18" height="2" fill="#ff0000"/><rect x="810" y="269" width="17" height="2" fill="#ff0000"/><rect x="827" y="268" width="18" height="2" fill="#ff0000"/><rect x="845" y="267" width="18" height="2" fill="#ff0000"/><rect x="863" y="266" width="18" height="2" fill="#ff0000"/><rect x="881" y="265" width="18" height="2" fill="#ff0000"/><rect x="899" y="264" width="17" height="2" fill="#ff0000"/><rect x="916" y="263" width="17" height="2" fill="#ff0000"/><rect x="35" y="429" width="7" height="2" fill="#ff0000"/><rect x="42" y="428" width="22" height="2" fill="#ff0000"/><rect x="64" y="427" width="21" height="2" fill="#ff0000"/><rect x="85" y="426" width="20" height="2" fill="#ff0000"/><rect x="105" y="425" width="17" height="2" fill="#ff0000"/><rect x="122" y="424" width="16" height="2" fill="#ff0000"/><rect x="138" y="423" width="17" height="2" fill="#ff0000"/><rect x="155" y="422" width="16" height="2" fill="#ff0000"/><rect x="171" y="421" width="16" height="2" fill="#ff0000"/><rect x="187" y="420" width="17" height="2" fill="#ff0000"/><rect x="204" y="419" width="16" height="2" fill="#ff0000"/><rect x="220" y="418" width="18" height="2" fill="#ff0000"/><rect x="238" y="417" width="18" height="2" fill="#ff0000"/><rect x="256" y="416" width="18" height="2" fill="#ff0000"/><rect x="274" y="415" width="18" height="2" fill="#ff0000"/><rect x="292" y="414" width="18" height="2" fill="#ff0000"/><rect x="310" y="413" width="18" height="2" fill="#ff0000"/><rect x="328" y="412" width="18" height="2" fill="#ff0000"/><rect x="346" y="411" width="18" height="2" fill="#ff0000"/><rect x="364" y="410" width="17" height="2" fill="#ff0000"/><rect x="381" y="409" width="18" height="2" fill="#ff0000"/><rect x="399" y="408" width="18" height="2" fill="#ff0000"/><rect x="417" y="407" width="18" height="2" fill="#ff0000"/><rect x="435" y="406" width="18" height="2" fill="#ff0000"/><rect x="453" y="405" width="18" height="2" fill="#ff0000"/><rect x="471" y="404" width="18" height="2" fill="#ff0000"/><rect x="489" y="403" width="18" height="2" fill="#ff0000"/><rect x="507" y="402" width="18" height="2" fill="#ff0000"/><rect x="525" y="401" width="17" height="2" fill="#ff0000"/><rect x="542" y="400" width="16" height="2" fill="#ff0000"/><rect x="558" y="399" width="16" height="2" fill="#ff0000"/><rect x="574" y="398" width="16" height="2" fill="#ff0000"/><rect x="590" y="397" width="16" height="2" fill="#ff0000"/><rect x="606" y="396" width="16" height="2" fill="#ff0000"/><rect x="622" y="395" width="16" height="2" fill="#ff0000"/><rect x="638" y="394" width="16" height="2" fill="#ff0000"/><rect x="654" y="393" width="17" height="2" fill="#ff0000"/><rect x="671" y="392" width="16" height="2" fill="#ff0000"/><rect x="687" y="391" width="16" height="2" fill="#ff0000"/><rect x="703" y="390" width="16" height="2" fill="#ff0000"/><rect x="719" y="389" width="16" height="2" fill="#ff0000"/><rect x="735" y="388" width="16" height="2" fill="#ff0000"/><rect x="751" y="387" width="16" height="2" fill="#ff0000"/><rect x="767" y="386" width="16" height="2" fill="#ff0000"/><rect x="783" y="385" width="18" height="2" fill="#ff0000"/><rect x="801" y="384" width="18" height="2" fill="#ff0000"/><rect x="819" y="383" width="17" height="2" fill="#ff0000"/><rect x="836" y="382" width="18" height="2" fill="#ff0000"/><rect x="854" y="381" width="18" height="2" fill="#ff0000"/><rect x="872" y="380" width="18" height="2" fill="#ff0000"/><rect x="890" y="379" width="18" height="2" fill="#ff0000"/><rect x="908" y="378" width="17" height="2" fill="#ff0000"/><rect x="925" y="377" width="8" height="2" fill="#ff0000"/><rect x="35" y="543" width="18" height="2" fill="#ff0000"/><rect x="53" y="542" width="21" height="2" fill="#ff0000"/><rect x="74" y="541" width="22" height="2" fill="#ff0000"/><rect x="96" y="540" width="18" height="2" fill="#ff0000"/><rect x="114" y="539" width="16" height="2" fill="#ff0000"/><rect x="130" y="538" width="16" height="2" fill="#ff0000"/><rect x="146" y="537" width="17" height="2" fill="#ff0000"/><rect x="163" y="536" width="16" height="2" fill="#ff0000"/><rect x="179" y="535" width="17" height="2" fill="#ff0000"/><rect x="196" y="534" width="16" height="2" fill="#ff0000"/><rect x="212" y="533" width="17" height="2" fill="#ff0000"/><rect x="229" y="532" width="18" height="2" fill="#ff0000"/><rect x="247" y="531" width="18" height="2" fill="#ff0000"/><rect x="265" y="530" width="18" height="2" fill="#ff0000"/><rect x="283" y="529" width="18" height="2" fill="#ff0000"/><rect x="301" y="528" width="18" height="2" fill="#ff0000"/><rect x="319" y="527" width="18" height="2" fill="#ff0000"/><rect x="337" y="526" width="18" height="2" fill="#ff0000"/><rect x="355" y="525" width="17" height="2" fill="#ff0000"/><rect x="372" y="524" width="18" height="2" fill="#ff0000"/><rect x="390" y="523" width="18" height="2" fill="#ff0000"/><rect x="408" y="522" width="18" height="2" fill="#ff0000"/><rect x="426" y="521" width="18" height="2" fill="#ff0000"/><rect x="444" y="520" width="18" height="2" fill="#ff0000"/><rect x="462" y="519" width="18" height="2" fill="#ff0000"/><rect x="480" y="518" width="18" height="2" fill="#ff0000"/><rect x="498" y="517" width="18" height="2" fill="#ff0000"/><rect x="516" y="516" width="18" height="2" fill="#ff0000"/><rect x="534" y="515" width="16" height="2" fill="#ff0000"/><rect x="550" y="514" width="16" height="2" fill="#ff0000"/><rect x="566" y="513" width="16" height="2" fill="#ff0000"/><rect x="582" y="512" width="16" height="2" fill="#ff0000"/><rect x="598" y="511" width="16" height="2" fill="#ff0000"/><rect x="614" y="510" width="16" height="2" fill="#ff0000"/><rect x="630" y="509" width="16" height="2" fill="#ff0000"/><rect x="646" y="508" width="17" height="2" fill="#ff0000"/><rect x="663" y="507" width="16" height="2" fill="#ff0000"/><rect x="679" y="506" width="16" height="2" fill="#ff0000"/><rect x="695" y="505" width="16" height="2" fill="#ff0000"/><rect x="711" y="504" width="16" height="2" fill="#ff0000"/><rect x="727" y="503" width="16" height="2" fill="#ff0000"/><rect x="743" y="502" width="16" height="2" fill="#ff0000"/><rect x="759" y="501" width="16" height="2" fill="#ff0000"/><rect x="775" y="500" width="17" height="2" fill="#ff0000"/><rect x="792" y="499" width="18" height="2" fill="#ff0000"/><rect x="810" y="498" width="17" height="2" fill="#ff0000"/><rect x="827" y="497" width="18" height="2" fill="#ff0000"/><rect x="845" y="496" width="18" height="2" fill="#ff0000"/><rect x="863" y="495" width="18" height="2" fill="#ff0000"/><rect x="881" y="494" width="18" height="2" fill="#ff0000"/><rect x="899" y="493" width="17" height="2" fill="#ff0000"/><rect x="916" y="492" width="17" height="2" fill="#ff0000"/><rect x="35" y="658" width="7" height="2" fill="#ff0000"/><rect x="42" y="657" width="22" height="2" fill="#ff0000"/><rect x="64" y="656" width="21" height="2" fill="#ff0000"/><rect x="85" y="655" width="20" height="2" fill="#ff0000"/><rect x="105" y="654" width="17" height="2" fill="#ff0000"/><rect x="122" y="653" width="16" height="2" fill="#ff0000"/><rect x="138" y="652" width="17" height="2" fill="#ff0000"/><rect x="155" y="651" width="16" height="2" fill="#ff0000"/><rect x="171" y="650" width="16" height="2" fill="#ff0000"/><rect x="187" y="649" width="17" height="2" fill="#ff0000"/><rect x="204" y="648" width="16" height="2" fill="#ff0000"/><rect x="220" y="647" width="18" height="2" fill="#ff0000"/><rect x="238" y="646" width="18" height="2" fill="#ff0000"/><rect x="256" y="645" width="18" height="2" fill="#ff0000"/><rect x="274" y="644" width="18" height="2" fill="#ff0000"/><rect x="292" y="643" width="18" height="2" fill="#ff0000"/><rect x="310" y="642" width="18" height="2" fill="#ff0000"/><rect x="328" y="641" width="18" height="2" fill="#ff0000"/><rect x="346" y="640" width="18" height="2" fill="#ff0000"/><rect x="364" y="639" width="17" height="2" fill="#ff0000"/><rect x="381" y="638" width="18" height="2" fill="#ff0000"/><rect x="399" y="637" width="18" height="2" fill="#ff0000"/><rect x="417" y="636" width="18" height="2" fill="#ff0000"/><rect x="435" y="635" width="18" height="2" fill="#ff0000"/><rect x="453" y="634" width="18" height="2" fill="#ff0000"/><rect x="471" y="633" width="18" height="2" fill="#ff0000"/><rect x="489" y="632" width="18" height="2" fill="#ff0000"/><rect x="507" y="631" width="18" height="2" fill="#ff0000"/><rect x="525" y="630" width="17" height="2" fill="#ff0000"/><rect x="542" y="629" width="16" height="2" fill="#ff0000"/><rect x="558" y="628" width="16" height="2" fill="#ff0000"/><rect x="574" y="627" width="16" height="2" fill="#ff0000"/><rect x="590" y="626" width="16" height="2" fill="#ff0000"/><rect x="606" y="625" width="16" height="2" fill="#ff0000"/><rect x="622" y="624" width="16" height="2" fill="#ff0000"/><rect x="638" y="623" width="16" height="2" fill="#ff0000"/><rect x="654" y="622" width="17" height="2" fill="#ff0000"/><rect x="671" y="621" width="16" height="2" fill="#ff0000"/><rect x="687" y="620" width="16" height="2" fill="#ff0000"/><rect x="703" y="619" width="16" height="2" fill="#ff0000"/><rect x="719" y="618" width="16" height="2" fill="#ff0000"/><rect x="735" y="617" width="16" height="2" fill="#ff0000"/><rect x="751" y="616" width="16" height="2" fill="#ff0000"/><rect x="767" y="615" width="16" height="2" fill="#ff0000"/><rect x="783" y="614" width="18" height="2" fill="#ff0000"/><rect x="801" y="613" width="18" height="2" fill="#ff0000"/><rect x="819" y="612" width="17" height="2" fill="#ff0000"/><rect x="836" y="611" width="18" height="2" fill="#ff0000"/><rect x="854" y="610" width="18" height="2" fill="#ff0000"/><rect x="872" y="609" width="18" height="2" fill="#ff0000"/><rect x="890" y="608" width="18" height="2" fill="#ff0000"/><rect x="908" y="607" width="17" height="2" fill="#ff0000"/><rect x="925" y="606" width="8" height="2" fill="#ff0000"/><rect x="35" y="115" width="132" height="2" fill="#00ffff"/><rect x="167" y="116" width="180" height="2" fill="#00ffff"/><rect x="347" y="117" width="481" height="2" fill="#00ffff"/><rect x="828" y="116" width="105" height="2" fill="#00ffff"/><rect x="35" y="230" width="240" height="2" fill="#00ffff"/><rect x="275" y="231" width="180" height="2" fill="#00ffff"/><rect x="455" y="232" width="289" height="2" fill="#00ffff"/><rect x="744" y="231" width="144" height="2" fill="#00ffff"/><rect x="888" y="230" width="45" height="2" fill="#00ffff"/><rect x="35" y="344" width="150" height="2" fill="#00ffff"/><rect x="185" y="345" width="180" height="2" fill="#00ffff"/><rect x="365" y="346" width="456" height="2" fill="#00ffff"/><rect x="821" y="345" width="112" height="2" fill="#00ffff"/><rect x="35" y="459" width="246" height="2" fill="#00ffff"/><rect x="281" y="460" width="180" height="2" fill="#00ffff"/><rect x="461" y="461" width="265" height="2" fill="#00ffff"/><rect x="726" y="460" width="161" height="2" fill="#00ffff"/><rect x="887" y="459" width="46" height="2" fill="#00ffff"/><rect x="35" y="573" width="156" height="2" fill="#00ffff"/><rect x="191" y="574" width="180" height="2" fill="#00ffff"/><rect x="371" y="575" width="438" height="2" fill="#00ffff"/><rect x="809" y="574" width="124" height="2" fill="#00ffff"/><rect x="35" y="688" width="257" height="2" fill="#00ffff"/><rect x="292" y="689" width="193" height="2" fill="#00ffff"/><rect x="485" y="690" width="227" height="2" fill="#00ffff"/><rect x="712" y="689" width="170" height="2" fill="#00ffff"/><rect x="882" y="688" width="51" height="2" fill="#00ffff"/><rect x="33" y="102" width="901" height="1" fill="#fff"/><rect x="33" y="102" width="1" height="596" fill="#fff"/><rect x="933" y="102" width="1" height="596" fill="#fff"/><rect x="33" y="697" width="901" height="1" fill="#fff"/><rect x="924" y="103" width="9" height="8" fill="#00ff00"/><rect x="925" y="111" width="7" height="5" fill="#fff"/><rect x="926" y="112" width="5" height="3" fill="#000"/><rect x="927" y="113" width="3" height="1" fill="#fff"/><rect x="924" y="689" width="9" height="8" fill="#00ff00"/><rect x="856" y="695" width="5" height="6" fill="#ffff00"/><rect x="935" y="127" width="60" height="13" fill="#c6ddd9"/><rect x="979" y="701" width="15" height="13" fill="#c0c0c0"/><text x="34" y="114" fill="#fff" font-size="9.6" textLength="154" lengthAdjust="spacing">FIBONACCI/GALACTIC TRADER(R)</text><text x="43" y="133" fill="#ff0000" font-size="11" textLength="154" lengthAdjust="spacing">[005] Mars Price Line G 360 N -1</text><text x="43" y="143" fill="#00ffff" font-size="11" textLength="162" lengthAdjust="spacing">[007] Saturn Price Line G 360 N -1</text><text x="944" y="128" fill="#fff" font-size="11" textLength="46" lengthAdjust="spacing">66000.00</text><text x="944" y="191" fill="#fff" font-size="11" textLength="46" lengthAdjust="spacing">64000.00</text><text x="944" y="255" fill="#fff" font-size="11" textLength="46" lengthAdjust="spacing">62000.00</text><text x="944" y="318" fill="#fff" font-size="11" textLength="46" lengthAdjust="spacing">60000.00</text><text x="944" y="382" fill="#fff" font-size="11" textLength="46" lengthAdjust="spacing">58000.00</text><text x="944" y="446" fill="#fff" font-size="11" textLength="46" lengthAdjust="spacing">56000.00</text><text x="944" y="509" fill="#fff" font-size="11" textLength="46" lengthAdjust="spacing">54000.00</text><text x="944" y="573" fill="#fff" font-size="11" textLength="46" lengthAdjust="spacing">52000.00</text><text x="944" y="636" fill="#fff" font-size="11" textLength="46" lengthAdjust="spacing">50000.00</text><text x="944" y="700" fill="#fff" font-size="11" textLength="46" lengthAdjust="spacing">48000.00</text><text x="942" y="138" fill="#202020" font-size="11" textLength="45" lengthAdjust="spacing">65712.81</text><text x="981" y="711" fill="#101010" font-size="10.5" textLength="11" lengthAdjust="spacingAndGlyphs" font-weight="bold">TF</text><text x="32" y="711" fill="#fff" font-size="11" textLength="55" lengthAdjust="spacing">2006-12-04</text><text x="122" y="711" fill="#fff" font-size="11" textLength="55" lengthAdjust="spacing">2006-12-27</text><text x="194" y="711" fill="#fff" font-size="11" textLength="55" lengthAdjust="spacing">2007-01-15</text><text x="284" y="711" fill="#fff" font-size="11" textLength="55" lengthAdjust="spacing">2007-02-05</text><text x="374" y="711" fill="#fff" font-size="11" textLength="55" lengthAdjust="spacing">2007-02-26</text><text x="464" y="711" fill="#fff" font-size="11" textLength="55" lengthAdjust="spacing">2007-03-19</text><text x="548" y="711" fill="#fff" font-size="11" textLength="55" lengthAdjust="spacing">2007-04-10</text><text x="632" y="711" fill="#fff" font-size="11" textLength="55" lengthAdjust="spacing">2007-04-30</text><text x="710" y="711" fill="#fff" font-size="11" textLength="55" lengthAdjust="spacing">2007-05-21</text><text x="794" y="711" fill="#fff" font-size="11" textLength="55" lengthAdjust="spacing">2007-06-11</text><svg x="884" y="700" width="49" height="14"><text x="0" y="11" fill="#fff" font-size="11" textLength="49" lengthAdjust="spacing">2007-07-0</text></svg></svg>
<div class="a" style="left:0px;top:100px;width:29px;height:1px;background:#cfe3de;"></div>
<div class="a" style="left:1px;top:100px;width:1px;height:360px;background:#cfe3de;"></div>
<div class="a" style="left:28px;top:101px;width:1px;height:360px;background:#4f948a;"></div>
<div class="a" style="left:1px;top:460px;width:28px;height:1px;background:#4f948a;"></div>
<div class="a" style="left:3px;top:104px;width:24px;height:1px;background:#cfe3de;"></div>
<div class="a" style="left:3px;top:105px;width:24px;height:1px;background:#b4d4ce;"></div>
<div class="a" style="left:3px;top:106px;width:24px;height:1px;background:#4f948a;"></div>
<div class="a" style="left:3px;top:104px;width:1px;height:3px;background:#cfe3de;"></div>
<div class="a" style="left:26px;top:104px;width:1px;height:3px;background:#4f948a;"></div>
<div class="a" style="left:4px;top:161px;width:20px;height:1px;background:#4f948a;"></div>
<div class="a" style="left:4px;top:162px;width:20px;height:1px;background:#cfe3de;"></div>
<div class="a" style="left:4px;top:215px;width:20px;height:1px;background:#4f948a;"></div>
<div class="a" style="left:4px;top:216px;width:20px;height:1px;background:#cfe3de;"></div>
<div class="a" style="left:4px;top:317px;width:20px;height:1px;background:#4f948a;"></div>
<div class="a" style="left:4px;top:318px;width:20px;height:1px;background:#cfe3de;"></div>
<div class="a" style="left:4px;top:395px;width:20px;height:1px;background:#4f948a;"></div>
<div class="a" style="left:4px;top:396px;width:20px;height:1px;background:#cfe3de;"></div>
<div class="a" style="left:6px;top:324px;width:18px;height:1px;background:#ffffff;"></div>
<svg width="30" height="470" shape-rendering="crispEdges"><rect x="14" y="138" width="2" height="18" fill="#000"/><rect x="6" y="146" width="18" height="2" fill="#000"/><rect x="7" y="174" width="9" height="11" fill="#000"/><rect x="8" y="175" width="7" height="9" fill="#fff"/><rect x="9" y="178" width="5" height="5" fill="#c8c8c8"/><rect x="11" y="173" width="5" height="1" fill="#00c8e0"/><rect x="12" y="175" width="4" height="1" fill="#00c8e0"/><rect x="7" y="198" width="9" height="11" fill="#4f948a"/><rect x="8" y="199" width="7" height="9" fill="#8bbdb4"/><rect x="9" y="202" width="5" height="5" fill="#8bbdb4"/><rect x="11" y="197" width="5" height="1" fill="#8bbdb4"/><rect x="12" y="199" width="4" height="1" fill="#8bbdb4"/><rect x="8" y="223" width="14" height="2" fill="#000"/><rect x="8" y="247" width="16" height="2" fill="#000"/><rect x="7" y="271" width="2" height="16" fill="#000"/><rect x="17" y="300" width="5" height="11" fill="#000"/><rect x="18" y="301" width="3" height="9" fill="#00f0ff"/><rect x="18" y="296" width="3" height="4" fill="#000"/><rect x="19" y="297" width="1" height="5" fill="#ffff60"/><rect x="6" y="451" width="1" height="5" fill="#000"/><rect x="5" y="452" width="1" height="3" fill="#000"/><rect x="4" y="453" width="1" height="1" fill="#000"/></svg>
<svg width="30" height="470"><path d="M11 116 L11 127.3 L13.7 124.8 L16.2 130.3 L18.2 129.4 L15.8 124 L19.3 123.8 Z" fill="#000"/><circle cx="14.6" cy="174.7" r="4.1" fill="#fff" stroke="#000" stroke-width="1.3"/><path d="M17.6 178.4 L22.3 182.8" stroke="#000" stroke-width="2.2" fill="none" /><circle cx="14.6" cy="198.7" r="4.1" fill="#8bbdb4" stroke="#4f948a" stroke-width="1.3"/><path d="M17.6 202.4 L22.3 206.8" stroke="#4f948a" stroke-width="2.2" fill="none" /><path d="M9.5 209.5 H17.5 V199.5" stroke="#c6dfdb" stroke-width="1" fill="none" /><path d="M9.2 225.6 L21.3 237.6" stroke="#000" stroke-width="3.9" fill="none" /><path d="M11.0 226.9 L20.7 236.5" stroke="#00e000" stroke-width="2.0" fill="none" /><circle cx="9.4" cy="225.3" r="0.9" fill="#fff"/><path d="M9.2 249.6 L21.3 261.6" stroke="#000" stroke-width="3.9" fill="none" /><path d="M11.0 250.9 L20.7 260.5" stroke="#0000f0" stroke-width="2.0" fill="none" /><circle cx="9.4" cy="249.3" r="0.9" fill="#fff"/><path d="M9.2 272.6 L21.3 284.6" stroke="#000" stroke-width="3.9" fill="none" /><path d="M11.0 273.90000000000003 L20.7 283.5" stroke="#0000f0" stroke-width="2.0" fill="none" /><circle cx="9.4" cy="272.3" r="0.9" fill="#fff"/><path d="M6.3 307.3 L19.2 294.4" stroke="#000" stroke-width="1.5" fill="none" /><circle cx="15" cy="411" r="7" fill="none" stroke="#000" stroke-width="1.9"/><ellipse cx="15" cy="435.5" rx="8.1" ry="5.6" fill="none" stroke="#000" stroke-width="1.9"/><path d="M8.8 349.3 L22.9 363.8 M22.9 349.3 L8.3 363.8" stroke="#f00000" stroke-width="1.5" fill="none" /></svg>
<div class="a" style="left:6.5px;top:325px;font:14px/16px 'Liberation Serif',serif;color:#000;letter-spacing:-0.6px">abc</div>
<div class="a" style="left:6.5px;top:348px;font:14px/16px 'Liberation Serif',serif;color:#000;letter-spacing:-0.6px">abc</div>
<div class="a" style="left:11px;top:373px;font:bold 14px/16px 'Liberation Sans',sans-serif;color:#0000f0">F</div>
<div class="a" style="left:995px;top:100px;width:1px;height:456px;background:#4f948a;"></div>
<div class="a" style="left:996px;top:100px;width:1px;height:456px;background:#cfe3de;"></div>
<div class="a" style="left:996px;top:100px;width:28px;height:1px;background:#cfe3de;"></div>
<div class="a" style="left:1023px;top:101px;width:1px;height:455px;background:#4f948a;"></div>
<div class="a" style="left:995px;top:555px;width:29px;height:1px;background:#4f948a;"></div>
<div class="a" style="left:998px;top:104px;width:24px;height:1px;background:#cfe3de;"></div>
<div class="a" style="left:998px;top:105px;width:24px;height:1px;background:#b4d4ce;"></div>
<div class="a" style="left:998px;top:106px;width:24px;height:1px;background:#4f948a;"></div>
<div class="a" style="left:998px;top:104px;width:1px;height:3px;background:#cfe3de;"></div>
<div class="a" style="left:1021px;top:104px;width:1px;height:3px;background:#4f948a;"></div>
<svg width="1024" height="560" shape-rendering="crispEdges"><rect x="1009" y="242" width="10" height="1" fill="#f00000"/><rect x="1013" y="246" width="6" height="1" fill="#0000f0"/><rect x="1016" y="249" width="3" height="1" fill="#008000"/><rect x="1002" y="260" width="16" height="1" fill="#000"/><rect x="1002" y="262" width="16" height="1" fill="#000"/><rect x="1002" y="266" width="16" height="1" fill="#000"/><rect x="1002" y="273" width="16" height="1" fill="#000"/><rect x="1002" y="284" width="1" height="14" fill="#0000f0"/><rect x="1004" y="284" width="1" height="14" fill="#0000f0"/><rect x="1007" y="284" width="1" height="14" fill="#0000f0"/><rect x="1011" y="284" width="1" height="14" fill="#0000f0"/><rect x="1016" y="284" width="1" height="14" fill="#0000f0"/><rect x="1002" y="308" width="1" height="14" fill="#f00000"/><rect x="1007" y="308" width="1" height="14" fill="#f00000"/><rect x="1012" y="308" width="1" height="14" fill="#f00000"/><rect x="1017" y="308" width="1" height="14" fill="#f00000"/><rect x="1001" y="341" width="1" height="6" fill="#0000f0"/><rect x="1002" y="343" width="1" height="1" fill="#0000f0"/><rect x="1004" y="338" width="1" height="7" fill="#0000f0"/><rect x="1005" y="342" width="1" height="1" fill="#0000f0"/><rect x="1006" y="334" width="1" height="5" fill="#0000f0"/><rect x="1007" y="337" width="1" height="1" fill="#0000f0"/><rect x="1009" y="333" width="1" height="6" fill="#0000f0"/><rect x="1010" y="336" width="1" height="1" fill="#0000f0"/><rect x="1012" y="330" width="7" height="4" fill="#f00000"/><rect x="1013" y="331" width="5" height="2" fill="#000"/><rect x="1014" y="331" width="1" height="1" fill="#fff"/><rect x="1016" y="332" width="1" height="1" fill="#fff"/><rect x="1016" y="336" width="3" height="4" fill="#f00000"/><rect x="1017" y="337" width="1" height="2" fill="#000"/><rect x="1011" y="382" width="1" height="1" fill="#c00000"/><rect x="1011" y="384" width="1" height="1" fill="#c00000"/><rect x="1011" y="386" width="1" height="1" fill="#c00000"/><rect x="1011" y="388" width="1" height="1" fill="#c00000"/><rect x="1011" y="390" width="1" height="1" fill="#c00000"/><rect x="1004" y="392" width="1" height="1" fill="#c00000"/><rect x="1006" y="392" width="1" height="1" fill="#c00000"/><rect x="1008" y="392" width="1" height="1" fill="#c00000"/><rect x="1010" y="392" width="1" height="1" fill="#c00000"/><rect x="1001" y="404" width="18" height="1" fill="#0000f0"/><rect x="1001" y="408" width="18" height="1" fill="#f00000"/><rect x="1001" y="412" width="18" height="1" fill="#0000f0"/><rect x="1001" y="416" width="18" height="1" fill="#f00000"/><rect x="1003" y="439" width="3" height="2" fill="#000"/><rect x="1001" y="547" width="1" height="5" fill="#000"/><rect x="1000" y="548" width="1" height="3" fill="#000"/><rect x="999" y="549" width="1" height="1" fill="#000"/></svg>
<svg width="1024" height="560"><path d="M1005.7 117.2 L1018.7 124.2" stroke="#f00000" stroke-width="1.9" fill="none" /><path d="M1001.5 138.6 L1018.7 155.5" stroke="#000" stroke-width="1.5" fill="none" /><path d="M1002.5 138.8 L1018.7 145" stroke="#f00000" stroke-width="1.9" fill="none" /><path d="M1001.5 139.5 L1009.9 155.5" stroke="#00e000" stroke-width="1.9" fill="none" /><path d="M1001.3 165.5 A 8.7 9.5 0 0 0 1018.7 165.5" stroke="#000" stroke-width="1.3" fill="none" /><path d="M1003.8 165.5 A 6.3 7.3 0 0 0 1016.4 165.5" stroke="#ff00ff" stroke-width="1.6" fill="none" /><path d="M1006 165.5 A 4.1 5.2 0 0 0 1014.3 165.5" stroke="#00e000" stroke-width="1.5" fill="none" /><path d="M1011.2 165.9 L1001.2 176.7" stroke="#000" stroke-width="1.2" fill="none" /><path d="M1008.7 210.2 L1001.3 217.2" stroke="#000" stroke-width="1.9" fill="none" /><path d="M1018.7 210.2 L1002 226.5" stroke="#000" stroke-width="1.4" fill="none" /><path d="M1018.7 223.3 L1014.3 227.7" stroke="#000" stroke-width="1.4" fill="none" /><path d="M1001.8 217.5 L1012.4 227.7" stroke="#909090" stroke-width="1.5" fill="none" /><path d="M1006.2 241.1 L1017 250.7" stroke="#000" stroke-width="1.9" fill="none" /><path d="M1011.8 354 L1005.2 360.8 M1017.8 356.2 L1004.1 369.8 M1018.7 363.2 L1013.2 368.8" stroke="#000" stroke-width="1.0" fill="none" /><path d="M1011.6 380.2 L1003.2 392.7" stroke="#0000f0" stroke-width="1.2" fill="none" /><path d="M1017.8 382 L1011.6 392.5" stroke="#000" stroke-width="1.1" fill="none" /><path d="M1003.7 440.9 L1007.4 428.4" stroke="#000" stroke-width="0.9" fill="none" /><path d="M1003.7 440.9 L1011.6 428" stroke="#000" stroke-width="0.9" fill="none" /><path d="M1003.7 440.9 L1016.8 428" stroke="#000" stroke-width="0.9" fill="none" /><path d="M1003.7 440.9 L1016.8 433" stroke="#000" stroke-width="0.9" fill="none" /><path d="M1003.7 440.9 L1016.8 437" stroke="#000" stroke-width="0.9" fill="none" /></svg>
<div class="a" style="left:1000px;top:111px;color:#000;font:bold 19px/22px 'Liberation Serif',serif;white-space:nowrap;transform:scaleX(0.88);transform-origin:0 0;">A</div>
<div class="a" style="left:1002.5px;top:187px;color:#000090;font:bold 14px/16px 'Liberation Sans',sans-serif;white-space:nowrap;transform:scaleX(0.82);transform-origin:0 0;">DL</div>
<div class="a" style="left:1001px;top:233px;color:#000;font:bold 16px/18px 'Liberation Serif',serif;white-space:nowrap;transform:scaleX(0.75);transform-origin:0 0;">I</div>
<div class="a" style="left:1004.5px;top:404px;color:#008000;font:bold 16px/18px 'Liberation Sans',sans-serif;white-space:nowrap;transform:scaleX(0.9);transform-origin:0 0;">G</div>
<div class="a" style="left:1001px;top:451px;color:#a000a0;font:16px/18px 'Liberation Mono',monospace;white-space:nowrap;">G</div>
<div class="a" style="left:1009px;top:451px;color:#008000;font:16px/18px 'Liberation Mono',monospace;white-space:nowrap;">9</div>
<div class="a" style="left:1001px;top:475px;color:#a000a0;font:16px/18px 'Liberation Mono',monospace;white-space:nowrap;letter-spacing:-1.4px;">GS</div>
<div class="a" style="left:1002.5px;top:499px;color:#000;font:bold 14px/16px 'Liberation Sans',sans-serif;white-space:nowrap;transform:scaleX(0.9);transform-origin:0 0;">LS</div>
<div class="a" style="left:1004.5px;top:523.5px;color:#000;font:bold 14px/16px 'Liberation Sans',sans-serif;white-space:nowrap;transform:scaleX(0.9);transform-origin:0 0;">Bi</div>
<div class="a" style="left:29px;top:716px;width:966px;height:22px;background:#000;"></div>
<div class="a" style="left:30px;top:716px;width:964px;height:21px;background:#8bbdb4;"></div>
<div class="a" style="left:30px;top:716px;width:964px;height:1px;background:#b4d4ce;"></div>
<div class="a" style="left:34px;top:718px;width:157px;height:1px;background:#4f948a;"></div>
<div class="a" style="left:34px;top:718px;width:1px;height:17px;background:#4f948a;"></div>
<div class="a" style="left:35px;top:719px;width:155px;height:1px;background:#000;"></div>
<div class="a" style="left:35px;top:719px;width:1px;height:15px;background:#000;"></div>
<div class="a" style="left:34px;top:734px;width:157px;height:1px;background:#cfe3de;"></div>
<div class="a" style="left:190px;top:718px;width:1px;height:17px;background:#cfe3de;"></div>
<div class="a" style="left:755px;top:718px;width:239px;height:1px;background:#4f948a;"></div>
<div class="a" style="left:755px;top:718px;width:1px;height:17px;background:#4f948a;"></div>
<div class="a" style="left:756px;top:719px;width:237px;height:1px;background:#000;"></div>
<div class="a" style="left:756px;top:719px;width:1px;height:15px;background:#000;"></div>
<div class="a" style="left:755px;top:734px;width:239px;height:1px;background:#cfe3de;"></div>
<div class="a" style="left:993px;top:718px;width:1px;height:17px;background:#cfe3de;"></div>
<div class="a" style="left:0px;top:739px;width:1024px;height:1px;background:#cfe3de;"></div>
<div class="a" style="left:2px;top:742px;width:50px;height:1px;background:#cfe3de;"></div>
<div class="a" style="left:2px;top:742px;width:1px;height:21px;background:#cfe3de;"></div>
<div class="a" style="left:2px;top:763px;width:51px;height:1px;background:#000;"></div>
<div class="a" style="left:52px;top:742px;width:1px;height:22px;background:#000;"></div>
<div class="a" style="left:3px;top:762px;width:49px;height:1px;background:#4f948a;"></div>
<div class="a" style="left:51px;top:743px;width:1px;height:20px;background:#4f948a;"></div>
<svg width="60" height="768"><g transform="translate(5,745)"><path d="M1 3 Q4 1 7 3 L6 8 Q3 6 0 8 Z" fill="#e04020"/><path d="M8 3.3 Q11 5 14 3 L13 8 Q10 10 7 8.3 Z" fill="#30b030"/><path d="M0 9 Q3 7 6 9 L5 14 Q2 12 -1 14 Z" fill="#3060e0"/><path d="M7 9.3 Q10 11 13 9 L12 14 Q9 16 6 14.3 Z" fill="#f0c020"/></g></svg>
<div class="a" style="left:23px;top:746px;font:bold 12px/14px 'Liberation Sans',sans-serif;letter-spacing:-0.2px">Start</div>
<div class="a" style="left:59px;top:744px;width:1px;height:20px;background:#cfe3de;"></div>
<div class="a" style="left:61px;top:744px;width:1px;height:20px;background:#4f948a;"></div>
<div class="a" style="left:59px;top:744px;width:2px;height:1px;background:#cfe3de;"></div>
<div class="a" style="left:60px;top:763px;width:2px;height:1px;background:#4f948a;"></div>
<div class="a" style="left:467px;top:744px;width:1px;height:20px;background:#cfe3de;"></div>
<div class="a" style="left:469px;top:744px;width:1px;height:20px;background:#4f948a;"></div>
<div class="a" style="left:467px;top:744px;width:2px;height:1px;background:#cfe3de;"></div>
<div class="a" style="left:468px;top:763px;width:2px;height:1px;background:#4f948a;"></div>
<div class="a" style="left:883px;top:744px;width:1px;height:20px;background:#cfe3de;"></div>
<div class="a" style="left:885px;top:744px;width:1px;height:20px;background:#4f948a;"></div>
<div class="a" style="left:883px;top:744px;width:2px;height:1px;background:#cfe3de;"></div>
<div class="a" style="left:884px;top:763px;width:2px;height:1px;background:#4f948a;"></div>
<svg width="1024" height="768"><g transform="translate(76.5,753.5)"><path d="M-7 -3 Q-6 -7.5 0 -7.5 L5 -7.5 L5 -5 L7.5 -3 L6 3 Q4 7.5 -1 7.5 Q-7.5 7 -7.5 0Z" fill="#2a72e8"/><ellipse cx="-1" cy="0.5" rx="4.6" ry="5" fill="#f4ecd0"/><rect x="0" y="-6.5" width="5.5" height="8" fill="#fff" stroke="#7090c0" stroke-width="0.6"/><path d="M-2 1.5 L3 -2 L3.6 -1 L-1 2.5Z" fill="#202020"/><circle cx="7" cy="-3.3" r="1.2" fill="#f06020"/></g><g transform="translate(99.5,753.5)"><rect x="-5" y="-2.5" width="11.5" height="8" fill="#f4f4fc" stroke="#8890c0" stroke-width="0.7"/><rect x="3.3" y="-1" width="2" height="2.4" fill="#e07030"/><path d="M-7 1 L-7 -3.5 Q-3 -8.5 3 -6.5 L4 -8 L6 -3 L0.5 -2.6 L1.8 -4.3 Q-2 -5.5 -4 -2 Z" fill="#2a70e0"/><path d="M6.5 1 L6.5 4 Q3 8 -3 6.6 L-4 8 L-6 3 L-0.5 2.8 L-1.8 4.4 Q2 5.5 4 2.5Z" fill="#3a80f0"/></g><g transform="translate(122.5,753.5)"><path d="M-7.5 -4.5 L-6.5 -7 L-2 -7 L-1 -5.5 L5.5 -5.5 L5.5 5.5 L-7.5 5.5Z" fill="#d89838"/><path d="M-7 -2.5 L7.5 -2.5 L6 6 L-7.5 6Z" fill="#f4cc70"/><circle cx="-0.5" cy="0" r="3.9" fill="#c8e8fc" stroke="#8098b0" stroke-width="0.9"/><path d="M2.3 3 L6.3 7" stroke="#c09050" stroke-width="2"/></g><g transform="translate(146,754) rotate(18) scale(1.0)"><rect x="-7" y="-7" width="14" height="14" fill="#181818"/><rect x="-7" y="-7" width="2" height="2" fill="#a0a0a0"/><rect x="5" y="-7" width="2" height="2" fill="#a0a0a0"/><rect x="-7" y="5" width="2" height="2" fill="#a0a0a0"/><rect x="5" y="5" width="2" height="2" fill="#a0a0a0"/><path d="M0 0 L0 -5.5 A5.5 5.5 0 0 1 4.8 -2.7 Z" fill="#20d0d0"/><path d="M0 0 L4.8 -2.7 A5.5 5.5 0 0 1 4.8 2.7 Z" fill="#f0e020"/><path d="M0 0 L4.8 2.7 A5.5 5.5 0 0 1 0 5.5 Z" fill="#e02020"/><path d="M0 0 L0 5.5 A5.5 5.5 0 0 1 -4.8 2.7 Z" fill="#e020e0"/><path d="M0 0 L-4.8 2.7 A5.5 5.5 0 0 1 -4.8 -2.7 Z" fill="#2030e0"/><path d="M0 0 L-4.8 -2.7 A5.5 5.5 0 0 1 0 -5.5 Z" fill="#20c020"/><circle r="1.6" fill="#d0d0d0"/></g><path d="M168 745.5 L170 747.5 L169.4 749.5 L171.6 750 L177 750.8 L174 753.8 L170.4 755 L168.8 757.6 L166.6 761.8 L164.8 761 L166 757 L165.2 755 L162.6 753.6 L161 750.6 L165.4 751.2 L167 750 L166.6 747.6 Z" fill="#0008f0"/><g transform="translate(192,753.5)"><path d="M-8 0.5 L-1 -7.5 L7.5 -0.5 L0.5 7.5Z" fill="#c4c4c4" stroke="#505050" stroke-width="1.1"/><path d="M4.5 -6.5 L-5 0.5 L-0.5 0.8 L-6.5 6.6 L5 0 L0.8 -0.5 Z" fill="#f09018"/><path d="M3 -5 L-3 -0.3 L0 0 Z" fill="#f8d050"/></g><g transform="translate(215,753.5)"><circle r="6.6" fill="none" stroke="#18a048" stroke-width="2.6"/><circle r="6.6" fill="none" stroke="#60e080" stroke-width="1" stroke-dasharray="6 15"/><path d="M-2 -8.6 L3.5 -6.6 L-1 -3.6 Z" fill="#0c7030"/><path d="M2 8.6 L-3.5 6.6 L1 3.6 Z" fill="#0c7030"/><circle r="4.6" fill="#5868e0"/><path d="M-3 -2 Q0 -4 2 -1 Q0 1 -1 3 Q-4 2 -3 -2Z" fill="#d8e0ff"/></g><g transform="translate(238,755)"><ellipse cx="-1" cy="0" rx="4.6" ry="3" fill="#000"/><circle cx="4" cy="0" r="2.2" fill="#000"/><path d="M-4 -1 L-7 -3.5 M-3 1 L-7 3 L-6.5 5.5 M-1 2 L-2 6 M2 2 L2.5 6.5 M5 1.5 L7.5 3 M-2 -2 L-4 -5 M5 -1.5 L7.5 -3.5" stroke="#000" stroke-width="1.1" fill="none"/><rect x="-3" y="-1.6" width="2" height="1.2" fill="#30c0c0"/><rect x="0.5" y="-1" width="1.6" height="1" fill="#30c0c0"/></g><g transform="translate(262,754)"><ellipse cx="0.5" cy="6.3" rx="6.8" ry="1.7" fill="#101020"/><rect x="-4" y="-7.5" width="8" height="10" rx="3" fill="#181830"/><rect x="-2.6" y="-6.3" width="5.2" height="7.5" rx="2" fill="#e8e030"/><rect x="-1" y="-5" width="2" height="3" fill="#404020"/><rect x="-3" y="1.5" width="7" height="4" fill="#283070"/><rect x="4" y="2" width="3" height="2.4" fill="#606070"/></g><rect x="276" y="746" width="16" height="16" fill="#404040"/><rect x="277" y="747" width="13" height="13" fill="#fff"/><rect x="276" y="746" width="15" height="1" fill="#909090"/><rect x="276" y="746" width="1" height="15" fill="#909090"/><g transform="translate(307,753.5)"><rect x="-7" y="-7" width="10.5" height="13" fill="#d8e8f8" stroke="#88a8d0" stroke-width="0.8"/><rect x="-7" y="-7" width="10.5" height="2.4" fill="#78a8e8"/><rect x="-5.4" y="0" width="2.6" height="4.5" fill="#30a030"/><rect x="-5.4" y="-2" width="2.6" height="2" fill="#e06020"/><circle cx="3" cy="2" r="4.8" fill="#b8a8e8" stroke="#8878c0" stroke-width="0.7"/><circle cx="3" cy="2" r="1.3" fill="#f0f0ff"/></g><g transform="translate(329.5,753.5)"><path d="M-5.5 -6 L4.5 -6.5 L6.5 4.5 L-4.5 7.5Z" fill="#5c9cf0"/><path d="M-5.5 -6 L-1 -6.3 L0.5 6 L-4.5 7.5Z" fill="#88c0f8"/><path d="M-6 -7 L4.6 -7.6 L4.8 -5.6 L-5.8 -5Z" fill="#c8a060"/><path d="M-4.5 7.5 L6.5 4.5 L6.8 5.6 L-4 8.5Z" fill="#d0d8e8"/></g><rect x="345" y="746" width="16" height="16" fill="#000"/><ellipse cx="353.3" cy="753.8" rx="5.2" ry="3.9" fill="#a8c4e4"/><ellipse cx="352.3" cy="752.6" rx="2.6" ry="1.6" fill="#e8f0fc"/><path d="M345 758.5 L349 754 L351.5 756 L355 751.5 L357 753 L361 748" stroke="#1020f0" stroke-width="1.1" fill="none"/><g transform="translate(377,754)"><circle r="6.3" fill="#2888e8"/><circle cx="-0.3" cy="-0.6" r="3" fill="#8bbdb4"/><rect x="-4" y="-0.4" width="10" height="2.2" fill="#2888e8"/><rect x="1.6" y="1.8" width="5" height="2" fill="#8bbdb4"/><ellipse cx="-0.5" cy="-0.5" rx="8.3" ry="3.4" transform="rotate(-38)" fill="none" stroke="#f0b828" stroke-width="1.5"/></g><g transform="translate(398,753.5)"><path d="M-7 -5.5 L7 -7 L5 6.5 L-4.6 7Z" fill="#d4ecf8" stroke="#98c0d8" stroke-width="0.8"/><path d="M-6 -5 L0 -5.6 L-1 6.5 L-4 6.6Z" fill="#f4fcff"/><path d="M-2.4 3 L0.6 -2.6 L3.6 3 L1.8 3 L0.6 1 L-0.6 3Z" fill="#28a838"/><path d="M-1 -1 L3 -1 L3 1 L-1 1Z" fill="#28a838"/></g><g transform="translate(422,753.3)"><circle r="7.6" fill="#e87a1c"/><circle cx="0.6" cy="-1.4" r="4.6" fill="#2a56b4"/><path d="M-7.6 0 Q-6 6 0 7.6 Q6 7 7.4 1 Q4 5 0 4.4 Q-4 4 -4.6 -1 Q-6 -3 -5 -5.5 Q-8 -3 -7.6 0Z" fill="#f09428"/><path d="M-5 -5.6 Q-2 -8 2 -7.3 Q0 -6 -2.5 -4 Z" fill="#f8c040"/></g><g transform="translate(444.7,753.5)"><circle r="7.4" fill="#c8d0e0"/><path d="M0 0 L-7.4 0 A7.4 7.4 0 0 1 0 -7.4Z" fill="#e04830"/><path d="M0 0 L0 -7.4 A7.4 7.4 0 0 1 7.4 0Z" fill="#38a838"/><path d="M0 0 L7.4 0 A7.4 7.4 0 0 1 0 7.4Z" fill="#e8a020"/><path d="M0 0 L0 7.4 A7.4 7.4 0 0 1 -7.4 0Z" fill="#3060d8"/><circle r="5.4" fill="#f0f4ff"/><circle r="4.4" fill="#3858d0"/><path d="M-1.6 -2.6 L2.8 0 L-1.6 2.6Z" fill="#fff"/></g></svg>
<div class="a" style="left:230px;top:745px;font:bold 10px/10px 'Liberation Serif',serif;color:#e00000;letter-spacing:-0.3px">MS</div>
<div class="a" style="left:278px;top:745px;font:bold 10px/11px 'Liberation Sans',sans-serif;color:#000;letter-spacing:-0.5px">FT</div>
<div class="a" style="left:282px;top:752px;font:bold 9px/9px 'Liberation Sans',sans-serif;color:#0000e0">4</div>
<div class="a" style="left:474px;top:742px;width:130px;height:1px;background:#cfe3de;"></div>
<div class="a" style="left:474px;top:742px;width:1px;height:21px;background:#cfe3de;"></div>
<div class="a" style="left:474px;top:763px;width:131px;height:1px;background:#000;"></div>
<div class="a" style="left:604px;top:742px;width:1px;height:22px;background:#000;"></div>
<div class="a" style="left:475px;top:762px;width:129px;height:1px;background:#4f948a;"></div>
<div class="a" style="left:603px;top:743px;width:1px;height:20px;background:#4f948a;"></div>
<div class="a" style="left:608px;top:742px;width:130px;height:1px;background:#cfe3de;"></div>
<div class="a" style="left:608px;top:742px;width:1px;height:21px;background:#cfe3de;"></div>
<div class="a" style="left:608px;top:763px;width:131px;height:1px;background:#000;"></div>
<div class="a" style="left:738px;top:742px;width:1px;height:22px;background:#000;"></div>
<div class="a" style="left:609px;top:762px;width:129px;height:1px;background:#4f948a;"></div>
<div class="a" style="left:737px;top:743px;width:1px;height:20px;background:#4f948a;"></div>
<div class="a" style="left:742px;top:742px;width:132px;height:22px;background:#a8cec7;"></div>
<svg width="1024" height="768" shape-rendering="crispEdges"><defs><pattern id="chk" width="2" height="2" patternUnits="userSpaceOnUse"><rect width="2" height="2" fill="#8bbdb4"/><rect width="1" height="1" fill="#cfe3de"/><rect x="1" y="1" width="1" height="1" fill="#cfe3de"/></pattern></defs><rect x="744" y="744" width="129" height="19" fill="url(#chk)"/></svg>
<div class="a" style="left:742px;top:742px;width:132px;height:1px;background:#000;"></div>
<div class="a" style="left:742px;top:742px;width:1px;height:22px;background:#000;"></div>
<div class="a" style="left:743px;top:743px;width:130px;height:1px;background:#4f948a;"></div>
<div class="a" style="left:743px;top:743px;width:1px;height:20px;background:#4f948a;"></div>
<div class="a" style="left:742px;top:763px;width:132px;height:1px;background:#cfe3de;"></div>
<div class="a" style="left:873px;top:742px;width:1px;height:22px;background:#cfe3de;"></div>
<svg width="1024" height="768"><g transform="translate(486,753)"><circle r="6.6" fill="none" stroke="#18a048" stroke-width="2.6"/><circle r="6.6" fill="none" stroke="#60e080" stroke-width="1" stroke-dasharray="6 15"/><path d="M-2 -8.6 L3.5 -6.6 L-1 -3.6 Z" fill="#0c7030"/><path d="M2 8.6 L-3.5 6.6 L1 3.6 Z" fill="#0c7030"/><circle r="4.6" fill="#5868e0"/><path d="M-3 -2 Q0 -4 2 -1 Q0 1 -1 3 Q-4 2 -3 -2Z" fill="#d8e0ff"/></g><g transform="translate(620,753.3)"><circle r="7.6" fill="#e87a1c"/><circle cx="0.6" cy="-1.4" r="4.6" fill="#2a56b4"/><path d="M-7.6 0 Q-6 6 0 7.6 Q6 7 7.4 1 Q4 5 0 4.4 Q-4 4 -4.6 -1 Q-6 -3 -5 -5.5 Q-8 -3 -7.6 0Z" fill="#f09428"/><path d="M-5 -5.6 Q-2 -8 2 -7.3 Q0 -6 -2.5 -4 Z" fill="#f8c040"/></g></svg>
<div class="a" style="left:748px;top:746px;width:15px;height:15px;background:#f4f4f4;"></div>
<div class="a" style="left:748px;top:760px;width:15px;height:1px;background:#000;"></div>
<div class="a" style="left:762px;top:746px;width:1px;height:15px;background:#000;"></div>
<div class="a" style="left:749px;top:745px;font:bold 10px/11px 'Liberation Sans',sans-serif;color:#000;letter-spacing:-0.5px">FT</div>
<div class="a" style="left:753px;top:752px;font:bold 9px/9px 'Liberation Sans',sans-serif;color:#0000e0">4</div>
<div class="a" style="left:498px;top:746px;font:12px 'Liberation Sans',sans-serif;line-height:14px;letter-spacing:-0.586px;white-space:nowrap">ABC [Yet Another B...</div>
<div class="a" style="left:631px;top:746px;font:12px 'Liberation Sans',sans-serif;line-height:14px;letter-spacing:-0.545px;white-space:nowrap">FUTURES :: Zobac...</div>
<div class="a" style="left:768px;top:747px;font:bold 12px 'Liberation Sans',sans-serif;line-height:14px;letter-spacing:0.096px;white-space:nowrap">Fibonacci/Gala...</div>
<div class="a" style="left:894px;top:746px;width:12px;height:16px;background:#000080;"></div>
<div class="a" style="left:895px;top:747px;width:11px;overflow:hidden;font:12px/14px 'Liberation Sans',sans-serif;color:#fff;letter-spacing:-0.8px">PL</div>
<div class="a" style="left:910px;top:742px;width:112px;height:1px;background:#4f948a;"></div>
<div class="a" style="left:910px;top:742px;width:1px;height:24px;background:#4f948a;"></div>
<div class="a" style="left:910px;top:765px;width:112px;height:1px;background:#cfe3de;"></div>
<div class="a" style="left:1021px;top:742px;width:1px;height:24px;background:#cfe3de;"></div>
<div class="a" style="left:914px;top:746px;font:bold 13px/14px 'Liberation Sans',sans-serif;color:#000">«</div>
<div class="a" style="left:988px;top:747px;font:12px/14px 'Liberation Sans',sans-serif;color:#000;letter-spacing:-0.606px">19:55</div>
<svg width="1024" height="768"><rect x="929" y="749" width="7" height="7" fill="#58b0f8" stroke="#3878d0" stroke-width="0.8"/><rect x="930" y="750" width="3" height="3" fill="#a0d8ff"/><rect x="930" y="757" width="6" height="2.4" fill="#f0f0f8" stroke="#8890b0" stroke-width="0.5"/><path d="M937 753.5 q2.4 -2.4 0 -5.4 M939.4 754.5 q3.4 -3.6 0 -7.4 M941.8 755.3 q4 -4.6 0 -9" stroke="#50c818" stroke-width="1.3" fill="none"/><ellipse cx="953" cy="752.5" rx="5.6" ry="6.4" transform="rotate(-25 953 752.5)" fill="#686868"/><ellipse cx="951.6" cy="751.6" rx="3" ry="3.8" transform="rotate(-25 951.6 751.6)" fill="#b8b8c0"/><circle cx="950.8" cy="751" r="1.3" fill="#505058"/><path d="M955.5 760.5 q4 -1.5 6 -5.5 M957.5 762 q4 -2 5.5 -5.5" stroke="#98a0e8" stroke-width="1.1" fill="none"/><rect x="965" y="747" width="14.5" height="11" fill="#202020"/><rect x="965" y="747" width="13.5" height="10" fill="#7c7c7c"/><rect x="965" y="759" width="5.5" height="1.8" fill="#202020"/><rect x="974" y="759" width="5.5" height="1.8" fill="#202020"/></svg>
</body></html>
